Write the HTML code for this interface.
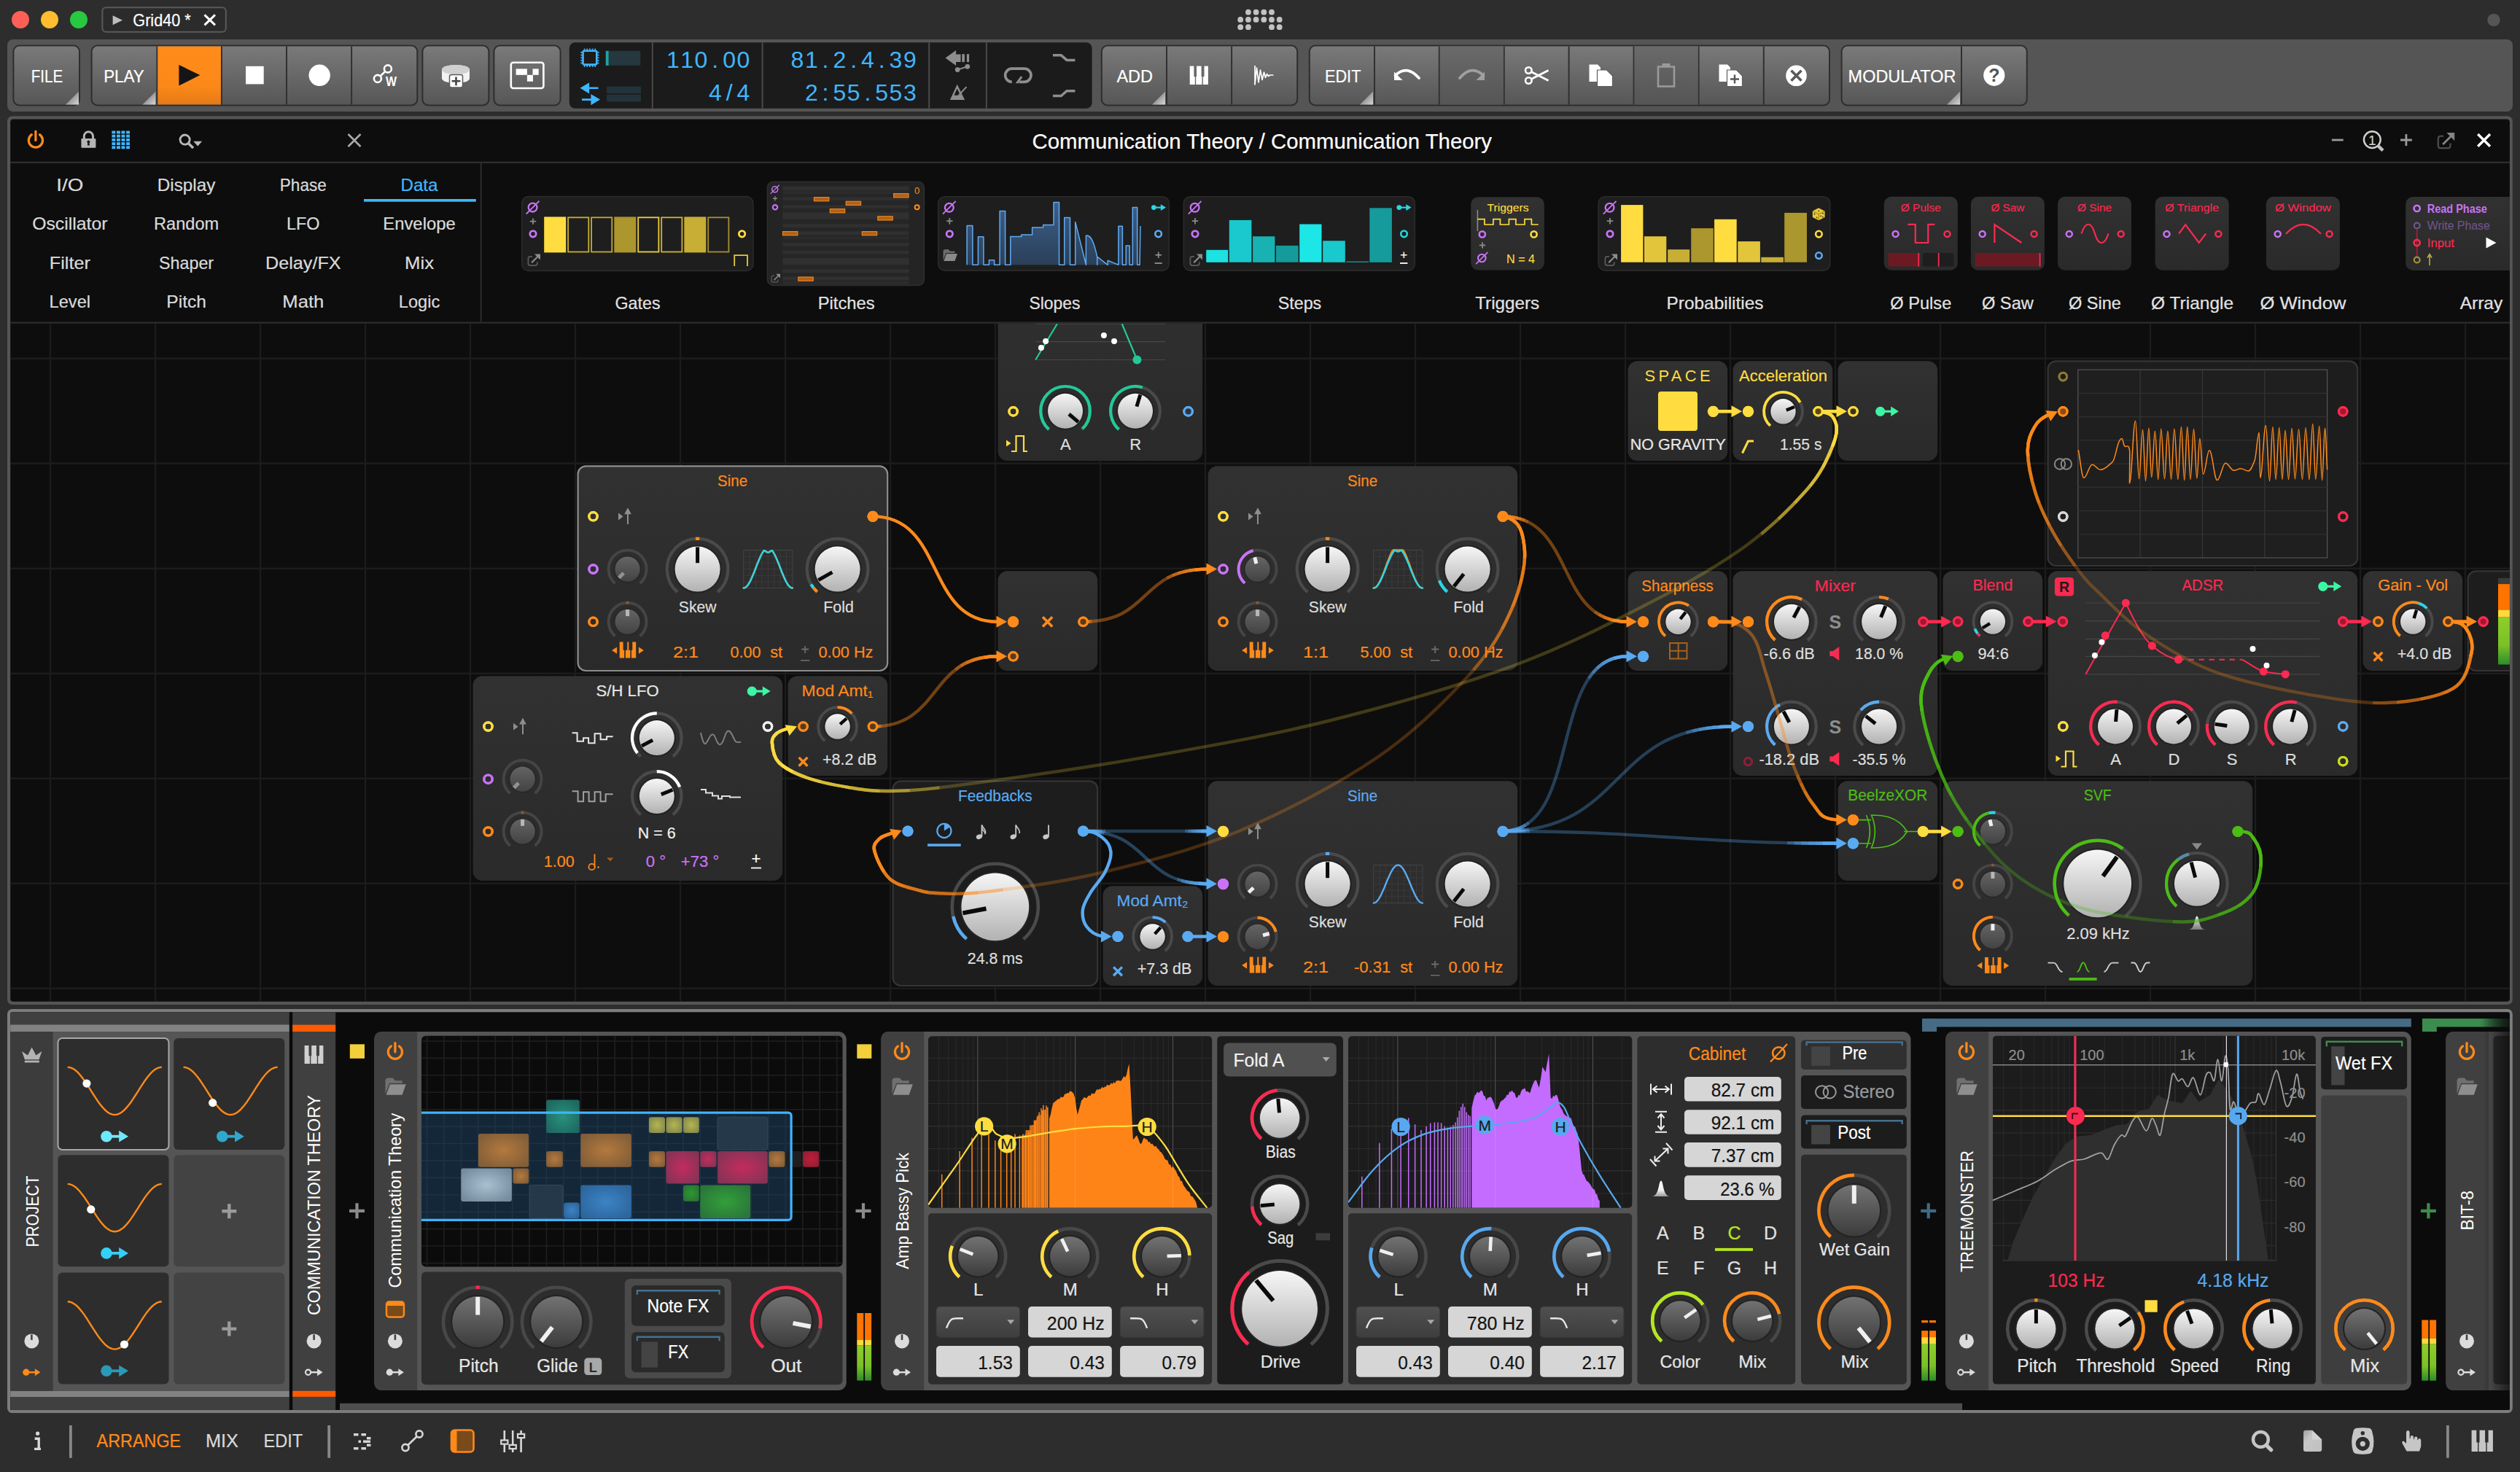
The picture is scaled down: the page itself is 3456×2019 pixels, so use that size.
<!DOCTYPE html>
<html><head><meta charset="utf-8"><title>Grid40</title>
<style>
html,body{margin:0;padding:0;background:#2d2d2d;overflow:hidden;}
body{width:3456px;height:2019px;}
svg{display:block;font-family:"Liberation Sans", sans-serif;}
text{white-space:pre;}
</style></head><body>
<svg width="3456" height="2019" viewBox="0 0 3456 2019">
<defs>
<linearGradient id="gLight" x1="0" y1="0" x2="0" y2="1"><stop offset="0" stop-color="#f6f6f6"/><stop offset="1" stop-color="#b2b2b2"/></linearGradient>
<linearGradient id="gDark" x1="0" y1="0" x2="0" y2="1"><stop offset="0" stop-color="#727272"/><stop offset="1" stop-color="#3c3c3c"/></linearGradient>
 <linearGradient id="gDarkS" x1="0" y1="0" x2="0" y2="1"><stop offset="0" stop-color="#646464"/><stop offset="1" stop-color="#434343"/></linearGradient>
<linearGradient id="gBtn" x1="0" y1="0" x2="0" y2="1"><stop offset="0" stop-color="#7a7a7a"/><stop offset="1" stop-color="#565656"/></linearGradient>
<linearGradient id="gBtnDim" x1="0" y1="0" x2="0" y2="1"><stop offset="0" stop-color="#6a6a6a"/><stop offset="1" stop-color="#555555"/></linearGradient>
<linearGradient id="gPlay" x1="0" y1="0" x2="0" y2="1"><stop offset="0" stop-color="#ff8c1a"/><stop offset="0.7" stop-color="#fb8818"/><stop offset="1" stop-color="#e47a17"/></linearGradient>
<linearGradient id="gMod" x1="0" y1="0" x2="0" y2="1"><stop offset="0" stop-color="#313131"/><stop offset="1" stop-color="#2a2a2a"/></linearGradient>
<linearGradient id="gTri" x1="0" y1="0" x2="1" y2="1"><stop offset="0.5" stop-color="#9a9a9a"/><stop offset="1" stop-color="#d8d8d8"/></linearGradient>
<linearGradient id="gSlope" x1="0" y1="0" x2="0" y2="1"><stop offset="0" stop-color="#3c5f8a"/><stop offset="1" stop-color="#2b3f58"/></linearGradient><clipPath id="clipArr"><rect x="3290" y="260" width="151.9" height="180"/></clipPath><clipPath id="clipCanvas"><rect x="14.2" y="443.8" width="3427.7" height="929.9"/></clipPath><linearGradient id="gMeter" x1="0" y1="0" x2="0" y2="1"><stop offset="0" stop-color="#8fce2a"/><stop offset="0.6" stop-color="#7ac026"/><stop offset="1" stop-color="#2c8c2c"/></linearGradient><linearGradient id="gPeak" x1="0" y1="0" x2="0" y2="1"><stop offset="0" stop-color="#f4f4f4"/><stop offset="1" stop-color="#7a7a7a"/></linearGradient><clipPath id="clipGD"><rect x="578" y="1420.7" width="577.5" height="316.9" rx="6"/></clipPath><radialGradient id="gm0" cx="0.5" cy="0.5" r="0.6"><stop offset="0" stop-color="#2a9a82"/><stop offset="1" stop-color="#1f6e66"/></radialGradient><radialGradient id="gm1" cx="0.5" cy="0.5" r="0.6"><stop offset="0" stop-color="#c07f3e"/><stop offset="1" stop-color="#8a6238"/></radialGradient><radialGradient id="gm2" cx="0.5" cy="0.5" r="0.6"><stop offset="0" stop-color="#c07f3e"/><stop offset="1" stop-color="#8a6238"/></radialGradient><radialGradient id="gm3" cx="0.5" cy="0.5" r="0.6"><stop offset="0" stop-color="#c07f3e"/><stop offset="1" stop-color="#8a6238"/></radialGradient><radialGradient id="gm4" cx="0.5" cy="0.5" r="0.6"><stop offset="0" stop-color="#b4ccdc"/><stop offset="1" stop-color="#7c94a6"/></radialGradient><radialGradient id="gm5" cx="0.5" cy="0.5" r="0.6"><stop offset="0" stop-color="#c07f3e"/><stop offset="1" stop-color="#8a6238"/></radialGradient><radialGradient id="gm6" cx="0.5" cy="0.5" r="0.6"><stop offset="0" stop-color="#263a4c"/><stop offset="1" stop-color="#263a4c"/></radialGradient><radialGradient id="gm7" cx="0.5" cy="0.5" r="0.6"><stop offset="0" stop-color="#3f8ad0"/><stop offset="1" stop-color="#2e6aa4"/></radialGradient><radialGradient id="gm8" cx="0.5" cy="0.5" r="0.6"><stop offset="0" stop-color="#3f8ad0"/><stop offset="1" stop-color="#2e6aa4"/></radialGradient><radialGradient id="gm9" cx="0.5" cy="0.5" r="0.6"><stop offset="0" stop-color="#c0c050"/><stop offset="1" stop-color="#8c9050"/></radialGradient><radialGradient id="gm10" cx="0.5" cy="0.5" r="0.6"><stop offset="0" stop-color="#c0c050"/><stop offset="1" stop-color="#8c9050"/></radialGradient><radialGradient id="gm11" cx="0.5" cy="0.5" r="0.6"><stop offset="0" stop-color="#c0c050"/><stop offset="1" stop-color="#8c9050"/></radialGradient><radialGradient id="gm12" cx="0.5" cy="0.5" r="0.6"><stop offset="0" stop-color="#263a4c"/><stop offset="1" stop-color="#263a4c"/></radialGradient><radialGradient id="gm13" cx="0.5" cy="0.5" r="0.6"><stop offset="0" stop-color="#c07f3e"/><stop offset="1" stop-color="#8a6238"/></radialGradient><radialGradient id="gm14" cx="0.5" cy="0.5" r="0.6"><stop offset="0" stop-color="#d02c60"/><stop offset="1" stop-color="#8e3458"/></radialGradient><radialGradient id="gm15" cx="0.5" cy="0.5" r="0.6"><stop offset="0" stop-color="#d02c60"/><stop offset="1" stop-color="#8e3458"/></radialGradient><radialGradient id="gm16" cx="0.5" cy="0.5" r="0.6"><stop offset="0" stop-color="#d02c60"/><stop offset="1" stop-color="#8e3458"/></radialGradient><radialGradient id="gm17" cx="0.5" cy="0.5" r="0.6"><stop offset="0" stop-color="#c07f3e"/><stop offset="1" stop-color="#8a6238"/></radialGradient><radialGradient id="gm18" cx="0.5" cy="0.5" r="0.6"><stop offset="0" stop-color="#202020"/><stop offset="1" stop-color="#202020"/></radialGradient><radialGradient id="gm19" cx="0.5" cy="0.5" r="0.6"><stop offset="0" stop-color="#d01c3c"/><stop offset="1" stop-color="#9a2038"/></radialGradient><radialGradient id="gm20" cx="0.5" cy="0.5" r="0.6"><stop offset="0" stop-color="#2ea030"/><stop offset="1" stop-color="#2a7a34"/></radialGradient><radialGradient id="gm21" cx="0.5" cy="0.5" r="0.6"><stop offset="0" stop-color="#34a83a"/><stop offset="1" stop-color="#2c7c3a"/></radialGradient><clipPath id="clipSp1273"><rect x="1273" y="1421.2" width="389.2" height="235.6" rx="5"/></clipPath><linearGradient id="gDrop" x1="0" y1="0" x2="0" y2="1"><stop offset="0" stop-color="#505050"/><stop offset="1" stop-color="#3e3e3e"/></linearGradient><clipPath id="clipSp1849"><rect x="1849" y="1421.2" width="389.3" height="235.6" rx="5"/></clipPath><linearGradient id="gPeak2" x1="0" y1="0" x2="0" y2="1"><stop offset="0" stop-color="#ffffff"/><stop offset="0.6" stop-color="#f0f0f0"/><stop offset="1" stop-color="#9a9a9a"/></linearGradient><linearGradient id="gGreenBar" gradientUnits="userSpaceOnUse" x1="3322" y1="0" x2="3442" y2="0"><stop offset="0" stop-color="#3c8c50"/><stop offset="0.65" stop-color="#3c8c50"/><stop offset="1" stop-color="#1c3a24"/></linearGradient><clipPath id="clipB8"><rect x="3340" y="1388.3" width="101.8" height="545"/></clipPath><linearGradient id="gFadeR" gradientUnits="userSpaceOnUse" x1="3405" y1="0" x2="3442" y2="0"><stop offset="0" stop-color="#0b0b0b" stop-opacity="0"/><stop offset="1" stop-color="#0b0b0b" stop-opacity="0.75"/></linearGradient><linearGradient id="gFile" x1="0" y1="0" x2="1" y2="1"><stop offset="0" stop-color="#a0a0a0"/><stop offset="0.35" stop-color="#c6c6c6"/><stop offset="1" stop-color="#c0c0c0"/></linearGradient>
</defs>
<rect x="0.0" y="0.0" width="3456.0" height="2019.0" fill="#2d2d2d"/>
<circle cx="28.0" cy="27.0" r="12.0" fill="#ff5f57"/>
<circle cx="68.0" cy="27.0" r="12.0" fill="#febc2e"/>
<circle cx="108.0" cy="27.0" r="12.0" fill="#28c840"/>
<rect x="140.4" y="10.3" width="169.4" height="33.4" fill="#2b2b2b" rx="5" stroke="#5a5a5a" stroke-width="2"/>
<path d="M154.6,21.2L168,27.7L154.6,34.2Z" fill="#bdbdbd"/>
<text x="182.3" y="35.9" font-size="24" fill="#ffffff" text-anchor="start" textLength="79.4" lengthAdjust="spacingAndGlyphs" stroke="#ffffff" stroke-width="0.22">Grid40 *</text>
<path d="M280.5,20.3L295,34.4M295,20.3L280.5,34.4" fill="none" stroke="#ffffff" stroke-width="3"/>
<circle cx="1711.9" cy="16.7" r="3.9" fill="#c2c2c2"/>
<circle cx="1722.6" cy="16.7" r="3.9" fill="#c2c2c2"/>
<circle cx="1733.3" cy="16.7" r="3.9" fill="#c2c2c2"/>
<circle cx="1744.0" cy="16.7" r="3.9" fill="#c2c2c2"/>
<circle cx="1701.2" cy="26.9" r="3.9" fill="#c2c2c2"/>
<circle cx="1711.9" cy="26.9" r="3.9" fill="#c2c2c2"/>
<circle cx="1722.6" cy="26.9" r="3.9" fill="#c2c2c2"/>
<circle cx="1733.3" cy="26.9" r="3.9" fill="#c2c2c2"/>
<circle cx="1744.0" cy="26.9" r="3.9" fill="#c2c2c2"/>
<circle cx="1754.7" cy="26.9" r="3.9" fill="#c2c2c2"/>
<circle cx="1701.2" cy="37.2" r="3.9" fill="#c2c2c2"/>
<circle cx="1711.9" cy="37.2" r="3.9" fill="#c2c2c2"/>
<circle cx="1744.0" cy="37.2" r="3.9" fill="#c2c2c2"/>
<circle cx="1754.7" cy="37.2" r="3.9" fill="#c2c2c2"/>
<circle cx="3420.0" cy="27.4" r="8.7" fill="#555555"/>
<rect x="10.0" y="54.0" width="3436.0" height="99.0" fill="#555555" rx="8"/>
<rect x="18.4" y="62.6" width="90.6" height="81.8" fill="url(#gBtn)" rx="8" stroke="#2e2e2e" stroke-width="2"/>
<path d="M108,143.4L90,143.4L108,125.4Z" fill="url(#gTri)"/>
<text x="64.5" y="112.5" font-size="24" fill="#ffffff" text-anchor="middle" textLength="43.3" lengthAdjust="spacingAndGlyphs" stroke="#ffffff" stroke-width="0.22">FILE</text>
<rect x="125.6" y="62.6" width="446.7" height="81.8" fill="url(#gBtn)" rx="8" stroke="#2e2e2e" stroke-width="2"/>
<line x1="215.4" y1="63.6" x2="215.4" y2="143.4" stroke="#303030" stroke-width="2" />
<line x1="303.9" y1="63.6" x2="303.9" y2="143.4" stroke="#303030" stroke-width="2" />
<line x1="393.0" y1="63.6" x2="393.0" y2="143.4" stroke="#303030" stroke-width="2" />
<line x1="482.1" y1="63.6" x2="482.1" y2="143.4" stroke="#303030" stroke-width="2" />
<rect x="216.4" y="63.6" width="86.5" height="79.8" fill="url(#gPlay)"/>
<path d="M213.4,143.4L195.4,143.4L213.4,125.4Z" fill="url(#gTri)"/>
<text x="170.0" y="112.5" font-size="24" fill="#ffffff" text-anchor="middle" textLength="55.6" lengthAdjust="spacingAndGlyphs" stroke="#ffffff" stroke-width="0.22">PLAY</text>
<path d="M245.4,88.9L274.3,103.1L245.4,117.4Z" fill="#151515"/>
<rect x="337.0" y="90.8" width="24.7" height="24.6" fill="#ffffff"/>
<circle cx="438.2" cy="103.3" r="14.7" fill="#ffffff"/>
<line x1="519.5" y1="106.4" x2="530.3" y2="96.0" stroke="#ffffff" stroke-width="2.6" />
<circle cx="531.9" cy="94.4" r="5.0" fill="#666" stroke="#ffffff" stroke-width="2.6"/>
<circle cx="517.9" cy="107.9" r="5.0" fill="#666" stroke="#ffffff" stroke-width="2.6"/>
<text x="536.6" y="117.5" font-size="19" fill="#ffffff" text-anchor="middle" textLength="15.0" lengthAdjust="spacingAndGlyphs" font-weight="bold">W</text>
<rect x="579.4" y="62.6" width="91.0" height="81.8" fill="url(#gBtn)" rx="8" stroke="#2e2e2e" stroke-width="2"/>
<path d="M606,95.5A19,6.6 0 0 1 644,95.5L644,107.5A19,6.6 0 0 1 606,107.5Z" fill="#f2f2f2"/>
<path d="M606,95.5A19,6.6 0 0 0 644,95.5A19,6.6 0 0 0 606,95.5Z" fill="#d0d0d0"/>
<rect x="616.5" y="102.5" width="18.0" height="17.5" fill="#ffffff" rx="2.5" stroke="#5c5c5c" stroke-width="1.5"/>
<path d="M625.5,105.5V117.2M619.6,111.3H631.4" fill="none" stroke="#444" stroke-width="2.6"/>
<rect x="677.4" y="62.6" width="91.2" height="81.8" fill="url(#gBtn)" rx="8" stroke="#2e2e2e" stroke-width="2"/>
<rect x="700.8" y="85.8" width="44.6" height="35.2" fill="none" rx="3" stroke="#ffffff" stroke-width="2.6"/>
<rect x="707.6" y="94.4" width="15.3" height="8.4" fill="#ffffff"/>
<rect x="730.5" y="94.4" width="8.2" height="8.4" fill="#ffffff"/>
<rect x="722.9" y="102.8" width="8.1" height="8.9" fill="#ffffff"/>
<rect x="780.8" y="58.2" width="716.8" height="90.6" fill="#1b1b1b" rx="8"/>
<line x1="894.8" y1="58.2" x2="894.8" y2="148.8" stroke="#4a4a4a" stroke-width="2" />
<line x1="1045.6" y1="58.2" x2="1045.6" y2="148.8" stroke="#4a4a4a" stroke-width="2" />
<line x1="1274.2" y1="58.2" x2="1274.2" y2="148.8" stroke="#4a4a4a" stroke-width="2" />
<line x1="1352.9" y1="58.2" x2="1352.9" y2="148.8" stroke="#4a4a4a" stroke-width="2" />
<rect x="799.5" y="69.8" width="18.8" height="18.8" fill="none" rx="2" stroke="#40b6ff" stroke-width="2.6"/>
<line x1="801.6" y1="66.6" x2="801.6" y2="68.6" stroke="#40b6ff" stroke-width="1.8" />
<line x1="801.6" y1="89.9" x2="801.6" y2="91.9" stroke="#40b6ff" stroke-width="1.8" />
<line x1="796.4" y1="71.9" x2="798.4" y2="71.9" stroke="#40b6ff" stroke-width="1.8" />
<line x1="819.4" y1="71.9" x2="821.4" y2="71.9" stroke="#40b6ff" stroke-width="1.8" />
<line x1="805.2" y1="66.6" x2="805.2" y2="68.6" stroke="#40b6ff" stroke-width="1.8" />
<line x1="805.2" y1="89.9" x2="805.2" y2="91.9" stroke="#40b6ff" stroke-width="1.8" />
<line x1="796.4" y1="75.6" x2="798.4" y2="75.6" stroke="#40b6ff" stroke-width="1.8" />
<line x1="819.4" y1="75.6" x2="821.4" y2="75.6" stroke="#40b6ff" stroke-width="1.8" />
<line x1="808.9" y1="66.6" x2="808.9" y2="68.6" stroke="#40b6ff" stroke-width="1.8" />
<line x1="808.9" y1="89.9" x2="808.9" y2="91.9" stroke="#40b6ff" stroke-width="1.8" />
<line x1="796.4" y1="79.2" x2="798.4" y2="79.2" stroke="#40b6ff" stroke-width="1.8" />
<line x1="819.4" y1="79.2" x2="821.4" y2="79.2" stroke="#40b6ff" stroke-width="1.8" />
<line x1="812.6" y1="66.6" x2="812.6" y2="68.6" stroke="#40b6ff" stroke-width="1.8" />
<line x1="812.6" y1="89.9" x2="812.6" y2="91.9" stroke="#40b6ff" stroke-width="1.8" />
<line x1="796.4" y1="82.9" x2="798.4" y2="82.9" stroke="#40b6ff" stroke-width="1.8" />
<line x1="819.4" y1="82.9" x2="821.4" y2="82.9" stroke="#40b6ff" stroke-width="1.8" />
<line x1="816.2" y1="66.6" x2="816.2" y2="68.6" stroke="#40b6ff" stroke-width="1.8" />
<line x1="816.2" y1="89.9" x2="816.2" y2="91.9" stroke="#40b6ff" stroke-width="1.8" />
<line x1="796.4" y1="86.5" x2="798.4" y2="86.5" stroke="#40b6ff" stroke-width="1.8" />
<line x1="819.4" y1="86.5" x2="821.4" y2="86.5" stroke="#40b6ff" stroke-width="1.8" />
<rect x="830.8" y="69.8" width="47.5" height="20.1" fill="#25373f"/>
<rect x="830.8" y="69.8" width="3.8" height="20.1" fill="#1fa3a3"/>
<path d="M820.5,120.8H801M806.8,115.5L798,120.8L806.8,126.1Z" fill="#40b6ff" stroke="#40b6ff" stroke-width="2.6" stroke-linejoin="miter"/>
<path d="M798,136.6H817.5M811.7,131.3L820.5,136.6L811.7,141.9Z" fill="#40b6ff" stroke="#40b6ff" stroke-width="2.6"/>
<rect x="832.0" y="118.6" width="47.0" height="9.6" fill="#22333b"/>
<rect x="832.0" y="130.0" width="47.0" height="9.4" fill="#22333b"/>
<text x="922.9 942.1 961.5 980.8 1000.1 1019.4" y="93.3" font-size="32" fill="#40b6ff" text-anchor="middle">110.00</text>
<text x="980.8 1000.1 1019.4" y="137.7" font-size="32" fill="#40b6ff" text-anchor="middle">4/4</text>
<text x="1093.4 1112.8 1132.0 1151.3 1170.6 1189.9 1209.2 1228.5 1247.8" y="93.3" font-size="32" fill="#40b6ff" text-anchor="middle">81.2.4.39</text>
<text x="1112.8 1132.0 1151.3 1170.6 1189.9 1209.2 1228.5 1247.8" y="137.7" font-size="32" fill="#40b6ff" text-anchor="middle">2:55.553</text>
<path d="M1296.5,79.6L1311.1,69.1V74.6H1317.5V85.1H1311.1V90.1Z" fill="#8e8e8e"/>
<rect x="1319.3" y="74.2" width="3.6" height="10.9" fill="#8e8e8e"/>
<rect x="1325.9" y="74.2" width="3.2" height="10.9" fill="#8e8e8e"/>
<line x1="1313.2" y1="95.6" x2="1326.8" y2="91.3" stroke="#8e8e8e" stroke-width="2" />
<circle cx="1313.2" cy="95.6" r="3.4" fill="#8e8e8e"/>
<circle cx="1326.8" cy="91.3" r="3.4" fill="#8e8e8e"/>
<path d="M1312.7,115.7L1323.1,137H1302.9Z M1312.7,121.6L1317.2,130.7H1308.4Z" fill="#8e8e8e" fill-rule="evenodd"/>
<line x1="1314.5" y1="131.0" x2="1325.5" y2="119.1" stroke="#8e8e8e" stroke-width="1.9" />
<path d="M1387.7,112.3A9.05,9.05 0 0 1 1387.7,94.2H1404.9A9.05,9.05 0 0 1 1404.9,112.3H1398" fill="none" stroke="#8e8e8e" stroke-width="3.7"/>
<path d="M1392.7,114.15L1400,104.3L1402.4,105.9L1397.6,112.3V114.15Z" fill="#8e8e8e"/>
<path d="M1443.9,75.8H1455.3L1463,82.4H1474.4" fill="none" stroke="#8e8e8e" stroke-width="3.5" stroke-linejoin="miter"/>
<path d="M1443.9,131.5H1455.3L1463,124.8H1474.4" fill="none" stroke="#8e8e8e" stroke-width="3.5" stroke-linejoin="miter"/>
<rect x="1510.8" y="62.6" width="268.4" height="81.8" fill="url(#gBtn)" rx="8" stroke="#2e2e2e" stroke-width="2"/>
<line x1="1600.0" y1="63.6" x2="1600.0" y2="143.4" stroke="#303030" stroke-width="2" />
<line x1="1689.1" y1="63.6" x2="1689.1" y2="143.4" stroke="#303030" stroke-width="2" />
<path d="M1598,143.4L1580,143.4L1598,125.4Z" fill="url(#gTri)"/>
<text x="1556.2" y="112.5" font-size="24" fill="#ffffff" text-anchor="middle" textLength="49.6" lengthAdjust="spacingAndGlyphs" stroke="#ffffff" stroke-width="0.22">ADD</text>
<rect x="1631.7" y="90.6" width="25.2" height="25.4" fill="#ffffff"/>
<rect x="1637.4" y="90.1" width="3.6" height="15.0" fill="#686868"/>
<rect x="1647.6" y="90.1" width="3.9" height="15.0" fill="#686868"/>
<line x1="1639.5" y1="104.6" x2="1639.5" y2="116.5" stroke="#686868" stroke-width="1.4" />
<line x1="1649.2" y1="104.6" x2="1649.2" y2="116.5" stroke="#686868" stroke-width="1.4" />
<path d="M1721,90V116L1723.5,93L1726,113L1728.5,96L1731,109.5L1733.5,99L1735.5,106.5L1737.5,101.5L1739.5,104.5L1741.5,103H1746.5" fill="none" stroke="#ffffff" stroke-width="1.7" stroke-linejoin="round"/>
<rect x="1795.8" y="62.6" width="713.2" height="81.8" fill="url(#gBtn)" rx="8" stroke="#2e2e2e" stroke-width="2"/>
<line x1="1885.0" y1="63.6" x2="1885.0" y2="143.4" stroke="#303030" stroke-width="2" />
<line x1="1973.8" y1="63.6" x2="1973.8" y2="143.4" stroke="#303030" stroke-width="2" />
<line x1="2062.7" y1="63.6" x2="2062.7" y2="143.4" stroke="#303030" stroke-width="2" />
<line x1="2151.6" y1="63.6" x2="2151.6" y2="143.4" stroke="#303030" stroke-width="2" />
<line x1="2240.6" y1="63.6" x2="2240.6" y2="143.4" stroke="#303030" stroke-width="2" />
<line x1="2329.6" y1="63.6" x2="2329.6" y2="143.4" stroke="#303030" stroke-width="2" />
<line x1="2418.8" y1="63.6" x2="2418.8" y2="143.4" stroke="#303030" stroke-width="2" />
<rect x="1974.8" y="63.6" width="86.9" height="79.8" fill="url(#gBtnDim)"/>
<rect x="2241.6" y="63.6" width="87.0" height="79.8" fill="url(#gBtnDim)"/>
<path d="M1883,143.4L1865,143.4L1883,125.4Z" fill="url(#gTri)"/>
<text x="1841.7" y="112.5" font-size="24" fill="#ffffff" text-anchor="middle" textLength="49.4" lengthAdjust="spacingAndGlyphs" stroke="#ffffff" stroke-width="0.22">EDIT</text>
<path d="M1913.5,103.5Q1929,88 1946,107" fill="none" stroke="#ffffff" stroke-width="3.8" stroke-linecap="round"/>
<path d="M1912,98.5V110H1923.5Z" fill="#ffffff"/>
<path d="M2002,107Q2018,88 2034.5,103.5" fill="none" stroke="#a0a0a0" stroke-width="3.8" stroke-linecap="round"/>
<path d="M2036,98.5V110H2024.5Z" fill="#a0a0a0"/>
<circle cx="2096.3" cy="96.5" r="4.3" fill="none" stroke="#ffffff" stroke-width="2.6"/>
<circle cx="2096.3" cy="110.5" r="4.3" fill="none" stroke="#ffffff" stroke-width="2.6"/>
<path d="M2100,98.5L2123.5,110.5M2100,108.5L2123.5,96.5" fill="none" stroke="#ffffff" stroke-width="3"/>
<path d="M2179.5,88.5H2191L2195,92.5V112H2179.5Z" fill="#ffffff"/>
<path d="M2190.5,96H2203.5L2211.5,104V118.5H2190.5Z" fill="#ffffff" stroke="#5d5d5d" stroke-width="1.2"/>
<rect x="2274.0" y="91.5" width="22.0" height="27.0" fill="none" stroke="#9a9a9a" stroke-width="2.6"/>
<rect x="2279.5" y="87.0" width="11.0" height="5.0" fill="#9a9a9a"/>
<path d="M2357.5,88.5H2369L2373,92.5V112H2357.5Z" fill="#ffffff"/>
<path d="M2368.5,96H2381.5L2389.5,104V118.5H2368.5Z" fill="#ffffff" stroke="#5d5d5d" stroke-width="1.2"/>
<path d="M2379,102.5V114.5M2373,108.5H2385" fill="none" stroke="#555" stroke-width="2.4"/>
<circle cx="2463.5" cy="103.8" r="14.3" fill="#ffffff"/>
<path d="M2456.5,96.8L2470.5,110.8M2470.5,96.8L2456.5,110.8" fill="none" stroke="#5a5a5a" stroke-width="3.6"/>
<rect x="2525.6" y="62.6" width="254.2" height="81.8" fill="url(#gBtn)" rx="8" stroke="#2e2e2e" stroke-width="2"/>
<line x1="2690.0" y1="63.6" x2="2690.0" y2="143.4" stroke="#303030" stroke-width="2" />
<path d="M2688,143.4L2670,143.4L2688,125.4Z" fill="url(#gTri)"/>
<text x="2608.5" y="112.5" font-size="24" fill="#ffffff" text-anchor="middle" textLength="147.8" lengthAdjust="spacingAndGlyphs" stroke="#ffffff" stroke-width="0.22">MODULATOR</text>
<circle cx="2734.8" cy="103.3" r="14.6" fill="#ffffff"/>
<text x="2734.8" y="112.2" font-size="25" fill="#555555" text-anchor="middle" font-weight="bold">?</text>
<rect x="10.0" y="159.2" width="3435.8" height="1218.9" fill="#555555" rx="7"/>
<rect x="14.2" y="163.4" width="3427.7" height="1210.3" fill="#0d0d0d" rx="4"/>
<line x1="14.2" y1="222.8" x2="3441.9" y2="222.8" stroke="#333333" stroke-width="2" />
<line x1="14.2" y1="442.6" x2="3441.9" y2="442.6" stroke="#2c2c2c" stroke-width="2.4" />
<line x1="659.7" y1="223.8" x2="659.7" y2="441.6" stroke="#2c2c2c" stroke-width="2" />
<path d="M54.41,184.64A9.60,9.60 0 1 1 43.39,184.64" fill="none" stroke="#ff8a1a" stroke-width="3.2" stroke-linecap="round"/>
<line x1="48.9" y1="180.2" x2="48.9" y2="192.5" stroke="#ff8a1a" stroke-width="3.2" stroke-linecap="round"/>
<path d="M115.3,190V186.8A6.1,6.1 0 0 1 127.5,186.8V190" fill="none" stroke="#b4b4b4" stroke-width="3"/>
<rect x="111.4" y="190.0" width="20.0" height="12.8" fill="#b4b4b4" rx="1"/>
<circle cx="121.4" cy="194.6" r="2.0" fill="#1a1a1a"/>
<path d="M120.4,195H122.4L123,199.5H119.8Z" fill="#1a1a1a"/>
<rect x="153.4" y="179.5" width="4.9" height="3.9" fill="#40b6ff"/>
<rect x="160.0" y="179.5" width="4.9" height="3.9" fill="#40b6ff"/>
<rect x="166.5" y="179.5" width="4.9" height="3.9" fill="#40b6ff"/>
<rect x="173.1" y="179.5" width="4.9" height="3.9" fill="#40b6ff"/>
<rect x="153.4" y="184.7" width="4.9" height="3.9" fill="#40b6ff"/>
<rect x="160.0" y="184.7" width="4.9" height="3.9" fill="#40b6ff"/>
<rect x="166.5" y="184.7" width="4.9" height="3.9" fill="#40b6ff"/>
<rect x="173.1" y="184.7" width="4.9" height="3.9" fill="#40b6ff"/>
<rect x="153.4" y="189.9" width="4.9" height="3.9" fill="#40b6ff"/>
<rect x="160.0" y="189.9" width="4.9" height="3.9" fill="#40b6ff"/>
<rect x="166.5" y="189.9" width="4.9" height="3.9" fill="#40b6ff"/>
<rect x="173.1" y="189.9" width="4.9" height="3.9" fill="#40b6ff"/>
<rect x="153.4" y="195.1" width="4.9" height="3.9" fill="#40b6ff"/>
<rect x="160.0" y="195.1" width="4.9" height="3.9" fill="#40b6ff"/>
<rect x="166.5" y="195.1" width="4.9" height="3.9" fill="#40b6ff"/>
<rect x="173.1" y="195.1" width="4.9" height="3.9" fill="#40b6ff"/>
<rect x="153.4" y="200.3" width="4.9" height="3.9" fill="#40b6ff"/>
<rect x="160.0" y="200.3" width="4.9" height="3.9" fill="#40b6ff"/>
<rect x="166.5" y="200.3" width="4.9" height="3.9" fill="#40b6ff"/>
<rect x="173.1" y="200.3" width="4.9" height="3.9" fill="#40b6ff"/>
<circle cx="253.6" cy="191.6" r="6.6" fill="none" stroke="#b8b8b8" stroke-width="2.8"/>
<line x1="258.5" y1="196.8" x2="265.0" y2="203.0" stroke="#b8b8b8" stroke-width="3.6" />
<path d="M265.2,193.8H277.2L271.2,200.5Z" fill="#b8b8b8"/>
<path d="M477.5,184L494.5,201M494.5,184L477.5,201" fill="none" stroke="#a8a8a8" stroke-width="2.6"/>
<text x="1730.8" y="204.3" font-size="30" fill="#ffffff" text-anchor="middle" textLength="630.5" lengthAdjust="spacingAndGlyphs" stroke="#ffffff" stroke-width="0.22">Communication Theory / Communication Theory</text>
<line x1="3197.9" y1="192.0" x2="3213.7" y2="192.0" stroke="#9a9a9a" stroke-width="2.8" />
<circle cx="3253.3" cy="191.6" r="11.4" fill="none" stroke="#d0d0d0" stroke-width="2.4"/>
<line x1="3261.5" y1="200.2" x2="3268.0" y2="206.4" stroke="#c0c0c0" stroke-width="4.6" />
<text x="3253.3" y="198.5" font-size="19" fill="#d0d0d0" text-anchor="middle" stroke="#d0d0d0" stroke-width="0.14">1</text>
<path d="M3292,192H3307.8M3299.9,184.1V199.9" fill="none" stroke="#9a9a9a" stroke-width="2.8"/>
<path d="M3351.2,186.6H3347.6Q3343.8,186.6 3343.8,190.4V199.4Q3343.8,203.2 3347.6,203.2H3356.6Q3360.4,203.2 3360.4,199.4V196.6" fill="none" stroke="#4c4c4c" stroke-width="2.3040000000000003"/>
<line x1="3350.2" y1="198.1" x2="3361.7" y2="186.6" stroke="#858585" stroke-width="2.8160000000000003" />
<path d="M3355.3,182.1H3366.2V193.0Z" fill="#858585"/>
<path d="M3398.2,184L3415,200.8M3415,184L3398.2,200.8" fill="none" stroke="#ffffff" stroke-width="3.4"/>
<text x="95.8" y="262.0" font-size="24" fill="#dadada" text-anchor="middle" textLength="37.0" lengthAdjust="spacingAndGlyphs" stroke="#dadada" stroke-width="0.22">I/O</text>
<text x="255.6" y="262.0" font-size="24" fill="#dadada" text-anchor="middle" textLength="79.5" lengthAdjust="spacingAndGlyphs" stroke="#dadada" stroke-width="0.22">Display</text>
<text x="415.8" y="262.0" font-size="24" fill="#dadada" text-anchor="middle" textLength="64.0" lengthAdjust="spacingAndGlyphs" stroke="#dadada" stroke-width="0.22">Phase</text>
<text x="575.0" y="262.0" font-size="24" fill="#40b6ff" text-anchor="middle" textLength="51.0" lengthAdjust="spacingAndGlyphs" stroke="#40b6ff" stroke-width="0.22">Data</text>
<text x="95.8" y="315.3" font-size="24" fill="#dadada" text-anchor="middle" textLength="103.3" lengthAdjust="spacingAndGlyphs" stroke="#dadada" stroke-width="0.22">Oscillator</text>
<text x="255.6" y="315.3" font-size="24" fill="#dadada" text-anchor="middle" textLength="89.0" lengthAdjust="spacingAndGlyphs" stroke="#dadada" stroke-width="0.22">Random</text>
<text x="415.8" y="315.3" font-size="24" fill="#dadada" text-anchor="middle" textLength="45.5" lengthAdjust="spacingAndGlyphs" stroke="#dadada" stroke-width="0.22">LFO</text>
<text x="575.0" y="315.3" font-size="24" fill="#dadada" text-anchor="middle" textLength="99.5" lengthAdjust="spacingAndGlyphs" stroke="#dadada" stroke-width="0.22">Envelope</text>
<text x="95.8" y="368.5" font-size="24" fill="#dadada" text-anchor="middle" textLength="56.0" lengthAdjust="spacingAndGlyphs" stroke="#dadada" stroke-width="0.22">Filter</text>
<text x="255.6" y="368.5" font-size="24" fill="#dadada" text-anchor="middle" textLength="75.0" lengthAdjust="spacingAndGlyphs" stroke="#dadada" stroke-width="0.22">Shaper</text>
<text x="415.8" y="368.5" font-size="24" fill="#dadada" text-anchor="middle" textLength="103.5" lengthAdjust="spacingAndGlyphs" stroke="#dadada" stroke-width="0.22">Delay/FX</text>
<text x="575.0" y="368.5" font-size="24" fill="#dadada" text-anchor="middle" textLength="40.0" lengthAdjust="spacingAndGlyphs" stroke="#dadada" stroke-width="0.22">Mix</text>
<text x="95.8" y="421.7" font-size="24" fill="#dadada" text-anchor="middle" textLength="56.5" lengthAdjust="spacingAndGlyphs" stroke="#dadada" stroke-width="0.22">Level</text>
<text x="255.6" y="421.7" font-size="24" fill="#dadada" text-anchor="middle" textLength="54.5" lengthAdjust="spacingAndGlyphs" stroke="#dadada" stroke-width="0.22">Pitch</text>
<text x="415.8" y="421.7" font-size="24" fill="#dadada" text-anchor="middle" textLength="57.0" lengthAdjust="spacingAndGlyphs" stroke="#dadada" stroke-width="0.22">Math</text>
<text x="575.0" y="421.7" font-size="24" fill="#dadada" text-anchor="middle" textLength="56.5" lengthAdjust="spacingAndGlyphs" stroke="#dadada" stroke-width="0.22">Logic</text>
<rect x="499.0" y="273.0" width="153.8" height="3.7" fill="#40b6ff"/>
<rect x="715.7" y="269.6" width="317.2" height="101.8" fill="#1e1e1e" rx="9" stroke="#2b2b2b" stroke-width="1.6"/>
<circle cx="730.6" cy="284.6" r="5.9" fill="none" stroke="#c873f7" stroke-width="2.3100000000000005"/>
<line x1="721.7" y1="293.5" x2="739.5" y2="275.7" stroke="#c873f7" stroke-width="1.8900000000000001" />
<path d="M726.8,303.6H735.2M731,299.40000000000003V307.8" fill="none" stroke="#8a8a8a" stroke-width="1.8"/>
<circle cx="731.0" cy="320.8" r="4.2" fill="none" stroke="#c873f7" stroke-width="2.8"/>
<path d="M730.0,351.8H727.2Q724.4,351.8 724.4,354.6V361.2Q724.4,364.1 727.2,364.1H733.9Q736.8,364.1 736.8,361.2V359.2" fill="none" stroke="#5c5c5c" stroke-width="1.71"/>
<line x1="729.1" y1="360.3" x2="737.7" y2="351.8" stroke="#8e8e8e" stroke-width="2.09" />
<path d="M733.0,348.4H741.0V356.5Z" fill="#8e8e8e"/>
<rect x="746.2" y="297.4" width="30.0" height="49.0" fill="#ffdd40"/>
<rect x="779.1" y="298.3" width="28.2" height="47.2" fill="none" stroke="#c9b030" stroke-width="1.8"/>
<rect x="811.1" y="298.3" width="28.2" height="47.2" fill="none" stroke="#c4aa30" stroke-width="1.8"/>
<rect x="842.3" y="297.4" width="30.0" height="49.0" fill="#ac962e"/>
<rect x="875.2" y="298.3" width="28.2" height="47.2" fill="none" stroke="#efd040" stroke-width="1.8"/>
<rect x="907.2" y="298.3" width="28.2" height="47.2" fill="none" stroke="#d0b435" stroke-width="1.8"/>
<rect x="938.3" y="297.4" width="30.0" height="49.0" fill="#c8ae35"/>
<rect x="971.2" y="298.3" width="28.2" height="47.2" fill="none" stroke="#a89030" stroke-width="1.8"/>
<circle cx="1017.6" cy="320.8" r="4.2" fill="none" stroke="#ffdd40" stroke-width="2.8"/>
<path d="M1007.2,365V350.2H1025V365" fill="none" stroke="#e8c83a" stroke-width="1.8"/>
<text x="874.5" y="423.6" font-size="24" fill="#e2e2e2" text-anchor="middle" textLength="62.0" lengthAdjust="spacingAndGlyphs" stroke="#e2e2e2" stroke-width="0.22">Gates</text>
<rect x="1052.4" y="249.3" width="215.0" height="142.1" fill="#242424" rx="8" stroke="#2d2d2d" stroke-width="1.6"/>
<rect x="1073.3" y="255.6" width="173.4" height="135.0" fill="#262626"/>
<rect x="1073.3" y="255.6" width="173.4" height="5.6" fill="#303030"/>
<rect x="1073.3" y="262.3" width="173.4" height="4.0" fill="#2b2b2b"/>
<rect x="1073.3" y="270.5" width="173.4" height="4.2" fill="#303030"/>
<rect x="1073.3" y="281.5" width="173.4" height="4.2" fill="#303030"/>
<rect x="1073.3" y="291.5" width="173.4" height="9.2" fill="#303030"/>
<rect x="1073.3" y="307.3" width="173.4" height="4.6" fill="#303030"/>
<rect x="1073.3" y="317.4" width="173.4" height="4.6" fill="#303030"/>
<rect x="1073.3" y="324.3" width="173.4" height="4.2" fill="#2b2b2b"/>
<rect x="1073.3" y="333.3" width="173.4" height="4.4" fill="#303030"/>
<rect x="1073.3" y="344.0" width="173.4" height="4.4" fill="#303030"/>
<rect x="1073.3" y="354.0" width="173.4" height="9.2" fill="#303030"/>
<rect x="1073.3" y="369.5" width="173.4" height="4.6" fill="#303030"/>
<rect x="1073.3" y="379.6" width="173.4" height="4.6" fill="#303030"/>
<rect x="1073.3" y="385.3" width="173.4" height="5.2" fill="#2b2b2b"/>
<rect x="1225.6" y="265.6" width="20.4" height="5.2" fill="#b45f14" stroke="#f08a20" stroke-width="1.1"/>
<rect x="1116.4" y="270.6" width="20.4" height="5.2" fill="#b45f14" stroke="#f08a20" stroke-width="1.1"/>
<rect x="1160.2" y="276.2" width="20.4" height="5.2" fill="#b45f14" stroke="#f08a20" stroke-width="1.1"/>
<rect x="1138.3" y="286.6" width="20.4" height="5.2" fill="#b45f14" stroke="#f08a20" stroke-width="1.1"/>
<rect x="1203.8" y="296.8" width="20.4" height="5.2" fill="#b45f14" stroke="#f08a20" stroke-width="1.1"/>
<rect x="1073.5" y="317.6" width="20.4" height="5.2" fill="#b45f14" stroke="#f08a20" stroke-width="1.1"/>
<rect x="1182.3" y="317.6" width="20.4" height="5.2" fill="#b45f14" stroke="#f08a20" stroke-width="1.1"/>
<rect x="1094.8" y="380.0" width="20.4" height="5.2" fill="#b45f14" stroke="#f08a20" stroke-width="1.1"/>
<circle cx="1062.7" cy="259.8" r="4.0" fill="none" stroke="#c873f7" stroke-width="1.584"/>
<line x1="1056.6" y1="265.9" x2="1068.8" y2="253.7" stroke="#c873f7" stroke-width="1.296" />
<path d="M1060,272.3H1066M1063,269.3V275.3" fill="none" stroke="#8a8a8a" stroke-width="1.4"/>
<circle cx="1063.0" cy="284.3" r="3.2" fill="none" stroke="#c873f7" stroke-width="2.1"/>
<path d="M1062.0,378.1H1060.1Q1058.1,378.1 1058.1,380.1V384.9Q1058.1,386.9 1060.1,386.9H1064.9Q1066.9,386.9 1066.9,384.9V383.4" fill="none" stroke="#5c5c5c" stroke-width="1.2240000000000002"/>
<line x1="1061.5" y1="384.2" x2="1067.6" y2="378.1" stroke="#8e8e8e" stroke-width="1.4960000000000002" />
<path d="M1064.2,375.7H1070.0V381.5Z" fill="#8e8e8e"/>
<text x="1257.6" y="265.8" font-size="13" fill="#ff8a1a" text-anchor="middle">0</text>
<circle cx="1257.6" cy="284.3" r="3.0" fill="none" stroke="#ff8a1a" stroke-width="2.0"/>
<text x="1160.7" y="423.6" font-size="24" fill="#e2e2e2" text-anchor="middle" textLength="78.0" lengthAdjust="spacingAndGlyphs" stroke="#e2e2e2" stroke-width="0.22">Pitches</text>
<rect x="1286.7" y="269.7" width="316.6" height="101.4" fill="#1e1e1e" rx="9" stroke="#2b2b2b" stroke-width="1.6"/>
<circle cx="1301.8" cy="284.8" r="5.9" fill="none" stroke="#c873f7" stroke-width="2.3100000000000005"/>
<line x1="1292.9" y1="293.7" x2="1310.7" y2="275.9" stroke="#c873f7" stroke-width="1.8900000000000001" />
<path d="M1298.1,303.2H1306.5M1302.3,299.0V307.4" fill="none" stroke="#8a8a8a" stroke-width="1.8"/>
<circle cx="1302.3" cy="320.8" r="4.2" fill="none" stroke="#c873f7" stroke-width="2.8"/>
<path d="M1293.5,345.0Q1293.5,342 1296.5,342H1300.5L1303.0,344.5H1309.5V347.0H1297.5L1293.5,357.0Z" fill="#6a6a6a"/>
<path d="M1298.0,348.0H1313.0L1309.5,358.0H1294.3Z" fill="#8a8a8a"/>
<path d="M1326.1,363.3L1326.1,309.4L1333.9,309.4L1333.9,363.3L1341.4,363.3L1341.4,324.7L1348.9,324.7L1348.9,363.3L1356.4,363.3L1356.4,356.7L1363.6,356.7L1363.6,363.3L1371.1,363.3L1371.1,289.4L1378.6,289.4L1378.6,363.3L1385.8,363.3L1385.8,324.4L1400.6,324.4L1400.6,321.9L1415.6,321.9L1415.6,311.9L1430.6,311.9L1430.6,308.6L1445.0,308.6L1445.0,277.5L1452.5,277.5L1452.5,363.3L1459.7,363.3L1459.7,298.6L1467.5,298.6L1467.5,363.3L1474.7,363.3L1474.7,304.4L1489.4,363.3L1489.4,323.3C1495.6,321.7 1500.0,330.8 1504.7,352.2L1504.7,363.3L1504.7,352.2L1519.2,363.3L1519.2,357.2L1533.9,363.3L1533.9,310.3L1539.4,310.3L1539.4,363.3L1544.2,363.3L1544.2,336.9L1549.2,336.9L1549.2,363.3L1553.3,363.3L1553.3,284.4L1559.7,284.4L1559.7,363.3L1563.1,363.3L1563.9,310.0L1563.9,363.3L1326.1,363.3Z" fill="url(#gSlope)"/>
<path d="M1326.1,363.3L1326.1,309.4L1333.9,309.4L1333.9,363.3L1341.4,363.3L1341.4,324.7L1348.9,324.7L1348.9,363.3L1356.4,363.3L1356.4,356.7L1363.6,356.7L1363.6,363.3L1371.1,363.3L1371.1,289.4L1378.6,289.4L1378.6,363.3L1385.8,363.3L1385.8,324.4L1400.6,324.4L1400.6,321.9L1415.6,321.9L1415.6,311.9L1430.6,311.9L1430.6,308.6L1445.0,308.6L1445.0,277.5L1452.5,277.5L1452.5,363.3L1459.7,363.3L1459.7,298.6L1467.5,298.6L1467.5,363.3L1474.7,363.3L1474.7,304.4L1489.4,363.3L1489.4,323.3C1495.6,321.7 1500.0,330.8 1504.7,352.2L1504.7,363.3L1504.7,352.2L1519.2,363.3L1519.2,357.2L1533.9,363.3L1533.9,310.3L1539.4,310.3L1539.4,363.3L1544.2,363.3L1544.2,336.9L1549.2,336.9L1549.2,363.3L1553.3,363.3L1553.3,284.4L1559.7,284.4L1559.7,363.3L1563.1,363.3L1563.9,310.0" fill="none" stroke="#5eaaf4" stroke-width="1.5" stroke-linejoin="round"/>
<circle cx="1582.3" cy="284.6" r="3.4" fill="#2bd5e8"/>
<line x1="1582.3" y1="284.6" x2="1592.8" y2="284.6" stroke="#2bd5e8" stroke-width="2.09" />
<path d="M1591.8,280.2L1599.0,284.6L1591.8,289.0Z" fill="#2bd5e8"/>
<circle cx="1588.6" cy="320.8" r="4.3" fill="none" stroke="#5aaaf2" stroke-width="2.6"/>
<text x="1588.6" y="354.5" font-size="17" fill="#a0a0a0" text-anchor="middle" stroke="#a0a0a0" stroke-width="0.14">+</text>
<line x1="1583.5" y1="361.0" x2="1593.7" y2="361.0" stroke="#a0a0a0" stroke-width="1.6" />
<text x="1446.5" y="423.6" font-size="24" fill="#e2e2e2" text-anchor="middle" textLength="70.0" lengthAdjust="spacingAndGlyphs" stroke="#e2e2e2" stroke-width="0.22">Slopes</text>
<rect x="1623.3" y="269.7" width="317.0" height="101.4" fill="#1e1e1e" rx="9" stroke="#2b2b2b" stroke-width="1.6"/>
<circle cx="1638.6" cy="284.8" r="5.9" fill="none" stroke="#c873f7" stroke-width="2.3100000000000005"/>
<line x1="1629.7" y1="293.7" x2="1647.5" y2="275.9" stroke="#c873f7" stroke-width="1.8900000000000001" />
<path d="M1634.8,303.2H1643.2M1639,299.0V307.4" fill="none" stroke="#8a8a8a" stroke-width="1.8"/>
<circle cx="1639.0" cy="320.8" r="4.2" fill="none" stroke="#c873f7" stroke-width="2.8"/>
<path d="M1638.0,351.8H1635.2Q1632.4,351.8 1632.4,354.6V361.2Q1632.4,364.1 1635.2,364.1H1641.9Q1644.8,364.1 1644.8,361.2V359.2" fill="none" stroke="#5c5c5c" stroke-width="1.71"/>
<line x1="1637.2" y1="360.3" x2="1645.7" y2="351.8" stroke="#8e8e8e" stroke-width="2.09" />
<path d="M1641.0,348.4H1649.0V356.5Z" fill="#8e8e8e"/>
<rect x="1654.2" y="342.8" width="30.0" height="17.0" fill="#1ce2e2"/>
<rect x="1685.8" y="301.9" width="30.6" height="57.8" fill="#19c9cd"/>
<rect x="1718.1" y="324.2" width="30.3" height="35.6" fill="#18b2b3"/>
<rect x="1750.0" y="336.9" width="30.6" height="22.8" fill="#159b9b"/>
<rect x="1782.2" y="307.5" width="30.3" height="52.2" fill="#1ce6e6"/>
<rect x="1814.2" y="330.3" width="30.6" height="29.5" fill="#19c9cd"/>
<rect x="1846.4" y="358.6" width="30.6" height="1.1" fill="#18b2b3"/>
<rect x="1878.3" y="285.3" width="30.6" height="74.5" fill="#159b9b"/>
<circle cx="1918.8" cy="284.6" r="3.4" fill="#2bd5e8"/>
<line x1="1918.8" y1="284.6" x2="1929.3" y2="284.6" stroke="#2bd5e8" stroke-width="2.09" />
<path d="M1928.3,280.2L1935.5,284.6L1928.3,289.0Z" fill="#2bd5e8"/>
<circle cx="1925.5" cy="320.8" r="4.3" fill="none" stroke="#22d8d8" stroke-width="2.6"/>
<text x="1925.3" y="354.5" font-size="17" fill="#ffffff" text-anchor="middle" stroke="#ffffff" stroke-width="0.14">+</text>
<line x1="1920.0" y1="361.0" x2="1930.4" y2="361.0" stroke="#ffffff" stroke-width="1.8" />
<text x="1782.5" y="423.6" font-size="24" fill="#e2e2e2" text-anchor="middle" textLength="59.5" lengthAdjust="spacingAndGlyphs" stroke="#e2e2e2" stroke-width="0.22">Steps</text>
<rect x="2017.2" y="270.3" width="100.6" height="100.3" fill="url(#gMod)" rx="10"/>
<text x="2068.0" y="290.0" font-size="15.5" fill="#ffdd40" text-anchor="middle" textLength="57.0" lengthAdjust="spacingAndGlyphs" stroke="#ffdd40" stroke-width="0.14">Triggers</text>
<line x1="2026.4" y1="287.8" x2="2026.4" y2="317.0" stroke="#8a8a8a" stroke-width="1.6" />
<path d="M2026.4,300.6H2035.9V308H2047.9V300.6H2057.4V308H2069.4V300.6H2078.9V308H2090.9V300.6H2100.4V308H2109.7" fill="none" stroke="#ffdd40" stroke-width="1.7"/>
<circle cx="2032.8" cy="321.4" r="4.1" fill="none" stroke="#c873f7" stroke-width="2.6"/>
<circle cx="2103.6" cy="321.4" r="4.1" fill="none" stroke="#ffdd40" stroke-width="2.6"/>
<path d="M2028.8,336.4H2037.2M2033,332.2V340.59999999999997" fill="none" stroke="#8a8a8a" stroke-width="1.8"/>
<circle cx="2032.3" cy="354.0" r="5.3" fill="none" stroke="#c873f7" stroke-width="2.09"/>
<line x1="2024.2" y1="362.1" x2="2040.4" y2="345.9" stroke="#c873f7" stroke-width="1.71" />
<text x="2085.5" y="360.8" font-size="17" fill="#ffdd40" text-anchor="middle" textLength="39.0" lengthAdjust="spacingAndGlyphs" stroke="#ffdd40" stroke-width="0.14">N = 4</text>
<text x="2067.2" y="423.6" font-size="24" fill="#e2e2e2" text-anchor="middle" textLength="88.0" lengthAdjust="spacingAndGlyphs" stroke="#e2e2e2" stroke-width="0.22">Triggers</text>
<rect x="2192.2" y="269.7" width="317.5" height="101.4" fill="#1e1e1e" rx="9" stroke="#2b2b2b" stroke-width="1.6"/>
<circle cx="2207.6" cy="284.8" r="5.9" fill="none" stroke="#c873f7" stroke-width="2.3100000000000005"/>
<line x1="2198.7" y1="293.7" x2="2216.5" y2="275.9" stroke="#c873f7" stroke-width="1.8900000000000001" />
<path d="M2203.8,303.2H2212.2M2208,299.0V307.4" fill="none" stroke="#8a8a8a" stroke-width="1.8"/>
<circle cx="2208.0" cy="320.8" r="4.2" fill="none" stroke="#c873f7" stroke-width="2.8"/>
<path d="M2207.0,351.8H2204.2Q2201.4,351.8 2201.4,354.6V361.2Q2201.4,364.1 2204.2,364.1H2210.9Q2213.8,364.1 2213.8,361.2V359.2" fill="none" stroke="#5c5c5c" stroke-width="1.71"/>
<line x1="2206.2" y1="360.3" x2="2214.7" y2="351.8" stroke="#8e8e8e" stroke-width="2.09" />
<path d="M2209.9,348.4H2218.0V356.5Z" fill="#8e8e8e"/>
<rect x="2223.1" y="281.1" width="30.3" height="78.6" fill="#ffdd40"/>
<rect x="2255.0" y="324.2" width="30.3" height="35.6" fill="#e3c53c"/>
<rect x="2287.2" y="342.2" width="30.0" height="17.5" fill="#c9ae36"/>
<rect x="2319.2" y="313.1" width="30.6" height="46.7" fill="#ac962e"/>
<rect x="2351.1" y="300.8" width="30.6" height="58.9" fill="#ffdd40"/>
<rect x="2383.3" y="331.1" width="30.6" height="28.6" fill="#e3c53c"/>
<rect x="2415.3" y="352.8" width="30.6" height="7.0" fill="#c9ae36"/>
<rect x="2447.2" y="291.9" width="30.8" height="67.8" fill="#ac962e"/>
<path d="M2485.8,289.5L2494,285.3L2502.6,289.5V298L2494.3,302.3L2485.8,298Z" fill="#e8c83a"/>
<path d="M2485.8,289.5L2494.3,293.6L2502.6,289.5M2494.3,293.6V302.3" fill="none" stroke="#8a7420" stroke-width="0.9"/>
<circle cx="2494.2" cy="289.3" r="0.9" fill="#3a3010"/>
<circle cx="2488.5" cy="293.5" r="0.9" fill="#3a3010"/>
<circle cx="2491.6" cy="298.4" r="0.9" fill="#3a3010"/>
<circle cx="2497.0" cy="296.3" r="0.9" fill="#3a3010"/>
<circle cx="2500.0" cy="292.8" r="0.9" fill="#3a3010"/>
<circle cx="2499.8" cy="297.6" r="0.9" fill="#3a3010"/>
<circle cx="2494.4" cy="321.1" r="4.3" fill="none" stroke="#ffdd40" stroke-width="2.6"/>
<circle cx="2494.4" cy="350.6" r="4.3" fill="none" stroke="#5aaaf2" stroke-width="2.6"/>
<text x="2352.0" y="423.6" font-size="24" fill="#e2e2e2" text-anchor="middle" textLength="133.0" lengthAdjust="spacingAndGlyphs" stroke="#e2e2e2" stroke-width="0.22">Probabilities</text>
<rect x="2583.8" y="269.8" width="101.0" height="101.0" fill="url(#gMod)" rx="10"/>
<text x="2634.3" y="290.2" font-size="15.5" fill="#fa2a50" text-anchor="middle" textLength="55.0" lengthAdjust="spacingAndGlyphs" stroke="#fa2a50" stroke-width="0.14">Ø Pulse</text>
<circle cx="2599.6" cy="320.9" r="4.0" fill="none" stroke="#c873f7" stroke-width="2.5"/>
<circle cx="2670.5" cy="320.9" r="4.0" fill="none" stroke="#fa2a50" stroke-width="2.5"/>
<text x="2634.3" y="423.6" font-size="24" fill="#e2e2e2" text-anchor="middle" textLength="84.0" lengthAdjust="spacingAndGlyphs" stroke="#e2e2e2" stroke-width="0.22">Ø Pulse</text>
<path d="M2616.3,307.8H2626.8V333H2644.3V307.8H2653.3" fill="none" stroke="#fa2a50" stroke-width="2.2"/>
<rect x="2589.6" y="347.0" width="42.0" height="18.5" fill="#6b1a24"/>
<rect x="2630.4" y="347.0" width="1.8" height="18.5" fill="#fa2a50"/>
<rect x="2636.8" y="347.0" width="42.5" height="18.5" fill="#1e1e1e" rx="3"/>
<rect x="2657.8" y="347.0" width="1.8" height="18.5" fill="#fa2a50"/>
<rect x="2702.9" y="269.8" width="101.0" height="101.0" fill="url(#gMod)" rx="10"/>
<text x="2753.4" y="290.2" font-size="15.5" fill="#fa2a50" text-anchor="middle" textLength="46.0" lengthAdjust="spacingAndGlyphs" stroke="#fa2a50" stroke-width="0.14">Ø Saw</text>
<circle cx="2718.7" cy="320.9" r="4.0" fill="none" stroke="#c873f7" stroke-width="2.5"/>
<circle cx="2789.6" cy="320.9" r="4.0" fill="none" stroke="#fa2a50" stroke-width="2.5"/>
<text x="2753.4" y="423.6" font-size="24" fill="#e2e2e2" text-anchor="middle" textLength="71.0" lengthAdjust="spacingAndGlyphs" stroke="#e2e2e2" stroke-width="0.22">Ø Saw</text>
<path d="M2735.4,333V308L2772.4,333" fill="none" stroke="#fa2a50" stroke-width="2.2" stroke-linejoin="miter"/>
<rect x="2708.7" y="347.0" width="88.5" height="18.5" fill="#6b1a24"/>
<rect x="2796.7" y="347.0" width="1.8" height="18.5" fill="#fa2a50"/>
<rect x="2822.0" y="269.8" width="101.0" height="101.0" fill="url(#gMod)" rx="10"/>
<text x="2872.5" y="290.2" font-size="15.5" fill="#fa2a50" text-anchor="middle" textLength="47.0" lengthAdjust="spacingAndGlyphs" stroke="#fa2a50" stroke-width="0.14">Ø Sine</text>
<circle cx="2837.8" cy="320.9" r="4.0" fill="none" stroke="#c873f7" stroke-width="2.5"/>
<circle cx="2908.7" cy="320.9" r="4.0" fill="none" stroke="#fa2a50" stroke-width="2.5"/>
<text x="2872.9" y="423.6" font-size="24" fill="#e2e2e2" text-anchor="middle" textLength="72.0" lengthAdjust="spacingAndGlyphs" stroke="#e2e2e2" stroke-width="0.22">Ø Sine</text>
<path d="M2854.5,320.5C2860,303.5 2868,303.5 2873,320.5S2886,337.5 2891.5,320.5" fill="none" stroke="#fa2a50" stroke-width="2.2"/>
<rect x="2955.7" y="269.8" width="101.0" height="101.0" fill="url(#gMod)" rx="10"/>
<text x="3006.2" y="290.2" font-size="15.5" fill="#fa2a50" text-anchor="middle" textLength="74.0" lengthAdjust="spacingAndGlyphs" stroke="#fa2a50" stroke-width="0.14">Ø Triangle</text>
<circle cx="2971.5" cy="320.9" r="4.0" fill="none" stroke="#c873f7" stroke-width="2.5"/>
<circle cx="3042.4" cy="320.9" r="4.0" fill="none" stroke="#fa2a50" stroke-width="2.5"/>
<text x="3006.6" y="423.6" font-size="24" fill="#e2e2e2" text-anchor="middle" textLength="113.0" lengthAdjust="spacingAndGlyphs" stroke="#e2e2e2" stroke-width="0.22">Ø Triangle</text>
<path d="M2988.2,320.5L2997.2,308L3015.7,333L3025.2,320.5" fill="none" stroke="#fa2a50" stroke-width="2.2"/>
<rect x="3107.9" y="269.8" width="101.0" height="101.0" fill="url(#gMod)" rx="10"/>
<text x="3158.4" y="290.2" font-size="15.5" fill="#fa2a50" text-anchor="middle" textLength="77.0" lengthAdjust="spacingAndGlyphs" stroke="#fa2a50" stroke-width="0.14">Ø Window</text>
<circle cx="3123.7" cy="320.9" r="4.0" fill="none" stroke="#c873f7" stroke-width="2.5"/>
<circle cx="3194.6" cy="320.9" r="4.0" fill="none" stroke="#fa2a50" stroke-width="2.5"/>
<text x="3158.4" y="423.6" font-size="24" fill="#e2e2e2" text-anchor="middle" textLength="118.0" lengthAdjust="spacingAndGlyphs" stroke="#e2e2e2" stroke-width="0.22">Ø Window</text>
<path d="M3134.9,320.8Q3158.9,295 3182.9,320.8" fill="none" stroke="#fa2a50" stroke-width="2.2"/>
<g clip-path="url(#clipArr)">
<rect x="3299.2" y="270.1" width="170.0" height="100.8" fill="url(#gMod)" rx="10"/>
<line x1="3314.7" y1="314.5" x2="3314.7" y2="351.5" stroke="#9a2035" stroke-width="2" />
<circle cx="3314.7" cy="285.9" r="4.1" fill="none" stroke="#c873f7" stroke-width="2.6"/>
<text x="3328.8" y="291.5" font-size="16" fill="#c873f7" text-anchor="start" textLength="82.0" lengthAdjust="spacingAndGlyphs" font-weight="bold">Read Phase</text>
<circle cx="3314.7" cy="309.5" r="3.9" fill="none" stroke="#6f5588" stroke-width="2.2"/>
<text x="3328.8" y="315.2" font-size="16" fill="#6f5588" text-anchor="start" textLength="86.0" lengthAdjust="spacingAndGlyphs" stroke="#6f5588" stroke-width="0.14">Write Phase</text>
<circle cx="3314.7" cy="333.0" r="4.1" fill="none" stroke="#fa2a50" stroke-width="2.6"/>
<text x="3328.8" y="339.0" font-size="16" fill="#fa2a50" text-anchor="start" textLength="37.0" lengthAdjust="spacingAndGlyphs" stroke="#fa2a50" stroke-width="0.14">Input</text>
<circle cx="3314.7" cy="356.5" r="3.9" fill="none" stroke="#a09040" stroke-width="2.2"/>
<path d="M3332,364V349.5M3329,353.5L3332,348.5L3335,353.5" fill="none" stroke="#c0aa40" stroke-width="1.6"/>
<path d="M3409.5,325.5L3423.5,333L3409.5,340.5Z" fill="#ffffff"/>
</g>
<text x="3432.2" y="423.6" font-size="24" fill="#e2e2e2" text-anchor="end" textLength="58.5" lengthAdjust="spacingAndGlyphs" stroke="#e2e2e2" stroke-width="0.22">Array</text>
<g clip-path="url(#clipCanvas)">
<line x1="69.0" y1="443.8" x2="69.0" y2="1373.7" stroke="#1c1c1c" stroke-width="2.4" />
<line x1="213.0" y1="443.8" x2="213.0" y2="1373.7" stroke="#1c1c1c" stroke-width="2.4" />
<line x1="357.0" y1="443.8" x2="357.0" y2="1373.7" stroke="#1c1c1c" stroke-width="2.4" />
<line x1="501.0" y1="443.8" x2="501.0" y2="1373.7" stroke="#1c1c1c" stroke-width="2.4" />
<line x1="645.0" y1="443.8" x2="645.0" y2="1373.7" stroke="#1c1c1c" stroke-width="2.4" />
<line x1="789.0" y1="443.8" x2="789.0" y2="1373.7" stroke="#1c1c1c" stroke-width="2.4" />
<line x1="933.0" y1="443.8" x2="933.0" y2="1373.7" stroke="#1c1c1c" stroke-width="2.4" />
<line x1="1077.0" y1="443.8" x2="1077.0" y2="1373.7" stroke="#1c1c1c" stroke-width="2.4" />
<line x1="1221.0" y1="443.8" x2="1221.0" y2="1373.7" stroke="#1c1c1c" stroke-width="2.4" />
<line x1="1365.0" y1="443.8" x2="1365.0" y2="1373.7" stroke="#1c1c1c" stroke-width="2.4" />
<line x1="1509.0" y1="443.8" x2="1509.0" y2="1373.7" stroke="#1c1c1c" stroke-width="2.4" />
<line x1="1653.0" y1="443.8" x2="1653.0" y2="1373.7" stroke="#1c1c1c" stroke-width="2.4" />
<line x1="1797.0" y1="443.8" x2="1797.0" y2="1373.7" stroke="#1c1c1c" stroke-width="2.4" />
<line x1="1941.0" y1="443.8" x2="1941.0" y2="1373.7" stroke="#1c1c1c" stroke-width="2.4" />
<line x1="2085.0" y1="443.8" x2="2085.0" y2="1373.7" stroke="#1c1c1c" stroke-width="2.4" />
<line x1="2229.0" y1="443.8" x2="2229.0" y2="1373.7" stroke="#1c1c1c" stroke-width="2.4" />
<line x1="2373.0" y1="443.8" x2="2373.0" y2="1373.7" stroke="#1c1c1c" stroke-width="2.4" />
<line x1="2517.0" y1="443.8" x2="2517.0" y2="1373.7" stroke="#1c1c1c" stroke-width="2.4" />
<line x1="2661.0" y1="443.8" x2="2661.0" y2="1373.7" stroke="#1c1c1c" stroke-width="2.4" />
<line x1="2805.0" y1="443.8" x2="2805.0" y2="1373.7" stroke="#1c1c1c" stroke-width="2.4" />
<line x1="2949.0" y1="443.8" x2="2949.0" y2="1373.7" stroke="#1c1c1c" stroke-width="2.4" />
<line x1="3093.0" y1="443.8" x2="3093.0" y2="1373.7" stroke="#1c1c1c" stroke-width="2.4" />
<line x1="3237.0" y1="443.8" x2="3237.0" y2="1373.7" stroke="#1c1c1c" stroke-width="2.4" />
<line x1="3381.0" y1="443.8" x2="3381.0" y2="1373.7" stroke="#1c1c1c" stroke-width="2.4" />
<line x1="3525.0" y1="443.8" x2="3525.0" y2="1373.7" stroke="#1c1c1c" stroke-width="2.4" />
<line x1="14.2" y1="491.8" x2="3441.9" y2="491.8" stroke="#1c1c1c" stroke-width="2.4" />
<line x1="14.2" y1="635.8" x2="3441.9" y2="635.8" stroke="#1c1c1c" stroke-width="2.4" />
<line x1="14.2" y1="779.8" x2="3441.9" y2="779.8" stroke="#1c1c1c" stroke-width="2.4" />
<line x1="14.2" y1="923.8" x2="3441.9" y2="923.8" stroke="#1c1c1c" stroke-width="2.4" />
<line x1="14.2" y1="1067.8" x2="3441.9" y2="1067.8" stroke="#1c1c1c" stroke-width="2.4" />
<line x1="14.2" y1="1211.8" x2="3441.9" y2="1211.8" stroke="#1c1c1c" stroke-width="2.4" />
<line x1="14.2" y1="1355.8" x2="3441.9" y2="1355.8" stroke="#1c1c1c" stroke-width="2.4" />
<rect x="1368.6" y="351.3" width="280.6" height="280.7" fill="url(#gMod)" rx="13"/>
<line x1="1420.2" y1="444.2" x2="1598.0" y2="444.2" stroke="#484848" stroke-width="1.2" />
<line x1="1420.2" y1="468.6" x2="1598.0" y2="468.6" stroke="#484848" stroke-width="1.2" />
<line x1="1420.2" y1="493.5" x2="1598.0" y2="493.5" stroke="#484848" stroke-width="1.2" />
<line x1="1420.2" y1="493.5" x2="1449.8" y2="444.2" stroke="#22c997" stroke-width="2.2" />
<line x1="1538.7" y1="444.2" x2="1559.4" y2="493.5" stroke="#22c997" stroke-width="2.2" />
<circle cx="1559.4" cy="493.5" r="6.0" fill="#22c997"/>
<circle cx="1434.1" cy="468.0" r="4.0" fill="#ffffff"/>
<circle cx="1427.9" cy="476.9" r="4.0" fill="#ffffff"/>
<circle cx="1513.9" cy="459.9" r="4.0" fill="#ffffff"/>
<circle cx="1528.0" cy="468.0" r="4.0" fill="#ffffff"/>
<circle cx="1389.6" cy="564.4" r="5.7" fill="none" stroke="#ffdd40" stroke-width="3.2"/>
<circle cx="1629.6" cy="564.4" r="5.7" fill="#2c3540" stroke="#5aaaf2" stroke-width="3.2"/>
<path d="M1438.83,589.31A33.80,33.80 0 1 1 1483.17,589.31" fill="none" stroke="#4a4a4a" stroke-width="4.2"/>
<path d="M1438.38,588.92A33.80,33.80 0 1 1 1484.48,588.11" fill="none" stroke="#22c997" stroke-width="4.2"/>
<circle cx="1461.0" cy="563.8" r="26.2" fill="#232323"/>
<circle cx="1461.0" cy="563.8" r="24.0" fill="url(#gLight)"/>
<line x1="1466.0" y1="568.0" x2="1478.9" y2="578.8" stroke="#0a0a0a" stroke-width="5" />
<path d="M1534.83,589.31A33.80,33.80 0 1 1 1579.17,589.31" fill="none" stroke="#4a4a4a" stroke-width="4.2"/>
<path d="M1534.38,588.92A33.80,33.80 0 0 1 1566.88,531.48" fill="none" stroke="#22c997" stroke-width="4.2"/>
<circle cx="1557.0" cy="563.8" r="26.2" fill="#232323"/>
<circle cx="1557.0" cy="563.8" r="24.0" fill="url(#gLight)"/>
<line x1="1558.9" y1="557.6" x2="1563.8" y2="541.4" stroke="#0a0a0a" stroke-width="5" />
<path d="M1380.0,603.5L1386.5,608.0L1380.0,612.5Z" fill="#ffdd40"/>
<path d="M1387.0,619.0H1393.5V598.0H1404.0V619.0H1409.0" fill="none" stroke="#ffdd40" stroke-width="2.2"/>
<text x="1461.3" y="616.8" font-size="22" fill="#dedede" text-anchor="middle" stroke="#dedede" stroke-width="0.22">A</text>
<text x="1557.3" y="616.8" font-size="22" fill="#dedede" text-anchor="middle" stroke="#dedede" stroke-width="0.22">R</text>
<rect x="792.6" y="639.3" width="424.6" height="280.7" fill="url(#gMod)" rx="11" stroke="#8e8e8e" stroke-width="2.2"/>
<text x="1004.6" y="667.2" font-size="22" fill="#ff8a1a" text-anchor="middle" textLength="41.0" lengthAdjust="spacingAndGlyphs" stroke="#ff8a1a" stroke-width="0.22">Sine</text>
<circle cx="813.5" cy="708.3" r="5.7" fill="none" stroke="#ffdd40" stroke-width="3.2"/>
<circle cx="813.5" cy="780.6" r="5.7" fill="none" stroke="#c873f7" stroke-width="3.2"/>
<circle cx="813.5" cy="852.8" r="5.7" fill="none" stroke="#ff8a1a" stroke-width="3.2"/>
<path d="M848.0,703.6L854.6,708.5L848.0,713.4Z" fill="#8e8e8e"/>
<line x1="861.0" y1="719.0" x2="861.0" y2="704.3" stroke="#8e8e8e" stroke-width="2" />
<path d="M856.2,705.3L861.0,696.3L865.8,705.3Z" fill="#8e8e8e"/>
<circle cx="1197.0" cy="708.3" r="7.6" fill="#ff8a1a"/>
<path d="M843.54,800.22A26.00,26.00 0 1 1 877.66,800.22" fill="none" stroke="#454545" stroke-width="3.9"/>
<circle cx="860.6" cy="780.6" r="19.3" fill="#292929"/>
<circle cx="860.6" cy="780.6" r="17.1" fill="url(#gDarkS)"/>
<line x1="855.2" y1="786.0" x2="848.8" y2="792.4" stroke="#929292" stroke-width="5" />
<path d="M843.54,872.42A26.00,26.00 0 1 1 877.66,872.42" fill="none" stroke="#454545" stroke-width="3.9"/>
<circle cx="860.6" cy="852.8" r="19.3" fill="#292929"/>
<circle cx="860.6" cy="852.8" r="17.1" fill="url(#gDarkS)"/>
<line x1="860.6" y1="845.1" x2="860.6" y2="836.1" stroke="#b8b8b8" stroke-width="5" />
<path d="M858.79,826.86A26.00,26.00 0 0 1 862.41,826.86" fill="none" stroke="#8a5a2a" stroke-width="3.9"/>
<path d="M929.18,812.15A41.80,41.80 0 1 1 984.02,812.15" fill="none" stroke="#4a4a4a" stroke-width="4.2"/>
<circle cx="956.6" cy="780.6" r="33.2" fill="#232323"/>
<circle cx="956.6" cy="780.6" r="31.0" fill="url(#gLight)"/>
<line x1="956.6" y1="772.2" x2="956.6" y2="750.4" stroke="#0a0a0a" stroke-width="5" />
<path d="M953.98,738.88A41.80,41.80 0 0 1 959.22,738.88" fill="none" stroke="#ff8a1a" stroke-width="4.2"/>
<line x1="1019.7" y1="754.5" x2="1019.7" y2="806.6" stroke="#4a4a4a" stroke-width="0.8" />
<line x1="1028.1" y1="754.5" x2="1028.1" y2="806.6" stroke="#3e3e3e" stroke-width="0.8" />
<line x1="1036.5" y1="754.5" x2="1036.5" y2="806.6" stroke="#3e3e3e" stroke-width="0.8" />
<line x1="1044.9" y1="754.5" x2="1044.9" y2="806.6" stroke="#3e3e3e" stroke-width="0.8" />
<line x1="1053.3" y1="754.5" x2="1053.3" y2="806.6" stroke="#3e3e3e" stroke-width="0.8" />
<line x1="1061.7" y1="754.5" x2="1061.7" y2="806.6" stroke="#3e3e3e" stroke-width="0.8" />
<line x1="1070.1" y1="754.5" x2="1070.1" y2="806.6" stroke="#3e3e3e" stroke-width="0.8" />
<line x1="1078.5" y1="754.5" x2="1078.5" y2="806.6" stroke="#3e3e3e" stroke-width="0.8" />
<line x1="1086.9" y1="754.5" x2="1086.9" y2="806.6" stroke="#4a4a4a" stroke-width="0.8" />
<line x1="1019.7" y1="754.5" x2="1086.9" y2="754.5" stroke="#4a4a4a" stroke-width="0.8" />
<line x1="1019.7" y1="763.2" x2="1086.9" y2="763.2" stroke="#3e3e3e" stroke-width="0.8" />
<line x1="1019.7" y1="771.9" x2="1086.9" y2="771.9" stroke="#3e3e3e" stroke-width="0.8" />
<line x1="1019.7" y1="780.5" x2="1086.9" y2="780.5" stroke="#3e3e3e" stroke-width="0.8" />
<line x1="1019.7" y1="789.2" x2="1086.9" y2="789.2" stroke="#3e3e3e" stroke-width="0.8" />
<line x1="1019.7" y1="797.9" x2="1086.9" y2="797.9" stroke="#3e3e3e" stroke-width="0.8" />
<line x1="1019.7" y1="806.6" x2="1086.9" y2="806.6" stroke="#4a4a4a" stroke-width="0.8" />
<path d="M1019.7,806.6L1020.8,806.4L1021.9,806.0L1023.1,805.2L1024.2,804.2L1025.3,802.9L1026.4,801.3L1027.5,799.5L1028.7,797.5L1029.8,795.2L1030.9,792.8L1032.0,790.2L1033.1,787.5L1034.3,784.7L1035.4,781.9L1036.5,779.0L1037.6,776.1L1038.7,773.2L1039.9,770.5L1041.0,767.8L1042.1,765.2L1043.2,762.8L1044.3,760.5L1045.5,758.5L1046.6,756.6L1047.7,755.1L1048.8,755.2L1049.9,756.3L1051.1,757.0L1052.2,757.5L1053.3,757.6L1054.4,757.5L1055.5,757.0L1056.7,756.3L1057.8,755.2L1058.9,755.1L1060.0,756.6L1061.1,758.5L1062.3,760.5L1063.4,762.8L1064.5,765.2L1065.6,767.8L1066.7,770.5L1067.9,773.2L1069.0,776.1L1070.1,779.0L1071.2,781.9L1072.3,784.7L1073.5,787.5L1074.6,790.2L1075.7,792.8L1076.8,795.2L1077.9,797.5L1079.1,799.5L1080.2,801.3L1081.3,802.9L1082.4,804.2L1083.5,805.2L1084.7,806.0L1085.8,806.4L1086.9,806.6" fill="none" stroke="#ff8a1a" stroke-width="2.4" stroke-linejoin="round" stroke-linecap="round"/>
<path d="M1019.7,806.6L1020.8,806.4L1021.9,806.0L1023.1,805.2L1024.2,804.2L1025.3,802.9L1026.4,801.3L1027.5,799.5L1028.7,797.5L1029.8,795.2L1030.9,792.8L1032.0,790.2L1033.1,787.5L1034.3,784.7L1035.4,781.9L1036.5,779.0L1037.6,776.1L1038.7,773.2L1039.9,770.5L1041.0,767.8L1042.1,765.2L1043.2,762.8L1044.3,760.5L1045.5,758.5L1046.6,756.6L1047.7,755.1L1048.8,755.2L1049.9,756.3L1051.1,757.0L1052.2,757.5L1053.3,757.6L1054.4,757.5L1055.5,757.0L1056.7,756.3L1057.8,755.2L1058.9,755.1L1060.0,756.6L1061.1,758.5L1062.3,760.5L1063.4,762.8L1064.5,765.2L1065.6,767.8L1066.7,770.5L1067.9,773.2L1069.0,776.1L1070.1,779.0L1071.2,781.9L1072.3,784.7L1073.5,787.5L1074.6,790.2L1075.7,792.8L1076.8,795.2L1077.9,797.5L1079.1,799.5L1080.2,801.3L1081.3,802.9L1082.4,804.2L1083.5,805.2L1084.7,806.0L1085.8,806.4L1086.9,806.6" fill="none" stroke="#2bd5e8" stroke-width="2.4" stroke-linejoin="round" stroke-linecap="round"/>
<path d="M1121.18,812.15A41.80,41.80 0 1 1 1176.02,812.15" fill="none" stroke="#4a4a4a" stroke-width="4.2"/>
<path d="M1120.63,811.66A41.80,41.80 0 0 1 1115.66,806.33" fill="none" stroke="#ff8a1a" stroke-width="4.2"/>
<path d="M1115.66,806.33A41.80,41.80 0 0 1 1112.40,801.50" fill="none" stroke="#2bd5e8" stroke-width="4.2"/>
<circle cx="1148.6" cy="780.6" r="33.2" fill="#232323"/>
<circle cx="1148.6" cy="780.6" r="31.0" fill="url(#gLight)"/>
<line x1="1141.4" y1="784.8" x2="1122.4" y2="795.7" stroke="#0a0a0a" stroke-width="5" />
<text x="956.6" y="840.0" font-size="22" fill="#dedede" text-anchor="middle" textLength="51.5" lengthAdjust="spacingAndGlyphs" stroke="#dedede" stroke-width="0.22">Skew</text>
<text x="1150.0" y="840.0" font-size="22" fill="#dedede" text-anchor="middle" textLength="41.5" lengthAdjust="spacingAndGlyphs" stroke="#dedede" stroke-width="0.22">Fold</text>
<path d="M839.1,892.1L846.1,887.4V896.8Z" fill="#ff8a1a"/>
<path d="M882.9,892.1L875.9,887.4V896.8Z" fill="#ff8a1a"/>
<path d="M849.7,880.6H854.6V891.7H856.2V902.6H849.7Z" fill="#ff8a1a"/>
<path d="M860.3,880.6H862.3V891.7H864.4V902.6H857.9V891.7H860.3Z" fill="#ff8a1a"/>
<path d="M867.3,880.6H872.2V902.6H866.0V891.7H867.3Z" fill="#ff8a1a"/>
<text x="940.6" y="901.7" font-size="22" fill="#ff8a1a" text-anchor="middle" textLength="35.0" lengthAdjust="spacingAndGlyphs" stroke="#ff8a1a" stroke-width="0.22">2:1</text>
<text x="1043.4" y="901.7" font-size="22" fill="#ff8a1a" text-anchor="end" textLength="42.0" lengthAdjust="spacingAndGlyphs" stroke="#ff8a1a" stroke-width="0.22">0.00</text>
<text x="1056.2" y="901.7" font-size="22" fill="#ff8a1a" text-anchor="start" textLength="17.0" lengthAdjust="spacingAndGlyphs" stroke="#ff8a1a" stroke-width="0.22">st</text>
<text x="1104.2" y="898.3" font-size="20" fill="#6e6e6e" text-anchor="middle" stroke="#6e6e6e" stroke-width="0.22">+</text>
<line x1="1098.0" y1="905.8" x2="1110.4" y2="905.8" stroke="#6e6e6e" stroke-width="1.6" />
<text x="1122.5" y="901.7" font-size="22" fill="#ff8a1a" text-anchor="start" textLength="75.0" lengthAdjust="spacingAndGlyphs" stroke="#ff8a1a" stroke-width="0.22">0.00 Hz</text>
<rect x="1368.6" y="783.3" width="136.6" height="136.7" fill="url(#gMod)" rx="13"/>
<circle cx="1389.5" cy="852.8" r="7.6" fill="#ff8a1a"/>
<circle cx="1389.5" cy="900.3" r="5.7" fill="#5a3a1a" stroke="#ff8a1a" stroke-width="3.2"/>
<circle cx="1485.5" cy="852.8" r="5.7" fill="#5a3a1a" stroke="#ff8a1a" stroke-width="3.2"/>
<path d="M1430.0,846.1999999999999L1443.1999999999998,859.4M1443.1999999999998,846.1999999999999L1430.0,859.4" fill="none" stroke="#ff8a1a" stroke-width="3.6"/>
<rect x="1656.6" y="639.3" width="424.6" height="280.7" fill="url(#gMod)" rx="13"/>
<text x="1868.6" y="667.2" font-size="22" fill="#ff8a1a" text-anchor="middle" textLength="41.0" lengthAdjust="spacingAndGlyphs" stroke="#ff8a1a" stroke-width="0.22">Sine</text>
<circle cx="1677.5" cy="708.3" r="5.7" fill="none" stroke="#ffdd40" stroke-width="3.2"/>
<circle cx="1677.5" cy="780.6" r="5.7" fill="none" stroke="#c873f7" stroke-width="3.2"/>
<circle cx="1677.5" cy="852.8" r="5.7" fill="none" stroke="#ff8a1a" stroke-width="3.2"/>
<path d="M1712.0,703.6L1718.6,708.5L1712.0,713.4Z" fill="#8e8e8e"/>
<line x1="1725.0" y1="719.0" x2="1725.0" y2="704.3" stroke="#8e8e8e" stroke-width="2" />
<path d="M1720.2,705.3L1725.0,696.3L1729.8,705.3Z" fill="#8e8e8e"/>
<circle cx="2061.0" cy="708.3" r="7.6" fill="#ff8a1a"/>
<path d="M1707.54,800.22A26.00,26.00 0 1 1 1741.66,800.22" fill="none" stroke="#454545" stroke-width="3.9"/>
<path d="M1707.20,799.92A26.00,26.00 0 0 1 1718.75,755.27" fill="none" stroke="#c873f7" stroke-width="3.9"/>
<circle cx="1724.6" cy="780.6" r="19.3" fill="#292929"/>
<circle cx="1724.6" cy="780.6" r="17.1" fill="url(#gDarkS)"/>
<line x1="1722.9" y1="773.1" x2="1720.8" y2="764.4" stroke="#f0f0f0" stroke-width="5" />
<path d="M1707.54,872.42A26.00,26.00 0 1 1 1741.66,872.42" fill="none" stroke="#454545" stroke-width="3.9"/>
<circle cx="1724.6" cy="852.8" r="19.3" fill="#292929"/>
<circle cx="1724.6" cy="852.8" r="17.1" fill="url(#gDarkS)"/>
<line x1="1724.6" y1="845.1" x2="1724.6" y2="836.1" stroke="#b8b8b8" stroke-width="5" />
<path d="M1722.79,826.86A26.00,26.00 0 0 1 1726.41,826.86" fill="none" stroke="#8a5a2a" stroke-width="3.9"/>
<path d="M1793.18,812.15A41.80,41.80 0 1 1 1848.02,812.15" fill="none" stroke="#4a4a4a" stroke-width="4.2"/>
<circle cx="1820.6" cy="780.6" r="33.2" fill="#232323"/>
<circle cx="1820.6" cy="780.6" r="31.0" fill="url(#gLight)"/>
<line x1="1820.6" y1="772.2" x2="1820.6" y2="750.4" stroke="#0a0a0a" stroke-width="5" />
<path d="M1817.98,738.88A41.80,41.80 0 0 1 1823.22,738.88" fill="none" stroke="#ff8a1a" stroke-width="4.2"/>
<line x1="1883.7" y1="754.5" x2="1883.7" y2="806.6" stroke="#4a4a4a" stroke-width="0.8" />
<line x1="1892.1" y1="754.5" x2="1892.1" y2="806.6" stroke="#3e3e3e" stroke-width="0.8" />
<line x1="1900.5" y1="754.5" x2="1900.5" y2="806.6" stroke="#3e3e3e" stroke-width="0.8" />
<line x1="1908.9" y1="754.5" x2="1908.9" y2="806.6" stroke="#3e3e3e" stroke-width="0.8" />
<line x1="1917.3" y1="754.5" x2="1917.3" y2="806.6" stroke="#3e3e3e" stroke-width="0.8" />
<line x1="1925.7" y1="754.5" x2="1925.7" y2="806.6" stroke="#3e3e3e" stroke-width="0.8" />
<line x1="1934.1" y1="754.5" x2="1934.1" y2="806.6" stroke="#3e3e3e" stroke-width="0.8" />
<line x1="1942.5" y1="754.5" x2="1942.5" y2="806.6" stroke="#3e3e3e" stroke-width="0.8" />
<line x1="1950.9" y1="754.5" x2="1950.9" y2="806.6" stroke="#4a4a4a" stroke-width="0.8" />
<line x1="1883.7" y1="754.5" x2="1950.9" y2="754.5" stroke="#4a4a4a" stroke-width="0.8" />
<line x1="1883.7" y1="763.2" x2="1950.9" y2="763.2" stroke="#3e3e3e" stroke-width="0.8" />
<line x1="1883.7" y1="771.9" x2="1950.9" y2="771.9" stroke="#3e3e3e" stroke-width="0.8" />
<line x1="1883.7" y1="780.5" x2="1950.9" y2="780.5" stroke="#3e3e3e" stroke-width="0.8" />
<line x1="1883.7" y1="789.2" x2="1950.9" y2="789.2" stroke="#3e3e3e" stroke-width="0.8" />
<line x1="1883.7" y1="797.9" x2="1950.9" y2="797.9" stroke="#3e3e3e" stroke-width="0.8" />
<line x1="1883.7" y1="806.6" x2="1950.9" y2="806.6" stroke="#4a4a4a" stroke-width="0.8" />
<path d="M1883.7,806.6L1884.8,806.4L1885.9,806.0L1887.1,805.2L1888.2,804.1L1889.3,802.7L1890.4,801.0L1891.5,799.1L1892.7,796.9L1893.8,794.6L1894.9,792.0L1896.0,789.3L1897.1,786.4L1898.3,783.5L1899.4,780.5L1900.5,777.4L1901.6,774.4L1902.7,771.4L1903.9,768.4L1905.0,765.6L1906.1,762.8L1907.2,760.3L1908.3,757.9L1909.5,755.7L1910.6,754.5L1911.7,754.5L1912.8,754.5L1913.9,754.5L1915.1,754.5L1916.2,754.5L1917.3,754.5L1918.4,754.5L1919.5,754.5L1920.7,754.5L1921.8,754.5L1922.9,754.5L1924.0,754.5L1925.1,755.7L1926.3,757.9L1927.4,760.3L1928.5,762.8L1929.6,765.6L1930.7,768.4L1931.9,771.4L1933.0,774.4L1934.1,777.4L1935.2,780.5L1936.3,783.5L1937.5,786.4L1938.6,789.3L1939.7,792.0L1940.8,794.6L1941.9,796.9L1943.1,799.1L1944.2,801.0L1945.3,802.7L1946.4,804.1L1947.5,805.2L1948.7,806.0L1949.8,806.4L1950.9,806.6" fill="none" stroke="#ff8a1a" stroke-width="2.4" stroke-linejoin="round" stroke-linecap="round"/>
<path d="M1883.7,806.6L1884.8,806.5L1885.9,806.0L1887.1,805.3L1888.2,804.3L1889.3,803.0L1890.4,801.4L1891.5,799.6L1892.7,797.6L1893.8,795.4L1894.9,793.1L1896.0,790.5L1897.1,787.9L1898.3,785.1L1899.4,782.3L1900.5,779.5L1901.6,776.7L1902.7,773.9L1903.9,771.1L1905.0,768.5L1906.1,766.0L1907.2,763.6L1908.3,761.4L1909.5,759.4L1910.6,757.6L1911.7,756.0L1912.8,754.8L1913.9,755.3L1915.1,756.0L1916.2,756.4L1917.3,756.6L1918.4,756.4L1919.5,756.0L1920.7,755.3L1921.8,754.8L1922.9,756.0L1924.0,757.6L1925.1,759.4L1926.3,761.4L1927.4,763.6L1928.5,766.0L1929.6,768.5L1930.7,771.1L1931.9,773.9L1933.0,776.7L1934.1,779.5L1935.2,782.3L1936.3,785.1L1937.5,787.9L1938.6,790.5L1939.7,793.1L1940.8,795.4L1941.9,797.6L1943.1,799.6L1944.2,801.4L1945.3,803.0L1946.4,804.3L1947.5,805.3L1948.7,806.0L1949.8,806.5L1950.9,806.6" fill="none" stroke="#2bd5e8" stroke-width="2.4" stroke-linejoin="round" stroke-linecap="round"/>
<path d="M1985.18,812.15A41.80,41.80 0 1 1 2040.02,812.15" fill="none" stroke="#4a4a4a" stroke-width="4.2"/>
<path d="M1984.63,811.66A41.80,41.80 0 0 1 1973.84,796.26" fill="none" stroke="#2bd5e8" stroke-width="4.2"/>
<circle cx="2012.6" cy="780.6" r="33.2" fill="#232323"/>
<circle cx="2012.6" cy="780.6" r="31.0" fill="url(#gLight)"/>
<line x1="2007.4" y1="787.2" x2="1994.0" y2="804.4" stroke="#0a0a0a" stroke-width="5" />
<text x="1820.6" y="840.0" font-size="22" fill="#dedede" text-anchor="middle" textLength="51.5" lengthAdjust="spacingAndGlyphs" stroke="#dedede" stroke-width="0.22">Skew</text>
<text x="2014.0" y="840.0" font-size="22" fill="#dedede" text-anchor="middle" textLength="41.5" lengthAdjust="spacingAndGlyphs" stroke="#dedede" stroke-width="0.22">Fold</text>
<path d="M1703.1,892.1L1710.1,887.4V896.8Z" fill="#ff8a1a"/>
<path d="M1746.9,892.1L1739.9,887.4V896.8Z" fill="#ff8a1a"/>
<path d="M1713.7,880.6H1718.6V891.7H1720.2V902.6H1713.7Z" fill="#ff8a1a"/>
<path d="M1724.3,880.6H1726.3V891.7H1728.4V902.6H1721.9V891.7H1724.3Z" fill="#ff8a1a"/>
<path d="M1731.3,880.6H1736.2V902.6H1730.0V891.7H1731.3Z" fill="#ff8a1a"/>
<text x="1804.6" y="901.7" font-size="22" fill="#ff8a1a" text-anchor="middle" textLength="35.0" lengthAdjust="spacingAndGlyphs" stroke="#ff8a1a" stroke-width="0.22">1:1</text>
<text x="1907.4" y="901.7" font-size="22" fill="#ff8a1a" text-anchor="end" textLength="42.0" lengthAdjust="spacingAndGlyphs" stroke="#ff8a1a" stroke-width="0.22">5.00</text>
<text x="1920.2" y="901.7" font-size="22" fill="#ff8a1a" text-anchor="start" textLength="17.0" lengthAdjust="spacingAndGlyphs" stroke="#ff8a1a" stroke-width="0.22">st</text>
<text x="1968.2" y="898.3" font-size="20" fill="#6e6e6e" text-anchor="middle" stroke="#6e6e6e" stroke-width="0.22">+</text>
<line x1="1962.0" y1="905.8" x2="1974.4" y2="905.8" stroke="#6e6e6e" stroke-width="1.6" />
<text x="1986.5" y="901.7" font-size="22" fill="#ff8a1a" text-anchor="start" textLength="75.0" lengthAdjust="spacingAndGlyphs" stroke="#ff8a1a" stroke-width="0.22">0.00 Hz</text>
<rect x="648.6" y="927.3" width="424.6" height="280.7" fill="url(#gMod)" rx="13"/>
<text x="860.6" y="955.0" font-size="22" fill="#e6e6e6" text-anchor="middle" textLength="86.0" lengthAdjust="spacingAndGlyphs" stroke="#e6e6e6" stroke-width="0.22">S/H LFO</text>
<circle cx="1031.3" cy="948.1" r="6.6" fill="#3df5a5"/>
<line x1="1031.3" y1="948.1" x2="1047.3" y2="948.1" stroke="#3df5a5" stroke-width="3.19" />
<path d="M1045.8,941.4L1056.7,948.1L1045.8,954.8Z" fill="#3df5a5"/>
<circle cx="669.5" cy="996.5" r="5.7" fill="none" stroke="#ffdd40" stroke-width="3.2"/>
<path d="M704.0,991.8L710.6,996.7L704.0,1001.6Z" fill="#8e8e8e"/>
<line x1="717.0" y1="1007.2" x2="717.0" y2="992.5" stroke="#8e8e8e" stroke-width="2" />
<path d="M712.2,993.5L717.0,984.5L721.8,993.5Z" fill="#8e8e8e"/>
<circle cx="669.5" cy="1068.7" r="5.7" fill="none" stroke="#c873f7" stroke-width="3.2"/>
<path d="M699.54,1088.32A26.00,26.00 0 1 1 733.66,1088.32" fill="none" stroke="#454545" stroke-width="3.9"/>
<circle cx="716.6" cy="1068.7" r="19.3" fill="#292929"/>
<circle cx="716.6" cy="1068.7" r="17.1" fill="url(#gDarkS)"/>
<line x1="711.2" y1="1074.1" x2="704.8" y2="1080.5" stroke="#929292" stroke-width="5" />
<circle cx="669.5" cy="1140.5" r="5.7" fill="none" stroke="#ff8a1a" stroke-width="3.2"/>
<path d="M699.54,1160.12A26.00,26.00 0 1 1 733.66,1160.12" fill="none" stroke="#454545" stroke-width="3.9"/>
<circle cx="716.6" cy="1140.5" r="19.3" fill="#292929"/>
<circle cx="716.6" cy="1140.5" r="17.1" fill="url(#gDarkS)"/>
<line x1="716.6" y1="1132.8" x2="716.6" y2="1123.8" stroke="#b8b8b8" stroke-width="5" />
<path d="M714.79,1114.56A26.00,26.00 0 0 1 718.41,1114.56" fill="none" stroke="#8a5a2a" stroke-width="3.9"/>
<path d="M784.6,1005.3H791.6V1016.8H800.1V1012.3H807.1V1019.3H815.6V1006.3H823.6V1014.3H832.1V1010.3H840.6" fill="none" stroke="#e8e8e8" stroke-width="2"/>
<path d="M878.63,1037.61A33.80,33.80 0 1 1 922.97,1037.61" fill="none" stroke="#4a4a4a" stroke-width="4.2"/>
<path d="M874.17,1032.91A33.80,33.80 0 0 1 900.80,978.30" fill="none" stroke="#ffffff" stroke-width="4.2"/>
<circle cx="900.8" cy="1012.1" r="26.2" fill="#232323"/>
<circle cx="900.8" cy="1012.1" r="24.0" fill="url(#gLight)"/>
<line x1="895.1" y1="1015.1" x2="880.1" y2="1023.1" stroke="#0a0a0a" stroke-width="5" />
<path d="M961,1005C965,1023 967,1023 971,1015S978,1003 982,1014S990,1023 994,1010S1002,1003 1006,1012S1011,1017 1016,1018" fill="none" stroke="#7e7e7e" stroke-width="2"/>
<circle cx="1053.0" cy="996.5" r="5.7" fill="none" stroke="#f0f0f0" stroke-width="3.2"/>
<path d="M784.6,1085.3H792.6V1099.3H800.1V1086.3H807.6V1099.3H815.6V1086.3H823.6V1099.3H830.6V1089.3H840.6" fill="none" stroke="#a0a0a0" stroke-width="2"/>
<path d="M878.63,1117.51A33.80,33.80 0 1 1 922.97,1117.51" fill="none" stroke="#4a4a4a" stroke-width="4.2"/>
<path d="M900.80,1058.20A33.80,33.80 0 0 1 932.14,1079.34" fill="none" stroke="#ffffff" stroke-width="4.2"/>
<circle cx="900.8" cy="1092.0" r="26.2" fill="#232323"/>
<circle cx="900.8" cy="1092.0" r="24.0" fill="url(#gLight)"/>
<line x1="906.8" y1="1089.6" x2="922.5" y2="1083.2" stroke="#0a0a0a" stroke-width="5" />
<path d="M961,1083H968V1087.5H977V1091.5H985V1095.5H990V1092H1001V1093.5H1016" fill="none" stroke="#e0e0e0" stroke-width="2"/>
<text x="900.8" y="1149.6" font-size="22" fill="#f0f0f0" text-anchor="middle" textLength="52.0" lengthAdjust="spacingAndGlyphs" stroke="#f0f0f0" stroke-width="0.22">N = 6</text>
<text x="766.8" y="1189.4" font-size="22" fill="#ff8a1a" text-anchor="middle" textLength="42.0" lengthAdjust="spacingAndGlyphs" stroke="#ff8a1a" stroke-width="0.22">1.00</text>
<line x1="815.5" y1="1171.5" x2="815.5" y2="1189.0" stroke="#ff8a1a" stroke-width="1.8" />
<circle cx="811.6" cy="1189.0" r="4.2" fill="none" stroke="#ff8a1a" stroke-width="1.8"/>
<circle cx="820.5" cy="1189.5" r="1.3" fill="#ff8a1a"/>
<path d="M832.2,1176.4H841.4L836.8,1181.5Z" fill="#a85a1a"/>
<text x="899.4" y="1189.4" font-size="22" fill="#c873f7" text-anchor="middle" textLength="27.5" lengthAdjust="spacingAndGlyphs" stroke="#c873f7" stroke-width="0.22">0 °</text>
<text x="960.0" y="1189.4" font-size="22" fill="#c873f7" text-anchor="middle" textLength="52.5" lengthAdjust="spacingAndGlyphs" stroke="#c873f7" stroke-width="0.22">+73 °</text>
<text x="1037.0" y="1184.5" font-size="22" fill="#ffffff" text-anchor="middle" stroke="#ffffff" stroke-width="0.22">+</text>
<line x1="1030.0" y1="1190.5" x2="1044.0" y2="1190.5" stroke="#ffffff" stroke-width="1.8" />
<rect x="1080.6" y="927.3" width="136.6" height="136.7" fill="url(#gMod)" rx="13"/>
<text x="1148.6" y="954.9" font-size="22" fill="#ff8a1a" text-anchor="middle" textLength="98.0" lengthAdjust="spacingAndGlyphs" stroke="#ff8a1a" stroke-width="0.22">Mod Amt₁</text>
<circle cx="1101.5" cy="996.5" r="5.7" fill="#5a3a1a" stroke="#ff8a1a" stroke-width="3.2"/>
<circle cx="1197.0" cy="996.5" r="5.7" fill="#5a3a1a" stroke="#ff8a1a" stroke-width="3.2"/>
<path d="M1131.28,1016.42A26.40,26.40 0 1 1 1165.92,1016.42" fill="none" stroke="#4a4a4a" stroke-width="3.8"/>
<path d="M1148.60,970.10A26.40,26.40 0 0 1 1168.22,978.83" fill="none" stroke="#ff8a1a" stroke-width="3.8"/>
<circle cx="1148.6" cy="996.5" r="19.4" fill="#232323"/>
<circle cx="1148.6" cy="996.5" r="17.2" fill="url(#gLight)"/>
<line x1="1152.1" y1="993.4" x2="1161.1" y2="985.3" stroke="#0a0a0a" stroke-width="4.4" />
<path d="M1095.6,1038.8999999999999L1107.4,1050.7M1107.4,1038.8999999999999L1095.6,1050.7" fill="none" stroke="#ff8a1a" stroke-width="3.4"/>
<text x="1165.3" y="1048.8" font-size="22" fill="#dedede" text-anchor="middle" textLength="74.5" lengthAdjust="spacingAndGlyphs" stroke="#dedede" stroke-width="0.22">+8.2 dB</text>
<rect x="1224.6" y="1071.3" width="280.6" height="280.7" fill="#1d1d1d" rx="11" stroke="#353535" stroke-width="2.2"/>
<text x="1364.8" y="1098.9" font-size="22" fill="#5aaaf2" text-anchor="middle" textLength="101.5" lengthAdjust="spacingAndGlyphs" stroke="#5aaaf2" stroke-width="0.22">Feedbacks</text>
<circle cx="1245.0" cy="1140.0" r="7.6" fill="#5aaaf2"/>
<circle cx="1485.5" cy="1140.0" r="7.6" fill="#5aaaf2"/>
<circle cx="1294.9" cy="1139.5" r="9.6" fill="none" stroke="#5aaaf2" stroke-width="2.2"/>
<path d="M1294.9,1139.5V1129.9A9.6,9.6 0 0 1 1303,1134.3Z" fill="#5aaaf2"/>
<rect x="1272.0" y="1157.3" width="45.7" height="3.6" fill="#5aaaf2"/>
<ellipse cx="1342.8999999999999" cy="1147.8" rx="4.2" ry="3.2" fill="#c8c8c8" transform="rotate(-20 1342.8999999999999 1147.8)"/>
<line x1="1346.5" y1="1147.2" x2="1346.5" y2="1131.5" stroke="#c8c8c8" stroke-width="1.8" />
<path d="M1346.5,1131.5C1347.6999999999998,1136 1352.6999999999998,1137.4 1351.3,1143" fill="none" stroke="#c8c8c8" stroke-width="1.7"/>
<path d="M1346.5,1135.8C1347.6999999999998,1139.6 1351.8999999999999,1140.4 1350.8999999999999,1144.4" fill="none" stroke="#c8c8c8" stroke-width="1.5"/>
<ellipse cx="1389.6" cy="1147.8" rx="4.2" ry="3.2" fill="#c8c8c8" transform="rotate(-20 1389.6 1147.8)"/>
<line x1="1393.2" y1="1147.2" x2="1393.2" y2="1131.5" stroke="#c8c8c8" stroke-width="1.8" />
<path d="M1393.2,1131.5C1394.3999999999999,1136 1399.3999999999999,1137.4 1398.0,1143" fill="none" stroke="#c8c8c8" stroke-width="1.7"/>
<ellipse cx="1434.3999999999999" cy="1147.8" rx="4.2" ry="3.2" fill="#c8c8c8" transform="rotate(-20 1434.3999999999999 1147.8)"/>
<line x1="1438.0" y1="1147.2" x2="1438.0" y2="1131.5" stroke="#c8c8c8" stroke-width="1.8" />
<path d="M1326.09,1288.33A59.00,59.00 0 1 1 1403.51,1288.33" fill="none" stroke="#4a4a4a" stroke-width="4.6"/>
<path d="M1325.32,1287.65A59.00,59.00 0 0 1 1307.31,1257.07" fill="none" stroke="#5aaaf2" stroke-width="4.6"/>
<circle cx="1364.8" cy="1243.8" r="48.6" fill="#232323"/>
<circle cx="1364.8" cy="1243.8" r="46.4" fill="url(#gLight)"/>
<line x1="1352.5" y1="1246.2" x2="1320.4" y2="1252.4" stroke="#0a0a0a" stroke-width="6" />
<text x="1364.8" y="1321.6" font-size="22" fill="#dedede" text-anchor="middle" textLength="76.0" lengthAdjust="spacingAndGlyphs" stroke="#dedede" stroke-width="0.22">24.8 ms</text>
<rect x="1512.6" y="1215.3" width="136.6" height="136.7" fill="url(#gMod)" rx="13"/>
<text x="1580.6" y="1242.9" font-size="22" fill="#5aaaf2" text-anchor="middle" textLength="98.0" lengthAdjust="spacingAndGlyphs" stroke="#5aaaf2" stroke-width="0.22">Mod Amt₂</text>
<circle cx="1533.0" cy="1284.5" r="7.6" fill="#5aaaf2"/>
<circle cx="1629.0" cy="1284.5" r="7.6" fill="#5aaaf2"/>
<path d="M1563.28,1304.42A26.40,26.40 0 1 1 1597.92,1304.42" fill="none" stroke="#4a4a4a" stroke-width="3.8"/>
<path d="M1580.60,1258.10A26.40,26.40 0 0 1 1598.27,1264.88" fill="none" stroke="#5aaaf2" stroke-width="3.8"/>
<circle cx="1580.6" cy="1284.5" r="19.4" fill="#232323"/>
<circle cx="1580.6" cy="1284.5" r="17.2" fill="url(#gLight)"/>
<line x1="1583.7" y1="1281.0" x2="1591.8" y2="1272.0" stroke="#0a0a0a" stroke-width="4.4" />
<path d="M1527.1,1326.3999999999999L1538.9,1338.2M1538.9,1326.3999999999999L1527.1,1338.2" fill="none" stroke="#5aaaf2" stroke-width="3.4"/>
<text x="1597.0" y="1335.9" font-size="22" fill="#dedede" text-anchor="middle" textLength="74.5" lengthAdjust="spacingAndGlyphs" stroke="#dedede" stroke-width="0.22">+7.3 dB</text>
<rect x="1656.6" y="1071.3" width="424.6" height="280.7" fill="url(#gMod)" rx="13"/>
<text x="1868.6" y="1099.2" font-size="22" fill="#5aaaf2" text-anchor="middle" textLength="41.0" lengthAdjust="spacingAndGlyphs" stroke="#5aaaf2" stroke-width="0.22">Sine</text>
<circle cx="1677.5" cy="1140.3" r="7.6" fill="#ffdd40"/>
<circle cx="1677.5" cy="1212.6" r="7.6" fill="#c873f7"/>
<circle cx="1677.5" cy="1284.8" r="7.6" fill="#ff8a1a"/>
<path d="M1712.0,1135.6L1718.6,1140.5L1712.0,1145.4Z" fill="#8e8e8e"/>
<line x1="1725.0" y1="1151.0" x2="1725.0" y2="1136.3" stroke="#8e8e8e" stroke-width="2" />
<path d="M1720.2,1137.3L1725.0,1128.3L1729.8,1137.3Z" fill="#8e8e8e"/>
<circle cx="2061.0" cy="1140.3" r="7.6" fill="#5aaaf2"/>
<path d="M1707.54,1232.22A26.00,26.00 0 1 1 1741.66,1232.22" fill="none" stroke="#454545" stroke-width="3.9"/>
<circle cx="1724.6" cy="1212.6" r="19.3" fill="#292929"/>
<circle cx="1724.6" cy="1212.6" r="17.1" fill="url(#gDarkS)"/>
<line x1="1719.0" y1="1217.8" x2="1712.4" y2="1224.0" stroke="#f0f0f0" stroke-width="5" />
<path d="M1707.54,1304.42A26.00,26.00 0 1 1 1741.66,1304.42" fill="none" stroke="#454545" stroke-width="3.9"/>
<path d="M1724.60,1258.80A26.00,26.00 0 0 1 1749.71,1278.07" fill="none" stroke="#ff8a1a" stroke-width="3.9"/>
<circle cx="1724.6" cy="1284.8" r="19.3" fill="#292929"/>
<circle cx="1724.6" cy="1284.8" r="17.1" fill="url(#gDarkS)"/>
<line x1="1732.0" y1="1282.8" x2="1740.7" y2="1280.5" stroke="#f0f0f0" stroke-width="5" />
<path d="M1793.18,1244.15A41.80,41.80 0 1 1 1848.02,1244.15" fill="none" stroke="#4a4a4a" stroke-width="4.2"/>
<circle cx="1820.6" cy="1212.6" r="33.2" fill="#232323"/>
<circle cx="1820.6" cy="1212.6" r="31.0" fill="url(#gLight)"/>
<line x1="1820.6" y1="1204.2" x2="1820.6" y2="1182.4" stroke="#0a0a0a" stroke-width="5" />
<path d="M1817.98,1170.88A41.80,41.80 0 0 1 1823.22,1170.88" fill="none" stroke="#5aaaf2" stroke-width="4.2"/>
<line x1="1883.7" y1="1186.5" x2="1883.7" y2="1238.6" stroke="#4a4a4a" stroke-width="0.8" />
<line x1="1892.1" y1="1186.5" x2="1892.1" y2="1238.6" stroke="#3e3e3e" stroke-width="0.8" />
<line x1="1900.5" y1="1186.5" x2="1900.5" y2="1238.6" stroke="#3e3e3e" stroke-width="0.8" />
<line x1="1908.9" y1="1186.5" x2="1908.9" y2="1238.6" stroke="#3e3e3e" stroke-width="0.8" />
<line x1="1917.3" y1="1186.5" x2="1917.3" y2="1238.6" stroke="#3e3e3e" stroke-width="0.8" />
<line x1="1925.7" y1="1186.5" x2="1925.7" y2="1238.6" stroke="#3e3e3e" stroke-width="0.8" />
<line x1="1934.1" y1="1186.5" x2="1934.1" y2="1238.6" stroke="#3e3e3e" stroke-width="0.8" />
<line x1="1942.5" y1="1186.5" x2="1942.5" y2="1238.6" stroke="#3e3e3e" stroke-width="0.8" />
<line x1="1950.9" y1="1186.5" x2="1950.9" y2="1238.6" stroke="#4a4a4a" stroke-width="0.8" />
<line x1="1883.7" y1="1186.5" x2="1950.9" y2="1186.5" stroke="#4a4a4a" stroke-width="0.8" />
<line x1="1883.7" y1="1195.2" x2="1950.9" y2="1195.2" stroke="#3e3e3e" stroke-width="0.8" />
<line x1="1883.7" y1="1203.9" x2="1950.9" y2="1203.9" stroke="#3e3e3e" stroke-width="0.8" />
<line x1="1883.7" y1="1212.5" x2="1950.9" y2="1212.5" stroke="#3e3e3e" stroke-width="0.8" />
<line x1="1883.7" y1="1221.2" x2="1950.9" y2="1221.2" stroke="#3e3e3e" stroke-width="0.8" />
<line x1="1883.7" y1="1229.9" x2="1950.9" y2="1229.9" stroke="#3e3e3e" stroke-width="0.8" />
<line x1="1883.7" y1="1238.6" x2="1950.9" y2="1238.6" stroke="#4a4a4a" stroke-width="0.8" />
<path d="M1883.7,1238.6L1884.8,1238.5L1885.9,1238.0L1887.1,1237.3L1888.2,1236.3L1889.3,1235.1L1890.4,1233.6L1891.5,1231.9L1892.7,1230.0L1893.8,1227.9L1894.9,1225.6L1896.0,1223.1L1897.1,1220.6L1898.3,1218.0L1899.4,1215.3L1900.5,1212.5L1901.6,1209.8L1902.7,1207.1L1903.9,1204.5L1905.0,1202.0L1906.1,1199.5L1907.2,1197.2L1908.3,1195.1L1909.5,1193.2L1910.6,1191.5L1911.7,1190.0L1912.8,1188.8L1913.9,1187.8L1915.1,1187.1L1916.2,1186.6L1917.3,1186.5L1918.4,1186.6L1919.5,1187.1L1920.7,1187.8L1921.8,1188.8L1922.9,1190.0L1924.0,1191.5L1925.1,1193.2L1926.3,1195.1L1927.4,1197.2L1928.5,1199.5L1929.6,1202.0L1930.7,1204.5L1931.9,1207.1L1933.0,1209.8L1934.1,1212.5L1935.2,1215.3L1936.3,1218.0L1937.5,1220.6L1938.6,1223.1L1939.7,1225.6L1940.8,1227.9L1941.9,1230.0L1943.1,1231.9L1944.2,1233.6L1945.3,1235.1L1946.4,1236.3L1947.5,1237.3L1948.7,1238.0L1949.8,1238.5L1950.9,1238.6" fill="none" stroke="#5aaaf2" stroke-width="2.4" stroke-linejoin="round" stroke-linecap="round"/>
<path d="M1985.18,1244.15A41.80,41.80 0 1 1 2040.02,1244.15" fill="none" stroke="#4a4a4a" stroke-width="4.2"/>
<circle cx="2012.6" cy="1212.6" r="33.2" fill="#232323"/>
<circle cx="2012.6" cy="1212.6" r="31.0" fill="url(#gLight)"/>
<line x1="2007.4" y1="1219.2" x2="1994.0" y2="1236.4" stroke="#0a0a0a" stroke-width="5" />
<text x="1820.6" y="1272.0" font-size="22" fill="#dedede" text-anchor="middle" textLength="51.5" lengthAdjust="spacingAndGlyphs" stroke="#dedede" stroke-width="0.22">Skew</text>
<text x="2014.0" y="1272.0" font-size="22" fill="#dedede" text-anchor="middle" textLength="41.5" lengthAdjust="spacingAndGlyphs" stroke="#dedede" stroke-width="0.22">Fold</text>
<path d="M1703.1,1324.1L1710.1,1319.4V1328.8Z" fill="#ff8a1a"/>
<path d="M1746.9,1324.1L1739.9,1319.4V1328.8Z" fill="#ff8a1a"/>
<path d="M1713.7,1312.6H1718.6V1323.7H1720.2V1334.6H1713.7Z" fill="#ff8a1a"/>
<path d="M1724.3,1312.6H1726.3V1323.7H1728.4V1334.6H1721.9V1323.7H1724.3Z" fill="#ff8a1a"/>
<path d="M1731.3,1312.6H1736.2V1334.6H1730.0V1323.7H1731.3Z" fill="#ff8a1a"/>
<text x="1804.6" y="1333.7" font-size="22" fill="#ff8a1a" text-anchor="middle" textLength="35.0" lengthAdjust="spacingAndGlyphs" stroke="#ff8a1a" stroke-width="0.22">2:1</text>
<text x="1907.4" y="1333.7" font-size="22" fill="#ff8a1a" text-anchor="end" textLength="50.5" lengthAdjust="spacingAndGlyphs" stroke="#ff8a1a" stroke-width="0.22">-0.31</text>
<text x="1920.2" y="1333.7" font-size="22" fill="#ff8a1a" text-anchor="start" textLength="17.0" lengthAdjust="spacingAndGlyphs" stroke="#ff8a1a" stroke-width="0.22">st</text>
<text x="1968.2" y="1330.3" font-size="20" fill="#6e6e6e" text-anchor="middle" stroke="#6e6e6e" stroke-width="0.22">+</text>
<line x1="1962.0" y1="1337.8" x2="1974.4" y2="1337.8" stroke="#6e6e6e" stroke-width="1.6" />
<text x="1986.5" y="1333.7" font-size="22" fill="#ff8a1a" text-anchor="start" textLength="75.0" lengthAdjust="spacingAndGlyphs" stroke="#ff8a1a" stroke-width="0.22">0.00 Hz</text>
<rect x="2232.6" y="495.3" width="136.6" height="136.7" fill="url(#gMod)" rx="13"/>
<text x="2300.6" y="523.3" font-size="22" fill="#ffdd40" text-anchor="middle" textLength="90" lengthAdjust="spacing">SPACE</text>
<rect x="2274.0" y="536.9" width="54.0" height="54.0" fill="#ffdd40" rx="4"/>
<text x="2301.3" y="616.9" font-size="22" fill="#e8e8e8" text-anchor="middle" textLength="131.0" lengthAdjust="spacingAndGlyphs" stroke="#e8e8e8" stroke-width="0.22">NO GRAVITY</text>
<circle cx="2349.5" cy="564.3" r="7.6" fill="#ffdd40"/>
<rect x="2376.6" y="495.3" width="136.6" height="136.7" fill="url(#gMod)" rx="13"/>
<text x="2445.5" y="523.3" font-size="22" fill="#ffdd40" text-anchor="middle" textLength="121.0" lengthAdjust="spacingAndGlyphs" stroke="#ffdd40" stroke-width="0.22">Acceleration</text>
<circle cx="2397.5" cy="564.3" r="7.6" fill="#ffdd40"/>
<circle cx="2493.5" cy="564.3" r="5.7" fill="#5a4a10" stroke="#ffdd40" stroke-width="3.2"/>
<path d="M2428.18,584.22A26.40,26.40 0 1 1 2462.82,584.22" fill="none" stroke="#4a4a4a" stroke-width="3.8"/>
<path d="M2427.83,583.92A26.40,26.40 0 1 1 2468.81,551.91" fill="none" stroke="#ffdd40" stroke-width="3.8"/>
<circle cx="2445.5" cy="564.3" r="19.4" fill="#232323"/>
<circle cx="2445.5" cy="564.3" r="17.2" fill="url(#gLight)"/>
<line x1="2449.8" y1="562.6" x2="2461.0" y2="558.0" stroke="#0a0a0a" stroke-width="4.4" />
<path d="M2389.5,621.5L2397.5,605H2405" fill="none" stroke="#ffdd40" stroke-width="3"/>
<text x="2469.7" y="616.9" font-size="22" fill="#dedede" text-anchor="middle" textLength="57.5" lengthAdjust="spacingAndGlyphs" stroke="#dedede" stroke-width="0.22">1.55 s</text>
<rect x="2520.6" y="495.3" width="136.6" height="136.7" fill="url(#gMod)" rx="13"/>
<circle cx="2541.5" cy="564.3" r="5.7" fill="#3a3418" stroke="#ffdd40" stroke-width="3.2"/>
<circle cx="2578.7" cy="564.3" r="6.6" fill="#3df5a5"/>
<line x1="2578.7" y1="564.3" x2="2594.6" y2="564.3" stroke="#3df5a5" stroke-width="3.19" />
<path d="M2593.2,557.6L2604.0,564.3L2593.2,571.0Z" fill="#3df5a5"/>
<rect x="2232.6" y="783.3" width="136.6" height="136.7" fill="url(#gMod)" rx="13"/>
<text x="2300.6" y="811.2" font-size="22" fill="#ff8a1a" text-anchor="middle" textLength="98.5" lengthAdjust="spacingAndGlyphs" stroke="#ff8a1a" stroke-width="0.22">Sharpness</text>
<circle cx="2253.5" cy="852.8" r="7.6" fill="#ff8a1a"/>
<circle cx="2349.5" cy="852.8" r="7.6" fill="#ff8a1a"/>
<circle cx="2253.5" cy="900.3" r="7.6" fill="#5aaaf2"/>
<path d="M2284.18,872.72A26.40,26.40 0 1 1 2318.82,872.72" fill="none" stroke="#4a4a4a" stroke-width="3.8"/>
<path d="M2283.83,872.42A26.40,26.40 0 0 1 2315.88,830.66" fill="none" stroke="#ff8a1a" stroke-width="3.8"/>
<circle cx="2301.5" cy="852.8" r="19.4" fill="#232323"/>
<circle cx="2301.5" cy="852.8" r="17.2" fill="url(#gLight)"/>
<line x1="2304.4" y1="849.1" x2="2311.8" y2="839.6" stroke="#0a0a0a" stroke-width="4.4" />
<rect x="2290.0" y="882.0" width="23.5" height="21.5" fill="none" stroke="#a4621e" stroke-width="2"/>
<line x1="2301.7" y1="882.0" x2="2301.7" y2="903.5" stroke="#a4621e" stroke-width="2" />
<line x1="2290.0" y1="892.7" x2="2313.5" y2="892.7" stroke="#a4621e" stroke-width="2" />
<rect x="2376.6" y="783.3" width="280.6" height="280.7" fill="url(#gMod)" rx="13"/>
<text x="2516.8" y="811.2" font-size="22" fill="#fa2a50" text-anchor="middle" textLength="56.0" lengthAdjust="spacingAndGlyphs" stroke="#fa2a50" stroke-width="0.22">Mixer</text>
<circle cx="2397.5" cy="852.8" r="7.6" fill="#ff8a1a"/>
<circle cx="2637.5" cy="852.8" r="5.7" fill="#a01830" stroke="#fa2a50" stroke-width="3.2"/>
<path d="M2434.73,878.31A33.80,33.80 0 1 1 2479.07,878.31" fill="none" stroke="#4a4a4a" stroke-width="4.2"/>
<path d="M2434.28,877.92A33.80,33.80 0 0 1 2471.18,822.17" fill="none" stroke="#ff8a1a" stroke-width="4.2"/>
<circle cx="2456.9" cy="852.8" r="26.2" fill="#232323"/>
<circle cx="2456.9" cy="852.8" r="24.0" fill="url(#gLight)"/>
<line x1="2459.9" y1="847.1" x2="2467.9" y2="832.1" stroke="#0a0a0a" stroke-width="5" />
<text x="2516.8" y="861.8" font-size="25" fill="#8e8e8e" text-anchor="middle" font-weight="bold">S</text>
<path d="M2554.93,878.31A33.80,33.80 0 1 1 2599.27,878.31" fill="none" stroke="#4a4a4a" stroke-width="4.2"/>
<path d="M2577.10,819.00A33.80,33.80 0 0 1 2589.76,821.46" fill="none" stroke="#ff8a1a" stroke-width="4.2"/>
<circle cx="2577.1" cy="852.8" r="26.2" fill="#232323"/>
<circle cx="2577.1" cy="852.8" r="24.0" fill="url(#gLight)"/>
<line x1="2579.5" y1="846.8" x2="2585.9" y2="831.1" stroke="#0a0a0a" stroke-width="5" />
<text x="2453.7" y="904.0" font-size="22" fill="#dedede" text-anchor="middle" textLength="70.0" lengthAdjust="spacingAndGlyphs" stroke="#dedede" stroke-width="0.22">-6.6 dB</text>
<path d="M2509.3,892.9H2513.8L2522.3,886.9V905.9L2513.8,899.9H2509.3Z" fill="#fa2a50"/>
<text x="2577.1" y="904.0" font-size="22" fill="#dedede" text-anchor="middle" textLength="66.0" lengthAdjust="spacingAndGlyphs" stroke="#dedede" stroke-width="0.22">18.0 %</text>
<circle cx="2397.5" cy="996.5" r="7.6" fill="#5aaaf2"/>
<path d="M2434.73,1022.01A33.80,33.80 0 1 1 2479.07,1022.01" fill="none" stroke="#4a4a4a" stroke-width="4.2"/>
<path d="M2434.28,1021.62A33.80,33.80 0 0 1 2441.03,966.66" fill="none" stroke="#5aaaf2" stroke-width="4.2"/>
<circle cx="2456.9" cy="996.5" r="26.2" fill="#232323"/>
<circle cx="2456.9" cy="996.5" r="24.0" fill="url(#gLight)"/>
<line x1="2453.9" y1="990.8" x2="2445.9" y2="975.8" stroke="#0a0a0a" stroke-width="5" />
<text x="2516.8" y="1005.5" font-size="25" fill="#8e8e8e" text-anchor="middle" font-weight="bold">S</text>
<path d="M2554.93,1022.01A33.80,33.80 0 1 1 2599.27,1022.01" fill="none" stroke="#4a4a4a" stroke-width="4.2"/>
<path d="M2551.98,973.88A33.80,33.80 0 0 1 2577.10,962.70" fill="none" stroke="#5aaaf2" stroke-width="4.2"/>
<circle cx="2577.1" cy="996.5" r="26.2" fill="#232323"/>
<circle cx="2577.1" cy="996.5" r="24.0" fill="url(#gLight)"/>
<line x1="2572.0" y1="992.5" x2="2558.7" y2="982.1" stroke="#0a0a0a" stroke-width="5" />
<circle cx="2397.5" cy="1044.7" r="5.1" fill="none" stroke="#8a2038" stroke-width="3"/>
<text x="2453.7" y="1048.6" font-size="22" fill="#dedede" text-anchor="middle" textLength="82.5" lengthAdjust="spacingAndGlyphs" stroke="#dedede" stroke-width="0.22">-18.2 dB</text>
<path d="M2509.3,1037.5H2513.8L2522.3,1031.5V1050.5L2513.8,1044.5H2509.3Z" fill="#fa2a50"/>
<text x="2577.1" y="1048.6" font-size="22" fill="#dedede" text-anchor="middle" textLength="73.0" lengthAdjust="spacingAndGlyphs" stroke="#dedede" stroke-width="0.22">-35.5 %</text>
<rect x="2664.6" y="783.3" width="136.6" height="136.7" fill="url(#gMod)" rx="13"/>
<text x="2732.9" y="810.2" font-size="22" fill="#fa2a50" text-anchor="middle" textLength="55.0" lengthAdjust="spacingAndGlyphs" stroke="#fa2a50" stroke-width="0.22">Blend</text>
<circle cx="2685.1" cy="852.6" r="5.7" fill="#a01830" stroke="#fa2a50" stroke-width="3.2"/>
<circle cx="2781.5" cy="852.6" r="5.7" fill="#a01830" stroke="#fa2a50" stroke-width="3.2"/>
<circle cx="2685.1" cy="900.3" r="7.6" fill="#4cbd13"/>
<path d="M2715.58,872.52A26.40,26.40 0 1 1 2750.22,872.52" fill="none" stroke="#4a4a4a" stroke-width="3.8"/>
<path d="M2715.23,872.22A26.40,26.40 0 0 1 2712.10,868.85" fill="none" stroke="#fa2a50" stroke-width="3.8"/>
<path d="M2712.10,868.85A26.40,26.40 0 0 1 2708.42,862.49" fill="none" stroke="#2bd5e8" stroke-width="3.8"/>
<circle cx="2732.9" cy="852.6" r="19.4" fill="#232323"/>
<circle cx="2732.9" cy="852.6" r="17.2" fill="url(#gLight)"/>
<line x1="2729.0" y1="855.1" x2="2718.7" y2="861.5" stroke="#0a0a0a" stroke-width="4.4" />
<text x="2733.7" y="903.8" font-size="22" fill="#dedede" text-anchor="middle" textLength="42.5" lengthAdjust="spacingAndGlyphs" stroke="#dedede" stroke-width="0.22">94:6</text>
<rect x="2808.6" y="783.3" width="424.6" height="280.7" fill="url(#gMod)" rx="13"/>
<rect x="2817.9" y="792.0" width="26.2" height="25.5" fill="#fa2a50" rx="4.5"/>
<text x="2831.0" y="812.0" font-size="19.5" fill="#1a1a1a" text-anchor="middle" font-weight="bold">R</text>
<text x="3020.9" y="810.2" font-size="22" fill="#fa2a50" text-anchor="middle" textLength="57.0" lengthAdjust="spacingAndGlyphs" stroke="#fa2a50" stroke-width="0.22">ADSR</text>
<circle cx="3185.8" cy="804.3" r="6.6" fill="#3df5a5"/>
<line x1="3185.8" y1="804.3" x2="3201.8" y2="804.3" stroke="#3df5a5" stroke-width="3.19" />
<path d="M3200.3,797.6L3211.2,804.3L3200.3,811.0Z" fill="#3df5a5"/>
<circle cx="2828.9" cy="852.6" r="5.7" fill="#a01830" stroke="#fa2a50" stroke-width="3.2"/>
<circle cx="3213.2" cy="852.6" r="5.7" fill="#a01830" stroke="#fa2a50" stroke-width="3.2"/>
<line x1="2859.6" y1="827.0" x2="3181.7" y2="827.0" stroke="#454545" stroke-width="1.2" />
<line x1="2859.6" y1="851.6" x2="3181.7" y2="851.6" stroke="#454545" stroke-width="1.2" />
<line x1="2859.6" y1="876.3" x2="3181.7" y2="876.3" stroke="#454545" stroke-width="1.2" />
<line x1="2859.6" y1="900.4" x2="3181.7" y2="900.4" stroke="#454545" stroke-width="1.2" />
<line x1="2859.6" y1="924.8" x2="3181.7" y2="924.8" stroke="#454545" stroke-width="1.2" />
<path d="M2860.4,924.8L2915.4,827C2930,858 2940,876 2951.4,885.8S2975,903 2987.5,904.7" fill="none" stroke="#fa2a50" stroke-width="2"/>
<line x1="2987.5" y1="904.7" x2="3074.7" y2="904.7" stroke="#fa2a50" stroke-width="2" stroke-dasharray="7.5,6.5"/>
<path d="M3074.7,904.7C3088,912 3096,919 3104.3,921S3124,924 3134.3,924.8" fill="none" stroke="#fa2a50" stroke-width="2"/>
<circle cx="2887.3" cy="871.7" r="5.6" fill="#fa2a50"/>
<circle cx="2915.4" cy="827.0" r="5.6" fill="#fa2a50"/>
<circle cx="2951.4" cy="885.8" r="5.6" fill="#fa2a50"/>
<circle cx="2987.5" cy="904.7" r="5.6" fill="#fa2a50"/>
<circle cx="3104.3" cy="921.0" r="5.6" fill="#fa2a50"/>
<circle cx="3134.3" cy="924.8" r="5.6" fill="#fa2a50"/>
<circle cx="2882.4" cy="880.8" r="4.0" fill="#ffffff"/>
<circle cx="2872.9" cy="899.0" r="4.0" fill="#ffffff"/>
<circle cx="3089.5" cy="889.9" r="4.0" fill="#ffffff"/>
<circle cx="3108.5" cy="912.7" r="4.0" fill="#ffffff"/>
<circle cx="2829.3" cy="996.4" r="5.7" fill="none" stroke="#ffdd40" stroke-width="3.2"/>
<circle cx="3213.2" cy="996.4" r="5.7" fill="none" stroke="#5aaaf2" stroke-width="3.2"/>
<circle cx="3213.2" cy="1044.2" r="5.7" fill="none" stroke="#c8dc20" stroke-width="3.2"/>
<path d="M2878.83,1021.91A33.80,33.80 0 1 1 2923.17,1021.91" fill="none" stroke="#4a4a4a" stroke-width="4.2"/>
<path d="M2878.38,1021.52A33.80,33.80 0 0 1 2903.95,962.73" fill="none" stroke="#fa2a50" stroke-width="4.2"/>
<circle cx="2901.0" cy="996.4" r="26.2" fill="#232323"/>
<circle cx="2901.0" cy="996.4" r="24.0" fill="url(#gLight)"/>
<line x1="2901.6" y1="989.9" x2="2903.0" y2="973.1" stroke="#0a0a0a" stroke-width="5" />
<path d="M2958.83,1021.91A33.80,33.80 0 1 1 3003.17,1021.91" fill="none" stroke="#4a4a4a" stroke-width="4.2"/>
<path d="M2958.38,1021.52A33.80,33.80 0 1 1 3006.89,974.67" fill="none" stroke="#fa2a50" stroke-width="4.2"/>
<circle cx="2981.0" cy="996.4" r="26.2" fill="#232323"/>
<circle cx="2981.0" cy="996.4" r="24.0" fill="url(#gLight)"/>
<line x1="2986.0" y1="992.2" x2="2998.9" y2="981.4" stroke="#0a0a0a" stroke-width="5" />
<path d="M3038.53,1021.91A33.80,33.80 0 1 1 3082.87,1021.91" fill="none" stroke="#4a4a4a" stroke-width="4.2"/>
<path d="M3038.08,1021.52A33.80,33.80 0 0 1 3027.09,992.87" fill="none" stroke="#fa2a50" stroke-width="4.2"/>
<circle cx="3060.7" cy="996.4" r="26.2" fill="#232323"/>
<circle cx="3060.7" cy="996.4" r="24.0" fill="url(#gLight)"/>
<line x1="3054.3" y1="995.5" x2="3037.5" y2="993.1" stroke="#0a0a0a" stroke-width="5" />
<path d="M3118.93,1021.91A33.80,33.80 0 1 1 3163.27,1021.91" fill="none" stroke="#4a4a4a" stroke-width="4.2"/>
<path d="M3118.48,1021.52A33.80,33.80 0 0 1 3149.85,963.75" fill="none" stroke="#fa2a50" stroke-width="4.2"/>
<circle cx="3141.1" cy="996.4" r="26.2" fill="#232323"/>
<circle cx="3141.1" cy="996.4" r="24.0" fill="url(#gLight)"/>
<line x1="3142.8" y1="990.1" x2="3147.2" y2="973.8" stroke="#0a0a0a" stroke-width="5" />
<path d="M2819.5,1036.0L2826.0,1040.5L2819.5,1045.0Z" fill="#ffdd40"/>
<path d="M2826.5,1051.5H2833.0V1030.5H2843.5V1051.5H2848.5" fill="none" stroke="#ffdd40" stroke-width="2.2"/>
<text x="2901.5" y="1048.9" font-size="22" fill="#dedede" text-anchor="middle" stroke="#dedede" stroke-width="0.22">A</text>
<text x="2981.5" y="1048.9" font-size="22" fill="#dedede" text-anchor="middle" stroke="#dedede" stroke-width="0.22">D</text>
<text x="3061.2" y="1048.9" font-size="22" fill="#dedede" text-anchor="middle" stroke="#dedede" stroke-width="0.22">S</text>
<text x="3141.6" y="1048.9" font-size="22" fill="#dedede" text-anchor="middle" stroke="#dedede" stroke-width="0.22">R</text>
<rect x="3240.6" y="783.3" width="136.6" height="136.7" fill="url(#gMod)" rx="13"/>
<text x="3309.2" y="810.2" font-size="22" fill="#ff8a1a" text-anchor="middle" textLength="96.0" lengthAdjust="spacingAndGlyphs" stroke="#ff8a1a" stroke-width="0.22">Gain - Vol</text>
<circle cx="3261.4" cy="852.6" r="5.7" fill="#5a3a1a" stroke="#ff8a1a" stroke-width="3.2"/>
<circle cx="3357.4" cy="852.6" r="5.7" fill="#5a3a1a" stroke="#ff8a1a" stroke-width="3.2"/>
<path d="M3291.88,872.52A26.40,26.40 0 1 1 3326.52,872.52" fill="none" stroke="#4a4a4a" stroke-width="3.8"/>
<path d="M3291.53,872.22A26.40,26.40 0 0 1 3316.92,827.35" fill="none" stroke="#ff8a1a" stroke-width="3.8"/>
<path d="M3316.92,827.35A26.40,26.40 0 0 1 3328.19,834.26" fill="none" stroke="#2bd5e8" stroke-width="3.8"/>
<circle cx="3309.2" cy="852.6" r="19.4" fill="#232323"/>
<circle cx="3309.2" cy="852.6" r="17.2" fill="url(#gLight)"/>
<line x1="3310.6" y1="848.2" x2="3314.1" y2="836.6" stroke="#0a0a0a" stroke-width="4.4" />
<path d="M3255.5,894.7L3267.3,906.5M3267.3,894.7L3255.5,906.5" fill="none" stroke="#ff8a1a" stroke-width="3.4"/>
<text x="3325.1" y="903.8" font-size="22" fill="#dedede" text-anchor="middle" textLength="74.5" lengthAdjust="spacingAndGlyphs" stroke="#dedede" stroke-width="0.22">+4.0 dB</text>
<rect x="3384.6" y="783.3" width="136.6" height="136.7" fill="#1d1d1d" rx="11" stroke="#353535" stroke-width="2.2"/>
<circle cx="3405.6" cy="852.6" r="5.7" fill="#a01830" stroke="#fa2a50" stroke-width="3.2"/>
<rect x="3426.0" y="792.8" width="20.0" height="8.3" fill="#3a3a3a"/>
<rect x="3426.0" y="801.1" width="20.0" height="35.3" fill="#ff7400"/>
<rect x="3426.0" y="836.4" width="20.0" height="10.3" fill="#ffd83a"/>
<rect x="3426.0" y="846.7" width="20.0" height="64.8" fill="url(#gMeter)"/>
<rect x="2808.6" y="495.3" width="424.6" height="280.7" fill="#1d1d1d" rx="11" stroke="#353535" stroke-width="2.2"/>
<rect x="2849.8" y="507.1" width="341.8" height="258.0" fill="#1f1f1f" stroke="#555555" stroke-width="1.2"/>
<line x1="2935.1" y1="507.1" x2="2935.1" y2="765.1" stroke="#383838" stroke-width="1.2" />
<line x1="3020.5" y1="507.1" x2="3020.5" y2="765.1" stroke="#383838" stroke-width="1.2" />
<line x1="3105.9" y1="507.1" x2="3105.9" y2="765.1" stroke="#383838" stroke-width="1.2" />
<line x1="2849.8" y1="539.4" x2="3191.6" y2="539.4" stroke="#303030" stroke-width="1.2" />
<line x1="2849.8" y1="571.6" x2="3191.6" y2="571.6" stroke="#303030" stroke-width="1.2" />
<line x1="2849.8" y1="603.9" x2="3191.6" y2="603.9" stroke="#303030" stroke-width="1.2" />
<line x1="2849.8" y1="636.1" x2="3191.6" y2="636.1" stroke="#303030" stroke-width="1.2" />
<line x1="2849.8" y1="668.4" x2="3191.6" y2="668.4" stroke="#303030" stroke-width="1.2" />
<line x1="2849.8" y1="700.6" x2="3191.6" y2="700.6" stroke="#303030" stroke-width="1.2" />
<line x1="2849.8" y1="732.9" x2="3191.6" y2="732.9" stroke="#303030" stroke-width="1.2" />
<circle cx="2829.3" cy="516.6" r="5.3" fill="none" stroke="#8a7a30" stroke-width="3"/>
<circle cx="2829.3" cy="564.4" r="5.7" fill="#8a4a10" stroke="#ff8a1a" stroke-width="3.2"/>
<circle cx="2825.0" cy="636.5" r="7.2" fill="none" stroke="#8a8a8a" stroke-width="2"/>
<circle cx="2833.8" cy="636.5" r="7.2" fill="none" stroke="#8a8a8a" stroke-width="2"/>
<circle cx="2829.3" cy="708.6" r="5.7" fill="none" stroke="#d8d8d8" stroke-width="3.2"/>
<circle cx="3213.2" cy="564.4" r="5.7" fill="#a01830" stroke="#fa2a50" stroke-width="3.2"/>
<circle cx="3213.2" cy="708.6" r="5.7" fill="none" stroke="#fa2a50" stroke-width="3.2"/>
<path d="M2850.29,617.14C2853.16,631.53 2854.98,655.43 2857.86,655.43C2862.20,655.43 2864.94,637.14 2869.29,637.14C2873.63,637.14 2876.37,644.29 2880.71,644.29C2886.96,644.29 2890.90,638.57 2897.14,633.57C2900.13,631.18 2902.01,617.53 2905.00,608.57C2906.90,602.87 2908.10,601.43 2910.00,601.43C2911.36,601.43 2912.21,610.36 2913.57,611.71C2915.20,613.34 2916.23,611.65 2917.86,612.14C2919.00,612.48 2919.72,610.88 2920.86,620.00C2920.69,618.70 2920.59,662.86 2920.43,662.86C2923.52,662.86 2925.48,577.14 2928.57,577.14C2930.47,577.14 2931.67,656.86 2933.57,656.86C2935.47,656.86 2936.67,589.29 2938.57,589.29C2940.09,589.29 2941.05,659.71 2942.57,659.71C2944.20,659.71 2945.23,587.14 2946.86,587.14C2948.32,587.14 2949.25,654.57 2950.71,654.57C2952.51,654.57 2953.64,591.14 2955.43,591.14C2957.06,591.14 2958.09,657.86 2959.71,657.86C2961.23,657.86 2962.19,588.29 2963.71,588.29C2965.56,588.29 2966.73,656.86 2968.57,656.86C2970.20,656.86 2971.23,591.14 2972.86,591.14C2974.65,591.14 2975.78,657.43 2977.57,657.43C2979.20,657.43 2980.23,588.29 2981.86,588.29C2983.76,588.29 2984.96,657.43 2986.86,657.43C2988.59,657.43 2989.69,585.43 2991.43,585.43C2993.06,585.43 2994.09,658.86 2995.71,658.86C2997.23,658.86 2998.19,585.43 2999.71,585.43C3001.34,585.43 3002.37,657.43 3004.00,657.43C3005.74,657.43 3006.83,588.57 3008.57,588.57C3010.20,588.57 3011.23,656.00 3012.86,656.00C3014.38,656.00 3015.34,601.43 3016.86,601.43C3018.59,601.43 3019.69,650.29 3021.43,650.29C3024.69,650.29 3026.74,617.86 3030.00,617.86C3034.07,617.86 3036.64,658.57 3040.71,658.57C3045.06,658.57 3047.80,635.29 3052.14,635.29C3056.49,635.29 3059.23,645.29 3063.57,645.29C3067.10,645.29 3069.33,642.86 3072.86,642.86C3076.93,642.86 3079.50,646.00 3083.57,646.00C3086.83,646.00 3088.89,639.57 3092.14,631.43C3094.48,625.59 3095.95,593.14 3098.29,593.14C3098.83,593.14 3099.17,655.43 3099.71,655.43C3102.65,655.43 3104.50,583.57 3107.43,583.57C3109.38,583.57 3110.62,659.71 3112.57,659.71C3114.20,659.71 3115.23,585.43 3116.86,585.43C3118.49,585.43 3119.51,657.43 3121.14,657.43C3122.88,657.43 3123.98,586.43 3125.71,586.43C3127.34,586.43 3128.37,657.43 3130.00,657.43C3131.52,657.43 3132.48,590.29 3134.00,590.29C3135.74,590.29 3136.83,657.86 3138.57,657.86C3140.31,657.86 3141.41,587.43 3143.14,587.43C3144.77,587.43 3145.80,656.86 3147.43,656.86C3149.38,656.86 3150.62,588.86 3152.57,588.86C3154.42,588.86 3155.58,657.43 3157.43,657.43C3159.22,657.43 3160.35,586.86 3162.14,586.86C3163.93,586.86 3165.07,657.86 3166.86,657.86C3168.70,657.86 3169.87,581.43 3171.71,581.43C3173.23,581.43 3174.19,657.43 3175.71,657.43C3177.61,657.43 3178.81,584.57 3180.71,584.57C3182.18,584.57 3183.11,658.86 3184.57,658.86C3186.09,658.86 3187.05,587.14 3188.57,587.14C3189.77,587.14 3190.52,629.95 3191.71,644.29" fill="none" stroke="#ff8a1a" stroke-width="1.5" stroke-linejoin="round"/>
<rect x="2520.6" y="1071.3" width="136.6" height="136.7" fill="url(#gMod)" rx="13"/>
<text x="2588.8" y="1098.2" font-size="22" fill="#4cbd13" text-anchor="middle" textLength="109.0" lengthAdjust="spacingAndGlyphs" stroke="#4cbd13" stroke-width="0.22">BeelzeXOR</text>
<circle cx="2541.4" cy="1124.6" r="7.6" fill="#ff8a1a"/>
<circle cx="2541.4" cy="1156.8" r="7.6" fill="#5aaaf2"/>
<circle cx="2637.3" cy="1140.5" r="7.6" fill="#ffdd40"/>
<path d="M2548,1124.6H2566M2548,1156.8H2566M2611,1140.5H2630" fill="none" stroke="#4cbd13" stroke-width="1.6"/>
<path d="M2566.5,1118C2580,1118 2602,1118.5 2615.5,1140.5C2602,1162.5 2580,1163 2566.5,1163C2573,1148 2573,1133 2566.5,1118Z" fill="none" stroke="#4cbd13" stroke-width="1.7"/>
<path d="M2559.5,1118C2566,1133 2566,1148 2559.5,1163" fill="none" stroke="#4cbd13" stroke-width="1.7"/>
<rect x="2664.6" y="1071.3" width="424.6" height="280.7" fill="url(#gMod)" rx="13"/>
<text x="2876.7" y="1098.2" font-size="22" fill="#4cbd13" text-anchor="middle" textLength="38.0" lengthAdjust="spacingAndGlyphs" stroke="#4cbd13" stroke-width="0.22">SVF</text>
<circle cx="2685.1" cy="1140.5" r="7.6" fill="#4cbd13"/>
<circle cx="2685.1" cy="1212.6" r="5.7" fill="none" stroke="#ff8a1a" stroke-width="3.2"/>
<circle cx="3069.0" cy="1140.5" r="7.6" fill="#4cbd13"/>
<path d="M2715.84,1160.12A26.00,26.00 0 1 1 2749.96,1160.12" fill="none" stroke="#454545" stroke-width="3.9"/>
<path d="M2715.50,1159.82A26.00,26.00 0 0 1 2727.49,1115.07" fill="none" stroke="#4cbd13" stroke-width="3.9"/>
<path d="M2727.49,1115.07A26.00,26.00 0 0 1 2736.52,1114.75" fill="none" stroke="#2bd5e8" stroke-width="3.9"/>
<circle cx="2732.9" cy="1140.5" r="19.3" fill="#292929"/>
<circle cx="2732.9" cy="1140.5" r="17.1" fill="url(#gDarkS)"/>
<line x1="2731.0" y1="1133.0" x2="2728.9" y2="1124.3" stroke="#f0f0f0" stroke-width="5" />
<path d="M2715.84,1232.22A26.00,26.00 0 1 1 2749.96,1232.22" fill="none" stroke="#454545" stroke-width="3.9"/>
<circle cx="2732.9" cy="1212.6" r="19.3" fill="#292929"/>
<circle cx="2732.9" cy="1212.6" r="17.1" fill="url(#gDarkS)"/>
<line x1="2732.9" y1="1204.9" x2="2732.9" y2="1195.9" stroke="#b8b8b8" stroke-width="5" />
<path d="M2731.09,1186.66A26.00,26.00 0 0 1 2734.71,1186.66" fill="none" stroke="#8a5a2a" stroke-width="3.9"/>
<path d="M2715.84,1303.52A26.00,26.00 0 1 1 2749.96,1303.52" fill="none" stroke="#454545" stroke-width="3.9"/>
<path d="M2715.50,1303.22A26.00,26.00 0 0 1 2732.90,1257.90" fill="none" stroke="#ff8a1a" stroke-width="3.9"/>
<circle cx="2732.9" cy="1283.9" r="19.3" fill="#292929"/>
<circle cx="2732.9" cy="1283.9" r="17.1" fill="url(#gDarkS)"/>
<line x1="2732.9" y1="1276.2" x2="2732.9" y2="1267.2" stroke="#f0f0f0" stroke-width="5" />
<path d="M2711.4,1324.4L2718.4,1319.7V1329.1Z" fill="#ff8a1a"/>
<path d="M2755.2,1324.4L2748.2,1319.7V1329.1Z" fill="#ff8a1a"/>
<path d="M2722.0,1312.9H2726.9V1324.0H2728.5V1334.9H2722.0Z" fill="#ff8a1a"/>
<path d="M2732.6,1312.9H2734.6V1324.0H2736.7V1334.9H2730.2V1324.0H2732.6Z" fill="#ff8a1a"/>
<path d="M2739.6,1312.9H2744.5V1334.9H2738.3V1324.0H2739.6Z" fill="#ff8a1a"/>
<path d="M2837.99,1256.33A59.00,59.00 0 1 1 2915.41,1256.33" fill="none" stroke="#4a4a4a" stroke-width="4.6"/>
<path d="M2837.22,1255.65A59.00,59.00 0 0 1 2911.38,1164.07" fill="none" stroke="#4cbd13" stroke-width="4.6"/>
<circle cx="2876.7" cy="1211.8" r="48.6" fill="#232323"/>
<circle cx="2876.7" cy="1211.8" r="46.4" fill="url(#gLight)"/>
<line x1="2884.1" y1="1201.7" x2="2903.3" y2="1175.2" stroke="#0a0a0a" stroke-width="6" />
<text x="2877.5" y="1287.9" font-size="22" fill="#dedede" text-anchor="middle" textLength="86.5" lengthAdjust="spacingAndGlyphs" stroke="#dedede" stroke-width="0.22">2.09 kHz</text>
<path d="M2985.48,1243.35A41.80,41.80 0 1 1 3040.32,1243.35" fill="none" stroke="#4a4a4a" stroke-width="4.2"/>
<path d="M2984.93,1242.86A41.80,41.80 0 0 1 2987.17,1178.86" fill="none" stroke="#4cbd13" stroke-width="4.2"/>
<path d="M2987.17,1178.86A41.80,41.80 0 0 1 3002.08,1171.42" fill="none" stroke="#5a8aa8" stroke-width="4.2"/>
<circle cx="3012.9" cy="1211.8" r="33.2" fill="#232323"/>
<circle cx="3012.9" cy="1211.8" r="31.0" fill="url(#gLight)"/>
<line x1="3010.7" y1="1203.7" x2="3005.1" y2="1182.6" stroke="#0a0a0a" stroke-width="5" />
<path d="M3005.9,1156.5H3019.9L3012.9,1165.5Z" fill="#8a8a8a"/>
<path d="M3001.5,1275C3011,1274.5 3009.5,1256.5 3012.9,1256.5S3014.8,1274.5 3024.3,1275Z" fill="url(#gPeak)"/>
<path d="M2808.5,1320.6H2816.5C2822,1320.6 2822,1332.6 2828.5,1333" fill="none" stroke="#d0d0d0" stroke-width="1.9"/>
<path d="M2848.5,1333C2853,1333 2853.5,1320.3 2857,1320.3S2861,1333 2865.5,1333" fill="none" stroke="#4cbd13" stroke-width="1.9"/>
<rect x="2837.6" y="1341.0" width="38.0" height="3.8" fill="#4cbd13"/>
<path d="M2885.5,1333C2891,1332.6 2891,1320.6 2897,1320.6H2905.5" fill="none" stroke="#d0d0d0" stroke-width="1.9"/>
<path d="M2922.5,1320.5H2926.5C2931,1320.5 2932,1333 2935.5,1333S2940,1320.5 2944.5,1320.5H2948.5" fill="none" stroke="#d0d0d0" stroke-width="1.9"/>
<path d="M1197.0,708.4C1297.0,708.4 1268.0,852.8 1368.0,852.8" fill="none" stroke="#ff8a1a" stroke-width="4.4" stroke-linecap="round"/>
<path d="M1381.0,852.8L1366.5,844.8V860.8Z" fill="#ff8a1a" transform="rotate(0 1389.5 852.8)"/>
<path d="M1485.5,852.8C1580.5,852.8 1561.0,780.6 1656.0,780.6" fill="none" stroke="#ff8a1a" stroke-width="4.4" opacity="0.42"/>
<path d="M1485.5,852.8C1580.5,852.8 1561.0,780.6 1656.0,780.6" pathLength="100" fill="none" stroke="#ff8a1a" stroke-width="4.4" opacity="0.32" stroke-dasharray="6.00 94.00"/>
<path d="M1485.5,852.8C1580.5,852.8 1561.0,780.6 1656.0,780.6" pathLength="100" fill="none" stroke="#ff8a1a" stroke-width="4.4" opacity="0.32" stroke-dasharray="0 70.00 30.00 0"/>
<path d="M1485.5,852.8C1580.5,852.8 1561.0,780.6 1656.0,780.6" pathLength="100" fill="none" stroke="#ff8a1a" stroke-width="4.4" opacity="0.32" stroke-dasharray="5.15 94.85"/>
<path d="M1485.5,852.8C1580.5,852.8 1561.0,780.6 1656.0,780.6" pathLength="100" fill="none" stroke="#ff8a1a" stroke-width="4.4" opacity="0.32" stroke-dasharray="0 74.25 25.75 0"/>
<path d="M1485.5,852.8C1580.5,852.8 1561.0,780.6 1656.0,780.6" pathLength="100" fill="none" stroke="#ff8a1a" stroke-width="4.4" opacity="0.32" stroke-dasharray="4.30 95.70"/>
<path d="M1485.5,852.8C1580.5,852.8 1561.0,780.6 1656.0,780.6" pathLength="100" fill="none" stroke="#ff8a1a" stroke-width="4.4" opacity="0.32" stroke-dasharray="0 78.50 21.50 0"/>
<path d="M1485.5,852.8C1580.5,852.8 1561.0,780.6 1656.0,780.6" pathLength="100" fill="none" stroke="#ff8a1a" stroke-width="4.4" opacity="0.32" stroke-dasharray="3.45 96.55"/>
<path d="M1485.5,852.8C1580.5,852.8 1561.0,780.6 1656.0,780.6" pathLength="100" fill="none" stroke="#ff8a1a" stroke-width="4.4" opacity="0.32" stroke-dasharray="0 82.75 17.25 0"/>
<path d="M1485.5,852.8C1580.5,852.8 1561.0,780.6 1656.0,780.6" pathLength="100" fill="none" stroke="#ff8a1a" stroke-width="4.4" opacity="0.32" stroke-dasharray="2.60 97.40"/>
<path d="M1485.5,852.8C1580.5,852.8 1561.0,780.6 1656.0,780.6" pathLength="100" fill="none" stroke="#ff8a1a" stroke-width="4.4" opacity="0.32" stroke-dasharray="0 87.00 13.00 0"/>
<path d="M1485.5,852.8C1580.5,852.8 1561.0,780.6 1656.0,780.6" pathLength="100" fill="none" stroke="#ff8a1a" stroke-width="4.4" opacity="0.9" stroke-dasharray="1.75 98.25"/>
<path d="M1485.5,852.8C1580.5,852.8 1561.0,780.6 1656.0,780.6" pathLength="100" fill="none" stroke="#ff8a1a" stroke-width="4.4" opacity="0.9" stroke-dasharray="0 91.25 8.75 0"/>
<path d="M1669.0,780.6L1654.5,772.6V788.6Z" fill="#ff8a1a" transform="rotate(0 1677.5 780.6)"/>
<path d="M1197.0,996.5C1292.0,996.5 1273.0,900.3 1368.0,900.3" fill="none" stroke="#ff8a1a" stroke-width="4.4" opacity="0.42"/>
<path d="M1197.0,996.5C1292.0,996.5 1273.0,900.3 1368.0,900.3" pathLength="100" fill="none" stroke="#ff8a1a" stroke-width="4.4" opacity="0.32" stroke-dasharray="6.00 94.00"/>
<path d="M1197.0,996.5C1292.0,996.5 1273.0,900.3 1368.0,900.3" pathLength="100" fill="none" stroke="#ff8a1a" stroke-width="4.4" opacity="0.32" stroke-dasharray="0 70.00 30.00 0"/>
<path d="M1197.0,996.5C1292.0,996.5 1273.0,900.3 1368.0,900.3" pathLength="100" fill="none" stroke="#ff8a1a" stroke-width="4.4" opacity="0.32" stroke-dasharray="5.15 94.85"/>
<path d="M1197.0,996.5C1292.0,996.5 1273.0,900.3 1368.0,900.3" pathLength="100" fill="none" stroke="#ff8a1a" stroke-width="4.4" opacity="0.32" stroke-dasharray="0 74.25 25.75 0"/>
<path d="M1197.0,996.5C1292.0,996.5 1273.0,900.3 1368.0,900.3" pathLength="100" fill="none" stroke="#ff8a1a" stroke-width="4.4" opacity="0.32" stroke-dasharray="4.30 95.70"/>
<path d="M1197.0,996.5C1292.0,996.5 1273.0,900.3 1368.0,900.3" pathLength="100" fill="none" stroke="#ff8a1a" stroke-width="4.4" opacity="0.32" stroke-dasharray="0 78.50 21.50 0"/>
<path d="M1197.0,996.5C1292.0,996.5 1273.0,900.3 1368.0,900.3" pathLength="100" fill="none" stroke="#ff8a1a" stroke-width="4.4" opacity="0.32" stroke-dasharray="3.45 96.55"/>
<path d="M1197.0,996.5C1292.0,996.5 1273.0,900.3 1368.0,900.3" pathLength="100" fill="none" stroke="#ff8a1a" stroke-width="4.4" opacity="0.32" stroke-dasharray="0 82.75 17.25 0"/>
<path d="M1197.0,996.5C1292.0,996.5 1273.0,900.3 1368.0,900.3" pathLength="100" fill="none" stroke="#ff8a1a" stroke-width="4.4" opacity="0.32" stroke-dasharray="2.60 97.40"/>
<path d="M1197.0,996.5C1292.0,996.5 1273.0,900.3 1368.0,900.3" pathLength="100" fill="none" stroke="#ff8a1a" stroke-width="4.4" opacity="0.32" stroke-dasharray="0 87.00 13.00 0"/>
<path d="M1197.0,996.5C1292.0,996.5 1273.0,900.3 1368.0,900.3" pathLength="100" fill="none" stroke="#ff8a1a" stroke-width="4.4" opacity="0.9" stroke-dasharray="1.75 98.25"/>
<path d="M1197.0,996.5C1292.0,996.5 1273.0,900.3 1368.0,900.3" pathLength="100" fill="none" stroke="#ff8a1a" stroke-width="4.4" opacity="0.9" stroke-dasharray="0 91.25 8.75 0"/>
<path d="M1381.0,900.3L1366.5,892.3V908.3Z" fill="#ff8a1a" transform="rotate(0 1389.5 900.3)"/>
<path d="M2061.0,708.4C2161.0,708.4 2132.0,852.8 2232.0,852.8" fill="none" stroke="#ff8a1a" stroke-width="4.4" opacity="0.42"/>
<path d="M2061.0,708.4C2161.0,708.4 2132.0,852.8 2232.0,852.8" pathLength="100" fill="none" stroke="#ff8a1a" stroke-width="4.4" opacity="0.32" stroke-dasharray="15.00 85.00"/>
<path d="M2061.0,708.4C2161.0,708.4 2132.0,852.8 2232.0,852.8" pathLength="100" fill="none" stroke="#ff8a1a" stroke-width="4.4" opacity="0.32" stroke-dasharray="0 80.00 20.00 0"/>
<path d="M2061.0,708.4C2161.0,708.4 2132.0,852.8 2232.0,852.8" pathLength="100" fill="none" stroke="#ff8a1a" stroke-width="4.4" opacity="0.32" stroke-dasharray="12.88 87.12"/>
<path d="M2061.0,708.4C2161.0,708.4 2132.0,852.8 2232.0,852.8" pathLength="100" fill="none" stroke="#ff8a1a" stroke-width="4.4" opacity="0.32" stroke-dasharray="0 82.83 17.17 0"/>
<path d="M2061.0,708.4C2161.0,708.4 2132.0,852.8 2232.0,852.8" pathLength="100" fill="none" stroke="#ff8a1a" stroke-width="4.4" opacity="0.32" stroke-dasharray="10.75 89.25"/>
<path d="M2061.0,708.4C2161.0,708.4 2132.0,852.8 2232.0,852.8" pathLength="100" fill="none" stroke="#ff8a1a" stroke-width="4.4" opacity="0.32" stroke-dasharray="0 85.67 14.33 0"/>
<path d="M2061.0,708.4C2161.0,708.4 2132.0,852.8 2232.0,852.8" pathLength="100" fill="none" stroke="#ff8a1a" stroke-width="4.4" opacity="0.32" stroke-dasharray="8.62 91.38"/>
<path d="M2061.0,708.4C2161.0,708.4 2132.0,852.8 2232.0,852.8" pathLength="100" fill="none" stroke="#ff8a1a" stroke-width="4.4" opacity="0.32" stroke-dasharray="0 88.50 11.50 0"/>
<path d="M2061.0,708.4C2161.0,708.4 2132.0,852.8 2232.0,852.8" pathLength="100" fill="none" stroke="#ff8a1a" stroke-width="4.4" opacity="0.32" stroke-dasharray="6.50 93.50"/>
<path d="M2061.0,708.4C2161.0,708.4 2132.0,852.8 2232.0,852.8" pathLength="100" fill="none" stroke="#ff8a1a" stroke-width="4.4" opacity="0.32" stroke-dasharray="0 91.33 8.67 0"/>
<path d="M2061.0,708.4C2161.0,708.4 2132.0,852.8 2232.0,852.8" pathLength="100" fill="none" stroke="#ff8a1a" stroke-width="4.4" opacity="0.9" stroke-dasharray="4.37 95.62"/>
<path d="M2061.0,708.4C2161.0,708.4 2132.0,852.8 2232.0,852.8" pathLength="100" fill="none" stroke="#ff8a1a" stroke-width="4.4" opacity="0.9" stroke-dasharray="0 94.17 5.83 0"/>
<path d="M2245.0,852.8L2230.5,844.8V860.8Z" fill="#ff8a1a" transform="rotate(0 2253.5 852.8)"/>
<path d="M2061.6,708.6C2084.9,711.9 2088.9,731.8 2090.8,753.0C2092.7,774.2 2085.5,807.0 2073.0,835.6C2060.5,864.2 2046.7,890.5 2016.0,924.4C1985.3,958.2 1941.9,1002.7 1889.0,1038.7C1836.1,1074.7 1761.9,1113.8 1698.4,1140.3C1634.9,1166.8 1565.1,1183.7 1508.0,1197.5C1450.9,1211.3 1391.9,1218.3 1355.6,1222.9C1319.3,1227.5 1306.2,1225.7 1290.0,1225.3C1273.8,1224.9 1269.8,1223.9 1258.2,1220.6C1246.6,1217.3 1230.0,1214.3 1220.2,1205.4C1210.4,1196.5 1201.7,1176.5 1199.3,1167.3C1196.9,1158.1 1201.9,1154.6 1206.0,1150.5C1210.1,1146.4 1214.0,1145.8 1224.0,1142.5" fill="none" stroke="#ff8a1a" stroke-width="4.4" opacity="0.25"/>
<path d="M2061.6,708.6C2084.9,711.9 2088.9,731.8 2090.8,753.0C2092.7,774.2 2085.5,807.0 2073.0,835.6C2060.5,864.2 2046.7,890.5 2016.0,924.4C1985.3,958.2 1941.9,1002.7 1889.0,1038.7C1836.1,1074.7 1761.9,1113.8 1698.4,1140.3C1634.9,1166.8 1565.1,1183.7 1508.0,1197.5C1450.9,1211.3 1391.9,1218.3 1355.6,1222.9C1319.3,1227.5 1306.2,1225.7 1290.0,1225.3C1273.8,1224.9 1269.8,1223.9 1258.2,1220.6C1246.6,1217.3 1230.0,1214.3 1220.2,1205.4C1210.4,1196.5 1201.7,1176.5 1199.3,1167.3C1196.9,1158.1 1201.9,1154.6 1206.0,1150.5C1210.1,1146.4 1214.0,1145.8 1224.0,1142.5" pathLength="100" fill="none" stroke="#ff8a1a" stroke-width="4.4" opacity="0.32" stroke-dasharray="20.00 80.00"/>
<path d="M2061.6,708.6C2084.9,711.9 2088.9,731.8 2090.8,753.0C2092.7,774.2 2085.5,807.0 2073.0,835.6C2060.5,864.2 2046.7,890.5 2016.0,924.4C1985.3,958.2 1941.9,1002.7 1889.0,1038.7C1836.1,1074.7 1761.9,1113.8 1698.4,1140.3C1634.9,1166.8 1565.1,1183.7 1508.0,1197.5C1450.9,1211.3 1391.9,1218.3 1355.6,1222.9C1319.3,1227.5 1306.2,1225.7 1290.0,1225.3C1273.8,1224.9 1269.8,1223.9 1258.2,1220.6C1246.6,1217.3 1230.0,1214.3 1220.2,1205.4C1210.4,1196.5 1201.7,1176.5 1199.3,1167.3C1196.9,1158.1 1201.9,1154.6 1206.0,1150.5C1210.1,1146.4 1214.0,1145.8 1224.0,1142.5" pathLength="100" fill="none" stroke="#ff8a1a" stroke-width="4.4" opacity="0.32" stroke-dasharray="0 80.00 20.00 0"/>
<path d="M2061.6,708.6C2084.9,711.9 2088.9,731.8 2090.8,753.0C2092.7,774.2 2085.5,807.0 2073.0,835.6C2060.5,864.2 2046.7,890.5 2016.0,924.4C1985.3,958.2 1941.9,1002.7 1889.0,1038.7C1836.1,1074.7 1761.9,1113.8 1698.4,1140.3C1634.9,1166.8 1565.1,1183.7 1508.0,1197.5C1450.9,1211.3 1391.9,1218.3 1355.6,1222.9C1319.3,1227.5 1306.2,1225.7 1290.0,1225.3C1273.8,1224.9 1269.8,1223.9 1258.2,1220.6C1246.6,1217.3 1230.0,1214.3 1220.2,1205.4C1210.4,1196.5 1201.7,1176.5 1199.3,1167.3C1196.9,1158.1 1201.9,1154.6 1206.0,1150.5C1210.1,1146.4 1214.0,1145.8 1224.0,1142.5" pathLength="100" fill="none" stroke="#ff8a1a" stroke-width="4.4" opacity="0.32" stroke-dasharray="17.17 82.83"/>
<path d="M2061.6,708.6C2084.9,711.9 2088.9,731.8 2090.8,753.0C2092.7,774.2 2085.5,807.0 2073.0,835.6C2060.5,864.2 2046.7,890.5 2016.0,924.4C1985.3,958.2 1941.9,1002.7 1889.0,1038.7C1836.1,1074.7 1761.9,1113.8 1698.4,1140.3C1634.9,1166.8 1565.1,1183.7 1508.0,1197.5C1450.9,1211.3 1391.9,1218.3 1355.6,1222.9C1319.3,1227.5 1306.2,1225.7 1290.0,1225.3C1273.8,1224.9 1269.8,1223.9 1258.2,1220.6C1246.6,1217.3 1230.0,1214.3 1220.2,1205.4C1210.4,1196.5 1201.7,1176.5 1199.3,1167.3C1196.9,1158.1 1201.9,1154.6 1206.0,1150.5C1210.1,1146.4 1214.0,1145.8 1224.0,1142.5" pathLength="100" fill="none" stroke="#ff8a1a" stroke-width="4.4" opacity="0.32" stroke-dasharray="0 82.83 17.17 0"/>
<path d="M2061.6,708.6C2084.9,711.9 2088.9,731.8 2090.8,753.0C2092.7,774.2 2085.5,807.0 2073.0,835.6C2060.5,864.2 2046.7,890.5 2016.0,924.4C1985.3,958.2 1941.9,1002.7 1889.0,1038.7C1836.1,1074.7 1761.9,1113.8 1698.4,1140.3C1634.9,1166.8 1565.1,1183.7 1508.0,1197.5C1450.9,1211.3 1391.9,1218.3 1355.6,1222.9C1319.3,1227.5 1306.2,1225.7 1290.0,1225.3C1273.8,1224.9 1269.8,1223.9 1258.2,1220.6C1246.6,1217.3 1230.0,1214.3 1220.2,1205.4C1210.4,1196.5 1201.7,1176.5 1199.3,1167.3C1196.9,1158.1 1201.9,1154.6 1206.0,1150.5C1210.1,1146.4 1214.0,1145.8 1224.0,1142.5" pathLength="100" fill="none" stroke="#ff8a1a" stroke-width="4.4" opacity="0.32" stroke-dasharray="14.33 85.67"/>
<path d="M2061.6,708.6C2084.9,711.9 2088.9,731.8 2090.8,753.0C2092.7,774.2 2085.5,807.0 2073.0,835.6C2060.5,864.2 2046.7,890.5 2016.0,924.4C1985.3,958.2 1941.9,1002.7 1889.0,1038.7C1836.1,1074.7 1761.9,1113.8 1698.4,1140.3C1634.9,1166.8 1565.1,1183.7 1508.0,1197.5C1450.9,1211.3 1391.9,1218.3 1355.6,1222.9C1319.3,1227.5 1306.2,1225.7 1290.0,1225.3C1273.8,1224.9 1269.8,1223.9 1258.2,1220.6C1246.6,1217.3 1230.0,1214.3 1220.2,1205.4C1210.4,1196.5 1201.7,1176.5 1199.3,1167.3C1196.9,1158.1 1201.9,1154.6 1206.0,1150.5C1210.1,1146.4 1214.0,1145.8 1224.0,1142.5" pathLength="100" fill="none" stroke="#ff8a1a" stroke-width="4.4" opacity="0.32" stroke-dasharray="0 85.67 14.33 0"/>
<path d="M2061.6,708.6C2084.9,711.9 2088.9,731.8 2090.8,753.0C2092.7,774.2 2085.5,807.0 2073.0,835.6C2060.5,864.2 2046.7,890.5 2016.0,924.4C1985.3,958.2 1941.9,1002.7 1889.0,1038.7C1836.1,1074.7 1761.9,1113.8 1698.4,1140.3C1634.9,1166.8 1565.1,1183.7 1508.0,1197.5C1450.9,1211.3 1391.9,1218.3 1355.6,1222.9C1319.3,1227.5 1306.2,1225.7 1290.0,1225.3C1273.8,1224.9 1269.8,1223.9 1258.2,1220.6C1246.6,1217.3 1230.0,1214.3 1220.2,1205.4C1210.4,1196.5 1201.7,1176.5 1199.3,1167.3C1196.9,1158.1 1201.9,1154.6 1206.0,1150.5C1210.1,1146.4 1214.0,1145.8 1224.0,1142.5" pathLength="100" fill="none" stroke="#ff8a1a" stroke-width="4.4" opacity="0.32" stroke-dasharray="11.50 88.50"/>
<path d="M2061.6,708.6C2084.9,711.9 2088.9,731.8 2090.8,753.0C2092.7,774.2 2085.5,807.0 2073.0,835.6C2060.5,864.2 2046.7,890.5 2016.0,924.4C1985.3,958.2 1941.9,1002.7 1889.0,1038.7C1836.1,1074.7 1761.9,1113.8 1698.4,1140.3C1634.9,1166.8 1565.1,1183.7 1508.0,1197.5C1450.9,1211.3 1391.9,1218.3 1355.6,1222.9C1319.3,1227.5 1306.2,1225.7 1290.0,1225.3C1273.8,1224.9 1269.8,1223.9 1258.2,1220.6C1246.6,1217.3 1230.0,1214.3 1220.2,1205.4C1210.4,1196.5 1201.7,1176.5 1199.3,1167.3C1196.9,1158.1 1201.9,1154.6 1206.0,1150.5C1210.1,1146.4 1214.0,1145.8 1224.0,1142.5" pathLength="100" fill="none" stroke="#ff8a1a" stroke-width="4.4" opacity="0.32" stroke-dasharray="0 88.50 11.50 0"/>
<path d="M2061.6,708.6C2084.9,711.9 2088.9,731.8 2090.8,753.0C2092.7,774.2 2085.5,807.0 2073.0,835.6C2060.5,864.2 2046.7,890.5 2016.0,924.4C1985.3,958.2 1941.9,1002.7 1889.0,1038.7C1836.1,1074.7 1761.9,1113.8 1698.4,1140.3C1634.9,1166.8 1565.1,1183.7 1508.0,1197.5C1450.9,1211.3 1391.9,1218.3 1355.6,1222.9C1319.3,1227.5 1306.2,1225.7 1290.0,1225.3C1273.8,1224.9 1269.8,1223.9 1258.2,1220.6C1246.6,1217.3 1230.0,1214.3 1220.2,1205.4C1210.4,1196.5 1201.7,1176.5 1199.3,1167.3C1196.9,1158.1 1201.9,1154.6 1206.0,1150.5C1210.1,1146.4 1214.0,1145.8 1224.0,1142.5" pathLength="100" fill="none" stroke="#ff8a1a" stroke-width="4.4" opacity="0.32" stroke-dasharray="8.67 91.33"/>
<path d="M2061.6,708.6C2084.9,711.9 2088.9,731.8 2090.8,753.0C2092.7,774.2 2085.5,807.0 2073.0,835.6C2060.5,864.2 2046.7,890.5 2016.0,924.4C1985.3,958.2 1941.9,1002.7 1889.0,1038.7C1836.1,1074.7 1761.9,1113.8 1698.4,1140.3C1634.9,1166.8 1565.1,1183.7 1508.0,1197.5C1450.9,1211.3 1391.9,1218.3 1355.6,1222.9C1319.3,1227.5 1306.2,1225.7 1290.0,1225.3C1273.8,1224.9 1269.8,1223.9 1258.2,1220.6C1246.6,1217.3 1230.0,1214.3 1220.2,1205.4C1210.4,1196.5 1201.7,1176.5 1199.3,1167.3C1196.9,1158.1 1201.9,1154.6 1206.0,1150.5C1210.1,1146.4 1214.0,1145.8 1224.0,1142.5" pathLength="100" fill="none" stroke="#ff8a1a" stroke-width="4.4" opacity="0.32" stroke-dasharray="0 91.33 8.67 0"/>
<path d="M2061.6,708.6C2084.9,711.9 2088.9,731.8 2090.8,753.0C2092.7,774.2 2085.5,807.0 2073.0,835.6C2060.5,864.2 2046.7,890.5 2016.0,924.4C1985.3,958.2 1941.9,1002.7 1889.0,1038.7C1836.1,1074.7 1761.9,1113.8 1698.4,1140.3C1634.9,1166.8 1565.1,1183.7 1508.0,1197.5C1450.9,1211.3 1391.9,1218.3 1355.6,1222.9C1319.3,1227.5 1306.2,1225.7 1290.0,1225.3C1273.8,1224.9 1269.8,1223.9 1258.2,1220.6C1246.6,1217.3 1230.0,1214.3 1220.2,1205.4C1210.4,1196.5 1201.7,1176.5 1199.3,1167.3C1196.9,1158.1 1201.9,1154.6 1206.0,1150.5C1210.1,1146.4 1214.0,1145.8 1224.0,1142.5" pathLength="100" fill="none" stroke="#ff8a1a" stroke-width="4.4" opacity="0.9" stroke-dasharray="5.83 94.17"/>
<path d="M2061.6,708.6C2084.9,711.9 2088.9,731.8 2090.8,753.0C2092.7,774.2 2085.5,807.0 2073.0,835.6C2060.5,864.2 2046.7,890.5 2016.0,924.4C1985.3,958.2 1941.9,1002.7 1889.0,1038.7C1836.1,1074.7 1761.9,1113.8 1698.4,1140.3C1634.9,1166.8 1565.1,1183.7 1508.0,1197.5C1450.9,1211.3 1391.9,1218.3 1355.6,1222.9C1319.3,1227.5 1306.2,1225.7 1290.0,1225.3C1273.8,1224.9 1269.8,1223.9 1258.2,1220.6C1246.6,1217.3 1230.0,1214.3 1220.2,1205.4C1210.4,1196.5 1201.7,1176.5 1199.3,1167.3C1196.9,1158.1 1201.9,1154.6 1206.0,1150.5C1210.1,1146.4 1214.0,1145.8 1224.0,1142.5" pathLength="100" fill="none" stroke="#ff8a1a" stroke-width="4.4" opacity="0.9" stroke-dasharray="0 94.17 5.83 0"/>
<path d="M1236.6,1139.0L1222.1,1131.0V1147.0Z" fill="#ff8a1a" transform="rotate(-22 1236.6 1139.0)"/>
<line x1="2349.5" y1="564.3" x2="2377.5" y2="564.3" stroke="#ffdd40" stroke-width="4.6" />
<path d="M2389.0,564.3L2374.5,556.3V572.3Z" fill="#ffdd40" transform="rotate(0 2397.5 564.3)"/>
<line x1="2493.5" y1="564.3" x2="2521.5" y2="564.3" stroke="#ffdd40" stroke-width="4.6" />
<path d="M2533.0,564.3L2518.5,556.3V572.3Z" fill="#ffdd40" transform="rotate(0 2541.5 564.3)"/>
<path d="M2493.3,564.4C2513.3,566.4 2514.4,571.6 2517.5,580.0C2520.6,588.4 2518.4,599.9 2512.0,615.0C2505.6,630.1 2498.2,648.5 2479.0,670.5C2459.8,692.5 2431.8,721.3 2397.0,746.7C2362.2,772.1 2323.0,795.4 2270.0,822.9C2217.0,850.4 2153.2,884.2 2079.0,911.7C2004.8,939.2 1909.7,966.8 1825.0,988.0C1740.3,1009.2 1655.7,1023.9 1571.0,1038.7C1486.3,1053.5 1375.5,1069.1 1317.0,1076.8C1258.5,1084.5 1245.7,1084.5 1220.0,1085.0C1194.3,1085.5 1182.0,1082.9 1163.0,1079.8C1144.0,1076.7 1121.8,1072.2 1106.0,1066.5C1090.2,1060.8 1075.8,1053.5 1068.0,1045.6C1060.2,1037.7 1059.4,1025.6 1058.9,1019.0C1058.4,1012.4 1061.3,1009.3 1065.0,1006.0C1068.7,1002.7 1071.0,1002.3 1081.0,999.0" fill="none" stroke="#ffdd40" stroke-width="4.4" opacity="0.22"/>
<path d="M2493.3,564.4C2513.3,566.4 2514.4,571.6 2517.5,580.0C2520.6,588.4 2518.4,599.9 2512.0,615.0C2505.6,630.1 2498.2,648.5 2479.0,670.5C2459.8,692.5 2431.8,721.3 2397.0,746.7C2362.2,772.1 2323.0,795.4 2270.0,822.9C2217.0,850.4 2153.2,884.2 2079.0,911.7C2004.8,939.2 1909.7,966.8 1825.0,988.0C1740.3,1009.2 1655.7,1023.9 1571.0,1038.7C1486.3,1053.5 1375.5,1069.1 1317.0,1076.8C1258.5,1084.5 1245.7,1084.5 1220.0,1085.0C1194.3,1085.5 1182.0,1082.9 1163.0,1079.8C1144.0,1076.7 1121.8,1072.2 1106.0,1066.5C1090.2,1060.8 1075.8,1053.5 1068.0,1045.6C1060.2,1037.7 1059.4,1025.6 1058.9,1019.0C1058.4,1012.4 1061.3,1009.3 1065.0,1006.0C1068.7,1002.7 1071.0,1002.3 1081.0,999.0" pathLength="100" fill="none" stroke="#ffdd40" stroke-width="4.4" opacity="0.32" stroke-dasharray="13.00 87.00"/>
<path d="M2493.3,564.4C2513.3,566.4 2514.4,571.6 2517.5,580.0C2520.6,588.4 2518.4,599.9 2512.0,615.0C2505.6,630.1 2498.2,648.5 2479.0,670.5C2459.8,692.5 2431.8,721.3 2397.0,746.7C2362.2,772.1 2323.0,795.4 2270.0,822.9C2217.0,850.4 2153.2,884.2 2079.0,911.7C2004.8,939.2 1909.7,966.8 1825.0,988.0C1740.3,1009.2 1655.7,1023.9 1571.0,1038.7C1486.3,1053.5 1375.5,1069.1 1317.0,1076.8C1258.5,1084.5 1245.7,1084.5 1220.0,1085.0C1194.3,1085.5 1182.0,1082.9 1163.0,1079.8C1144.0,1076.7 1121.8,1072.2 1106.0,1066.5C1090.2,1060.8 1075.8,1053.5 1068.0,1045.6C1060.2,1037.7 1059.4,1025.6 1058.9,1019.0C1058.4,1012.4 1061.3,1009.3 1065.0,1006.0C1068.7,1002.7 1071.0,1002.3 1081.0,999.0" pathLength="100" fill="none" stroke="#ffdd40" stroke-width="4.4" opacity="0.32" stroke-dasharray="0 83.00 17.00 0"/>
<path d="M2493.3,564.4C2513.3,566.4 2514.4,571.6 2517.5,580.0C2520.6,588.4 2518.4,599.9 2512.0,615.0C2505.6,630.1 2498.2,648.5 2479.0,670.5C2459.8,692.5 2431.8,721.3 2397.0,746.7C2362.2,772.1 2323.0,795.4 2270.0,822.9C2217.0,850.4 2153.2,884.2 2079.0,911.7C2004.8,939.2 1909.7,966.8 1825.0,988.0C1740.3,1009.2 1655.7,1023.9 1571.0,1038.7C1486.3,1053.5 1375.5,1069.1 1317.0,1076.8C1258.5,1084.5 1245.7,1084.5 1220.0,1085.0C1194.3,1085.5 1182.0,1082.9 1163.0,1079.8C1144.0,1076.7 1121.8,1072.2 1106.0,1066.5C1090.2,1060.8 1075.8,1053.5 1068.0,1045.6C1060.2,1037.7 1059.4,1025.6 1058.9,1019.0C1058.4,1012.4 1061.3,1009.3 1065.0,1006.0C1068.7,1002.7 1071.0,1002.3 1081.0,999.0" pathLength="100" fill="none" stroke="#ffdd40" stroke-width="4.4" opacity="0.32" stroke-dasharray="11.16 88.84"/>
<path d="M2493.3,564.4C2513.3,566.4 2514.4,571.6 2517.5,580.0C2520.6,588.4 2518.4,599.9 2512.0,615.0C2505.6,630.1 2498.2,648.5 2479.0,670.5C2459.8,692.5 2431.8,721.3 2397.0,746.7C2362.2,772.1 2323.0,795.4 2270.0,822.9C2217.0,850.4 2153.2,884.2 2079.0,911.7C2004.8,939.2 1909.7,966.8 1825.0,988.0C1740.3,1009.2 1655.7,1023.9 1571.0,1038.7C1486.3,1053.5 1375.5,1069.1 1317.0,1076.8C1258.5,1084.5 1245.7,1084.5 1220.0,1085.0C1194.3,1085.5 1182.0,1082.9 1163.0,1079.8C1144.0,1076.7 1121.8,1072.2 1106.0,1066.5C1090.2,1060.8 1075.8,1053.5 1068.0,1045.6C1060.2,1037.7 1059.4,1025.6 1058.9,1019.0C1058.4,1012.4 1061.3,1009.3 1065.0,1006.0C1068.7,1002.7 1071.0,1002.3 1081.0,999.0" pathLength="100" fill="none" stroke="#ffdd40" stroke-width="4.4" opacity="0.32" stroke-dasharray="0 85.41 14.59 0"/>
<path d="M2493.3,564.4C2513.3,566.4 2514.4,571.6 2517.5,580.0C2520.6,588.4 2518.4,599.9 2512.0,615.0C2505.6,630.1 2498.2,648.5 2479.0,670.5C2459.8,692.5 2431.8,721.3 2397.0,746.7C2362.2,772.1 2323.0,795.4 2270.0,822.9C2217.0,850.4 2153.2,884.2 2079.0,911.7C2004.8,939.2 1909.7,966.8 1825.0,988.0C1740.3,1009.2 1655.7,1023.9 1571.0,1038.7C1486.3,1053.5 1375.5,1069.1 1317.0,1076.8C1258.5,1084.5 1245.7,1084.5 1220.0,1085.0C1194.3,1085.5 1182.0,1082.9 1163.0,1079.8C1144.0,1076.7 1121.8,1072.2 1106.0,1066.5C1090.2,1060.8 1075.8,1053.5 1068.0,1045.6C1060.2,1037.7 1059.4,1025.6 1058.9,1019.0C1058.4,1012.4 1061.3,1009.3 1065.0,1006.0C1068.7,1002.7 1071.0,1002.3 1081.0,999.0" pathLength="100" fill="none" stroke="#ffdd40" stroke-width="4.4" opacity="0.32" stroke-dasharray="9.32 90.68"/>
<path d="M2493.3,564.4C2513.3,566.4 2514.4,571.6 2517.5,580.0C2520.6,588.4 2518.4,599.9 2512.0,615.0C2505.6,630.1 2498.2,648.5 2479.0,670.5C2459.8,692.5 2431.8,721.3 2397.0,746.7C2362.2,772.1 2323.0,795.4 2270.0,822.9C2217.0,850.4 2153.2,884.2 2079.0,911.7C2004.8,939.2 1909.7,966.8 1825.0,988.0C1740.3,1009.2 1655.7,1023.9 1571.0,1038.7C1486.3,1053.5 1375.5,1069.1 1317.0,1076.8C1258.5,1084.5 1245.7,1084.5 1220.0,1085.0C1194.3,1085.5 1182.0,1082.9 1163.0,1079.8C1144.0,1076.7 1121.8,1072.2 1106.0,1066.5C1090.2,1060.8 1075.8,1053.5 1068.0,1045.6C1060.2,1037.7 1059.4,1025.6 1058.9,1019.0C1058.4,1012.4 1061.3,1009.3 1065.0,1006.0C1068.7,1002.7 1071.0,1002.3 1081.0,999.0" pathLength="100" fill="none" stroke="#ffdd40" stroke-width="4.4" opacity="0.32" stroke-dasharray="0 87.82 12.18 0"/>
<path d="M2493.3,564.4C2513.3,566.4 2514.4,571.6 2517.5,580.0C2520.6,588.4 2518.4,599.9 2512.0,615.0C2505.6,630.1 2498.2,648.5 2479.0,670.5C2459.8,692.5 2431.8,721.3 2397.0,746.7C2362.2,772.1 2323.0,795.4 2270.0,822.9C2217.0,850.4 2153.2,884.2 2079.0,911.7C2004.8,939.2 1909.7,966.8 1825.0,988.0C1740.3,1009.2 1655.7,1023.9 1571.0,1038.7C1486.3,1053.5 1375.5,1069.1 1317.0,1076.8C1258.5,1084.5 1245.7,1084.5 1220.0,1085.0C1194.3,1085.5 1182.0,1082.9 1163.0,1079.8C1144.0,1076.7 1121.8,1072.2 1106.0,1066.5C1090.2,1060.8 1075.8,1053.5 1068.0,1045.6C1060.2,1037.7 1059.4,1025.6 1058.9,1019.0C1058.4,1012.4 1061.3,1009.3 1065.0,1006.0C1068.7,1002.7 1071.0,1002.3 1081.0,999.0" pathLength="100" fill="none" stroke="#ffdd40" stroke-width="4.4" opacity="0.32" stroke-dasharray="7.47 92.53"/>
<path d="M2493.3,564.4C2513.3,566.4 2514.4,571.6 2517.5,580.0C2520.6,588.4 2518.4,599.9 2512.0,615.0C2505.6,630.1 2498.2,648.5 2479.0,670.5C2459.8,692.5 2431.8,721.3 2397.0,746.7C2362.2,772.1 2323.0,795.4 2270.0,822.9C2217.0,850.4 2153.2,884.2 2079.0,911.7C2004.8,939.2 1909.7,966.8 1825.0,988.0C1740.3,1009.2 1655.7,1023.9 1571.0,1038.7C1486.3,1053.5 1375.5,1069.1 1317.0,1076.8C1258.5,1084.5 1245.7,1084.5 1220.0,1085.0C1194.3,1085.5 1182.0,1082.9 1163.0,1079.8C1144.0,1076.7 1121.8,1072.2 1106.0,1066.5C1090.2,1060.8 1075.8,1053.5 1068.0,1045.6C1060.2,1037.7 1059.4,1025.6 1058.9,1019.0C1058.4,1012.4 1061.3,1009.3 1065.0,1006.0C1068.7,1002.7 1071.0,1002.3 1081.0,999.0" pathLength="100" fill="none" stroke="#ffdd40" stroke-width="4.4" opacity="0.32" stroke-dasharray="0 90.22 9.78 0"/>
<path d="M2493.3,564.4C2513.3,566.4 2514.4,571.6 2517.5,580.0C2520.6,588.4 2518.4,599.9 2512.0,615.0C2505.6,630.1 2498.2,648.5 2479.0,670.5C2459.8,692.5 2431.8,721.3 2397.0,746.7C2362.2,772.1 2323.0,795.4 2270.0,822.9C2217.0,850.4 2153.2,884.2 2079.0,911.7C2004.8,939.2 1909.7,966.8 1825.0,988.0C1740.3,1009.2 1655.7,1023.9 1571.0,1038.7C1486.3,1053.5 1375.5,1069.1 1317.0,1076.8C1258.5,1084.5 1245.7,1084.5 1220.0,1085.0C1194.3,1085.5 1182.0,1082.9 1163.0,1079.8C1144.0,1076.7 1121.8,1072.2 1106.0,1066.5C1090.2,1060.8 1075.8,1053.5 1068.0,1045.6C1060.2,1037.7 1059.4,1025.6 1058.9,1019.0C1058.4,1012.4 1061.3,1009.3 1065.0,1006.0C1068.7,1002.7 1071.0,1002.3 1081.0,999.0" pathLength="100" fill="none" stroke="#ffdd40" stroke-width="4.4" opacity="0.32" stroke-dasharray="5.63 94.37"/>
<path d="M2493.3,564.4C2513.3,566.4 2514.4,571.6 2517.5,580.0C2520.6,588.4 2518.4,599.9 2512.0,615.0C2505.6,630.1 2498.2,648.5 2479.0,670.5C2459.8,692.5 2431.8,721.3 2397.0,746.7C2362.2,772.1 2323.0,795.4 2270.0,822.9C2217.0,850.4 2153.2,884.2 2079.0,911.7C2004.8,939.2 1909.7,966.8 1825.0,988.0C1740.3,1009.2 1655.7,1023.9 1571.0,1038.7C1486.3,1053.5 1375.5,1069.1 1317.0,1076.8C1258.5,1084.5 1245.7,1084.5 1220.0,1085.0C1194.3,1085.5 1182.0,1082.9 1163.0,1079.8C1144.0,1076.7 1121.8,1072.2 1106.0,1066.5C1090.2,1060.8 1075.8,1053.5 1068.0,1045.6C1060.2,1037.7 1059.4,1025.6 1058.9,1019.0C1058.4,1012.4 1061.3,1009.3 1065.0,1006.0C1068.7,1002.7 1071.0,1002.3 1081.0,999.0" pathLength="100" fill="none" stroke="#ffdd40" stroke-width="4.4" opacity="0.32" stroke-dasharray="0 92.63 7.37 0"/>
<path d="M2493.3,564.4C2513.3,566.4 2514.4,571.6 2517.5,580.0C2520.6,588.4 2518.4,599.9 2512.0,615.0C2505.6,630.1 2498.2,648.5 2479.0,670.5C2459.8,692.5 2431.8,721.3 2397.0,746.7C2362.2,772.1 2323.0,795.4 2270.0,822.9C2217.0,850.4 2153.2,884.2 2079.0,911.7C2004.8,939.2 1909.7,966.8 1825.0,988.0C1740.3,1009.2 1655.7,1023.9 1571.0,1038.7C1486.3,1053.5 1375.5,1069.1 1317.0,1076.8C1258.5,1084.5 1245.7,1084.5 1220.0,1085.0C1194.3,1085.5 1182.0,1082.9 1163.0,1079.8C1144.0,1076.7 1121.8,1072.2 1106.0,1066.5C1090.2,1060.8 1075.8,1053.5 1068.0,1045.6C1060.2,1037.7 1059.4,1025.6 1058.9,1019.0C1058.4,1012.4 1061.3,1009.3 1065.0,1006.0C1068.7,1002.7 1071.0,1002.3 1081.0,999.0" pathLength="100" fill="none" stroke="#ffdd40" stroke-width="4.4" opacity="0.9" stroke-dasharray="3.79 96.21"/>
<path d="M2493.3,564.4C2513.3,566.4 2514.4,571.6 2517.5,580.0C2520.6,588.4 2518.4,599.9 2512.0,615.0C2505.6,630.1 2498.2,648.5 2479.0,670.5C2459.8,692.5 2431.8,721.3 2397.0,746.7C2362.2,772.1 2323.0,795.4 2270.0,822.9C2217.0,850.4 2153.2,884.2 2079.0,911.7C2004.8,939.2 1909.7,966.8 1825.0,988.0C1740.3,1009.2 1655.7,1023.9 1571.0,1038.7C1486.3,1053.5 1375.5,1069.1 1317.0,1076.8C1258.5,1084.5 1245.7,1084.5 1220.0,1085.0C1194.3,1085.5 1182.0,1082.9 1163.0,1079.8C1144.0,1076.7 1121.8,1072.2 1106.0,1066.5C1090.2,1060.8 1075.8,1053.5 1068.0,1045.6C1060.2,1037.7 1059.4,1025.6 1058.9,1019.0C1058.4,1012.4 1061.3,1009.3 1065.0,1006.0C1068.7,1002.7 1071.0,1002.3 1081.0,999.0" pathLength="100" fill="none" stroke="#ffdd40" stroke-width="4.4" opacity="0.9" stroke-dasharray="0 95.04 4.96 0"/>
<path d="M1093.0,996.2L1078.5,988.2V1004.2Z" fill="#ffdd40" transform="rotate(-22 1093.0 996.2)"/>
<path d="M2349.5,852.8C2379.5,852.8 2387.9,856.1 2400.0,868.0C2412.1,879.9 2415.2,904.0 2422.0,924.0C2428.8,944.0 2434.7,966.8 2441.0,988.0C2447.3,1009.2 2452.6,1032.0 2460.0,1051.0C2467.4,1070.0 2475.9,1089.8 2485.7,1102.0C2495.5,1114.2 2495.7,1123.1 2519.0,1124.4" fill="none" stroke="#ff8a1a" stroke-width="4.4" opacity="0.42"/>
<path d="M2349.5,852.8C2379.5,852.8 2387.9,856.1 2400.0,868.0C2412.1,879.9 2415.2,904.0 2422.0,924.0C2428.8,944.0 2434.7,966.8 2441.0,988.0C2447.3,1009.2 2452.6,1032.0 2460.0,1051.0C2467.4,1070.0 2475.9,1089.8 2485.7,1102.0C2495.5,1114.2 2495.7,1123.1 2519.0,1124.4" pathLength="100" fill="none" stroke="#ff8a1a" stroke-width="4.4" opacity="0.32" stroke-dasharray="5.00 95.00"/>
<path d="M2349.5,852.8C2379.5,852.8 2387.9,856.1 2400.0,868.0C2412.1,879.9 2415.2,904.0 2422.0,924.0C2428.8,944.0 2434.7,966.8 2441.0,988.0C2447.3,1009.2 2452.6,1032.0 2460.0,1051.0C2467.4,1070.0 2475.9,1089.8 2485.7,1102.0C2495.5,1114.2 2495.7,1123.1 2519.0,1124.4" pathLength="100" fill="none" stroke="#ff8a1a" stroke-width="4.4" opacity="0.32" stroke-dasharray="0 75.00 25.00 0"/>
<path d="M2349.5,852.8C2379.5,852.8 2387.9,856.1 2400.0,868.0C2412.1,879.9 2415.2,904.0 2422.0,924.0C2428.8,944.0 2434.7,966.8 2441.0,988.0C2447.3,1009.2 2452.6,1032.0 2460.0,1051.0C2467.4,1070.0 2475.9,1089.8 2485.7,1102.0C2495.5,1114.2 2495.7,1123.1 2519.0,1124.4" pathLength="100" fill="none" stroke="#ff8a1a" stroke-width="4.4" opacity="0.32" stroke-dasharray="4.29 95.71"/>
<path d="M2349.5,852.8C2379.5,852.8 2387.9,856.1 2400.0,868.0C2412.1,879.9 2415.2,904.0 2422.0,924.0C2428.8,944.0 2434.7,966.8 2441.0,988.0C2447.3,1009.2 2452.6,1032.0 2460.0,1051.0C2467.4,1070.0 2475.9,1089.8 2485.7,1102.0C2495.5,1114.2 2495.7,1123.1 2519.0,1124.4" pathLength="100" fill="none" stroke="#ff8a1a" stroke-width="4.4" opacity="0.32" stroke-dasharray="0 78.54 21.46 0"/>
<path d="M2349.5,852.8C2379.5,852.8 2387.9,856.1 2400.0,868.0C2412.1,879.9 2415.2,904.0 2422.0,924.0C2428.8,944.0 2434.7,966.8 2441.0,988.0C2447.3,1009.2 2452.6,1032.0 2460.0,1051.0C2467.4,1070.0 2475.9,1089.8 2485.7,1102.0C2495.5,1114.2 2495.7,1123.1 2519.0,1124.4" pathLength="100" fill="none" stroke="#ff8a1a" stroke-width="4.4" opacity="0.32" stroke-dasharray="3.58 96.42"/>
<path d="M2349.5,852.8C2379.5,852.8 2387.9,856.1 2400.0,868.0C2412.1,879.9 2415.2,904.0 2422.0,924.0C2428.8,944.0 2434.7,966.8 2441.0,988.0C2447.3,1009.2 2452.6,1032.0 2460.0,1051.0C2467.4,1070.0 2475.9,1089.8 2485.7,1102.0C2495.5,1114.2 2495.7,1123.1 2519.0,1124.4" pathLength="100" fill="none" stroke="#ff8a1a" stroke-width="4.4" opacity="0.32" stroke-dasharray="0 82.08 17.92 0"/>
<path d="M2349.5,852.8C2379.5,852.8 2387.9,856.1 2400.0,868.0C2412.1,879.9 2415.2,904.0 2422.0,924.0C2428.8,944.0 2434.7,966.8 2441.0,988.0C2447.3,1009.2 2452.6,1032.0 2460.0,1051.0C2467.4,1070.0 2475.9,1089.8 2485.7,1102.0C2495.5,1114.2 2495.7,1123.1 2519.0,1124.4" pathLength="100" fill="none" stroke="#ff8a1a" stroke-width="4.4" opacity="0.32" stroke-dasharray="2.88 97.12"/>
<path d="M2349.5,852.8C2379.5,852.8 2387.9,856.1 2400.0,868.0C2412.1,879.9 2415.2,904.0 2422.0,924.0C2428.8,944.0 2434.7,966.8 2441.0,988.0C2447.3,1009.2 2452.6,1032.0 2460.0,1051.0C2467.4,1070.0 2475.9,1089.8 2485.7,1102.0C2495.5,1114.2 2495.7,1123.1 2519.0,1124.4" pathLength="100" fill="none" stroke="#ff8a1a" stroke-width="4.4" opacity="0.32" stroke-dasharray="0 85.62 14.37 0"/>
<path d="M2349.5,852.8C2379.5,852.8 2387.9,856.1 2400.0,868.0C2412.1,879.9 2415.2,904.0 2422.0,924.0C2428.8,944.0 2434.7,966.8 2441.0,988.0C2447.3,1009.2 2452.6,1032.0 2460.0,1051.0C2467.4,1070.0 2475.9,1089.8 2485.7,1102.0C2495.5,1114.2 2495.7,1123.1 2519.0,1124.4" pathLength="100" fill="none" stroke="#ff8a1a" stroke-width="4.4" opacity="0.32" stroke-dasharray="2.17 97.83"/>
<path d="M2349.5,852.8C2379.5,852.8 2387.9,856.1 2400.0,868.0C2412.1,879.9 2415.2,904.0 2422.0,924.0C2428.8,944.0 2434.7,966.8 2441.0,988.0C2447.3,1009.2 2452.6,1032.0 2460.0,1051.0C2467.4,1070.0 2475.9,1089.8 2485.7,1102.0C2495.5,1114.2 2495.7,1123.1 2519.0,1124.4" pathLength="100" fill="none" stroke="#ff8a1a" stroke-width="4.4" opacity="0.32" stroke-dasharray="0 89.17 10.83 0"/>
<path d="M2349.5,852.8C2379.5,852.8 2387.9,856.1 2400.0,868.0C2412.1,879.9 2415.2,904.0 2422.0,924.0C2428.8,944.0 2434.7,966.8 2441.0,988.0C2447.3,1009.2 2452.6,1032.0 2460.0,1051.0C2467.4,1070.0 2475.9,1089.8 2485.7,1102.0C2495.5,1114.2 2495.7,1123.1 2519.0,1124.4" pathLength="100" fill="none" stroke="#ff8a1a" stroke-width="4.4" opacity="0.9" stroke-dasharray="1.46 98.54"/>
<path d="M2349.5,852.8C2379.5,852.8 2387.9,856.1 2400.0,868.0C2412.1,879.9 2415.2,904.0 2422.0,924.0C2428.8,944.0 2434.7,966.8 2441.0,988.0C2447.3,1009.2 2452.6,1032.0 2460.0,1051.0C2467.4,1070.0 2475.9,1089.8 2485.7,1102.0C2495.5,1114.2 2495.7,1123.1 2519.0,1124.4" pathLength="100" fill="none" stroke="#ff8a1a" stroke-width="4.4" opacity="0.9" stroke-dasharray="0 92.71 7.29 0"/>
<path d="M2532.9,1124.6L2518.4,1116.6V1132.6Z" fill="#ff8a1a" transform="rotate(0 2541.4 1124.6)"/>
<line x1="2349.5" y1="852.8" x2="2377.5" y2="852.8" stroke="#ff8a1a" stroke-width="4.6" />
<path d="M2389.0,852.8L2374.5,844.8V860.8Z" fill="#ff8a1a" transform="rotate(0 2397.5 852.8)"/>
<line x1="2637.5" y1="852.7" x2="2665.1" y2="852.7" stroke="#fa2a50" stroke-width="4.6" />
<path d="M2676.6,852.7L2662.1,844.7V860.7Z" fill="#fa2a50" transform="rotate(0 2685.1 852.7)"/>
<line x1="2781.5" y1="852.6" x2="2808.9" y2="852.6" stroke="#fa2a50" stroke-width="4.6" />
<path d="M2820.4,852.6L2805.9,844.6V860.6Z" fill="#fa2a50" transform="rotate(0 2828.9 852.6)"/>
<line x1="3213.2" y1="852.6" x2="3241.4" y2="852.6" stroke="#fa2a50" stroke-width="4.6" />
<path d="M3252.9,852.6L3238.4,844.6V860.6Z" fill="#fa2a50" transform="rotate(0 3261.4 852.6)"/>
<path d="M3357.6,852.2C3374.3,853.5 3376.7,854.8 3382.0,862.0C3387.3,869.2 3392.5,881.9 3389.4,895.7C3386.3,909.5 3383.3,933.2 3363.7,944.6C3344.1,956.0 3306.7,963.0 3272.0,964.0C3237.3,965.0 3195.5,958.0 3155.8,950.7C3116.1,943.4 3069.6,933.8 3033.6,920.0C2997.6,906.2 2965.6,885.6 2940.0,868.0C2914.4,850.4 2894.8,828.6 2880.0,814.4C2865.2,800.2 2861.8,797.2 2851.0,783.0C2840.2,768.8 2825.1,747.1 2815.2,729.2C2805.2,711.3 2797.0,693.8 2791.3,675.4C2785.6,657.0 2781.0,633.5 2780.8,618.6C2780.6,603.7 2785.3,594.3 2790.0,586.0C2794.7,577.7 2799.0,574.3 2809.0,569.0" fill="none" stroke="#ff8a1a" stroke-width="4.4" opacity="0.28"/>
<path d="M3357.6,852.2C3374.3,853.5 3376.7,854.8 3382.0,862.0C3387.3,869.2 3392.5,881.9 3389.4,895.7C3386.3,909.5 3383.3,933.2 3363.7,944.6C3344.1,956.0 3306.7,963.0 3272.0,964.0C3237.3,965.0 3195.5,958.0 3155.8,950.7C3116.1,943.4 3069.6,933.8 3033.6,920.0C2997.6,906.2 2965.6,885.6 2940.0,868.0C2914.4,850.4 2894.8,828.6 2880.0,814.4C2865.2,800.2 2861.8,797.2 2851.0,783.0C2840.2,768.8 2825.1,747.1 2815.2,729.2C2805.2,711.3 2797.0,693.8 2791.3,675.4C2785.6,657.0 2781.0,633.5 2780.8,618.6C2780.6,603.7 2785.3,594.3 2790.0,586.0C2794.7,577.7 2799.0,574.3 2809.0,569.0" pathLength="100" fill="none" stroke="#ff8a1a" stroke-width="4.4" opacity="0.32" stroke-dasharray="25.00 75.00"/>
<path d="M3357.6,852.2C3374.3,853.5 3376.7,854.8 3382.0,862.0C3387.3,869.2 3392.5,881.9 3389.4,895.7C3386.3,909.5 3383.3,933.2 3363.7,944.6C3344.1,956.0 3306.7,963.0 3272.0,964.0C3237.3,965.0 3195.5,958.0 3155.8,950.7C3116.1,943.4 3069.6,933.8 3033.6,920.0C2997.6,906.2 2965.6,885.6 2940.0,868.0C2914.4,850.4 2894.8,828.6 2880.0,814.4C2865.2,800.2 2861.8,797.2 2851.0,783.0C2840.2,768.8 2825.1,747.1 2815.2,729.2C2805.2,711.3 2797.0,693.8 2791.3,675.4C2785.6,657.0 2781.0,633.5 2780.8,618.6C2780.6,603.7 2785.3,594.3 2790.0,586.0C2794.7,577.7 2799.0,574.3 2809.0,569.0" pathLength="100" fill="none" stroke="#ff8a1a" stroke-width="4.4" opacity="0.32" stroke-dasharray="0 75.00 25.00 0"/>
<path d="M3357.6,852.2C3374.3,853.5 3376.7,854.8 3382.0,862.0C3387.3,869.2 3392.5,881.9 3389.4,895.7C3386.3,909.5 3383.3,933.2 3363.7,944.6C3344.1,956.0 3306.7,963.0 3272.0,964.0C3237.3,965.0 3195.5,958.0 3155.8,950.7C3116.1,943.4 3069.6,933.8 3033.6,920.0C2997.6,906.2 2965.6,885.6 2940.0,868.0C2914.4,850.4 2894.8,828.6 2880.0,814.4C2865.2,800.2 2861.8,797.2 2851.0,783.0C2840.2,768.8 2825.1,747.1 2815.2,729.2C2805.2,711.3 2797.0,693.8 2791.3,675.4C2785.6,657.0 2781.0,633.5 2780.8,618.6C2780.6,603.7 2785.3,594.3 2790.0,586.0C2794.7,577.7 2799.0,574.3 2809.0,569.0" pathLength="100" fill="none" stroke="#ff8a1a" stroke-width="4.4" opacity="0.32" stroke-dasharray="21.46 78.54"/>
<path d="M3357.6,852.2C3374.3,853.5 3376.7,854.8 3382.0,862.0C3387.3,869.2 3392.5,881.9 3389.4,895.7C3386.3,909.5 3383.3,933.2 3363.7,944.6C3344.1,956.0 3306.7,963.0 3272.0,964.0C3237.3,965.0 3195.5,958.0 3155.8,950.7C3116.1,943.4 3069.6,933.8 3033.6,920.0C2997.6,906.2 2965.6,885.6 2940.0,868.0C2914.4,850.4 2894.8,828.6 2880.0,814.4C2865.2,800.2 2861.8,797.2 2851.0,783.0C2840.2,768.8 2825.1,747.1 2815.2,729.2C2805.2,711.3 2797.0,693.8 2791.3,675.4C2785.6,657.0 2781.0,633.5 2780.8,618.6C2780.6,603.7 2785.3,594.3 2790.0,586.0C2794.7,577.7 2799.0,574.3 2809.0,569.0" pathLength="100" fill="none" stroke="#ff8a1a" stroke-width="4.4" opacity="0.32" stroke-dasharray="0 78.54 21.46 0"/>
<path d="M3357.6,852.2C3374.3,853.5 3376.7,854.8 3382.0,862.0C3387.3,869.2 3392.5,881.9 3389.4,895.7C3386.3,909.5 3383.3,933.2 3363.7,944.6C3344.1,956.0 3306.7,963.0 3272.0,964.0C3237.3,965.0 3195.5,958.0 3155.8,950.7C3116.1,943.4 3069.6,933.8 3033.6,920.0C2997.6,906.2 2965.6,885.6 2940.0,868.0C2914.4,850.4 2894.8,828.6 2880.0,814.4C2865.2,800.2 2861.8,797.2 2851.0,783.0C2840.2,768.8 2825.1,747.1 2815.2,729.2C2805.2,711.3 2797.0,693.8 2791.3,675.4C2785.6,657.0 2781.0,633.5 2780.8,618.6C2780.6,603.7 2785.3,594.3 2790.0,586.0C2794.7,577.7 2799.0,574.3 2809.0,569.0" pathLength="100" fill="none" stroke="#ff8a1a" stroke-width="4.4" opacity="0.32" stroke-dasharray="17.92 82.08"/>
<path d="M3357.6,852.2C3374.3,853.5 3376.7,854.8 3382.0,862.0C3387.3,869.2 3392.5,881.9 3389.4,895.7C3386.3,909.5 3383.3,933.2 3363.7,944.6C3344.1,956.0 3306.7,963.0 3272.0,964.0C3237.3,965.0 3195.5,958.0 3155.8,950.7C3116.1,943.4 3069.6,933.8 3033.6,920.0C2997.6,906.2 2965.6,885.6 2940.0,868.0C2914.4,850.4 2894.8,828.6 2880.0,814.4C2865.2,800.2 2861.8,797.2 2851.0,783.0C2840.2,768.8 2825.1,747.1 2815.2,729.2C2805.2,711.3 2797.0,693.8 2791.3,675.4C2785.6,657.0 2781.0,633.5 2780.8,618.6C2780.6,603.7 2785.3,594.3 2790.0,586.0C2794.7,577.7 2799.0,574.3 2809.0,569.0" pathLength="100" fill="none" stroke="#ff8a1a" stroke-width="4.4" opacity="0.32" stroke-dasharray="0 82.08 17.92 0"/>
<path d="M3357.6,852.2C3374.3,853.5 3376.7,854.8 3382.0,862.0C3387.3,869.2 3392.5,881.9 3389.4,895.7C3386.3,909.5 3383.3,933.2 3363.7,944.6C3344.1,956.0 3306.7,963.0 3272.0,964.0C3237.3,965.0 3195.5,958.0 3155.8,950.7C3116.1,943.4 3069.6,933.8 3033.6,920.0C2997.6,906.2 2965.6,885.6 2940.0,868.0C2914.4,850.4 2894.8,828.6 2880.0,814.4C2865.2,800.2 2861.8,797.2 2851.0,783.0C2840.2,768.8 2825.1,747.1 2815.2,729.2C2805.2,711.3 2797.0,693.8 2791.3,675.4C2785.6,657.0 2781.0,633.5 2780.8,618.6C2780.6,603.7 2785.3,594.3 2790.0,586.0C2794.7,577.7 2799.0,574.3 2809.0,569.0" pathLength="100" fill="none" stroke="#ff8a1a" stroke-width="4.4" opacity="0.32" stroke-dasharray="14.37 85.62"/>
<path d="M3357.6,852.2C3374.3,853.5 3376.7,854.8 3382.0,862.0C3387.3,869.2 3392.5,881.9 3389.4,895.7C3386.3,909.5 3383.3,933.2 3363.7,944.6C3344.1,956.0 3306.7,963.0 3272.0,964.0C3237.3,965.0 3195.5,958.0 3155.8,950.7C3116.1,943.4 3069.6,933.8 3033.6,920.0C2997.6,906.2 2965.6,885.6 2940.0,868.0C2914.4,850.4 2894.8,828.6 2880.0,814.4C2865.2,800.2 2861.8,797.2 2851.0,783.0C2840.2,768.8 2825.1,747.1 2815.2,729.2C2805.2,711.3 2797.0,693.8 2791.3,675.4C2785.6,657.0 2781.0,633.5 2780.8,618.6C2780.6,603.7 2785.3,594.3 2790.0,586.0C2794.7,577.7 2799.0,574.3 2809.0,569.0" pathLength="100" fill="none" stroke="#ff8a1a" stroke-width="4.4" opacity="0.32" stroke-dasharray="0 85.62 14.37 0"/>
<path d="M3357.6,852.2C3374.3,853.5 3376.7,854.8 3382.0,862.0C3387.3,869.2 3392.5,881.9 3389.4,895.7C3386.3,909.5 3383.3,933.2 3363.7,944.6C3344.1,956.0 3306.7,963.0 3272.0,964.0C3237.3,965.0 3195.5,958.0 3155.8,950.7C3116.1,943.4 3069.6,933.8 3033.6,920.0C2997.6,906.2 2965.6,885.6 2940.0,868.0C2914.4,850.4 2894.8,828.6 2880.0,814.4C2865.2,800.2 2861.8,797.2 2851.0,783.0C2840.2,768.8 2825.1,747.1 2815.2,729.2C2805.2,711.3 2797.0,693.8 2791.3,675.4C2785.6,657.0 2781.0,633.5 2780.8,618.6C2780.6,603.7 2785.3,594.3 2790.0,586.0C2794.7,577.7 2799.0,574.3 2809.0,569.0" pathLength="100" fill="none" stroke="#ff8a1a" stroke-width="4.4" opacity="0.32" stroke-dasharray="10.83 89.17"/>
<path d="M3357.6,852.2C3374.3,853.5 3376.7,854.8 3382.0,862.0C3387.3,869.2 3392.5,881.9 3389.4,895.7C3386.3,909.5 3383.3,933.2 3363.7,944.6C3344.1,956.0 3306.7,963.0 3272.0,964.0C3237.3,965.0 3195.5,958.0 3155.8,950.7C3116.1,943.4 3069.6,933.8 3033.6,920.0C2997.6,906.2 2965.6,885.6 2940.0,868.0C2914.4,850.4 2894.8,828.6 2880.0,814.4C2865.2,800.2 2861.8,797.2 2851.0,783.0C2840.2,768.8 2825.1,747.1 2815.2,729.2C2805.2,711.3 2797.0,693.8 2791.3,675.4C2785.6,657.0 2781.0,633.5 2780.8,618.6C2780.6,603.7 2785.3,594.3 2790.0,586.0C2794.7,577.7 2799.0,574.3 2809.0,569.0" pathLength="100" fill="none" stroke="#ff8a1a" stroke-width="4.4" opacity="0.32" stroke-dasharray="0 89.17 10.83 0"/>
<path d="M3357.6,852.2C3374.3,853.5 3376.7,854.8 3382.0,862.0C3387.3,869.2 3392.5,881.9 3389.4,895.7C3386.3,909.5 3383.3,933.2 3363.7,944.6C3344.1,956.0 3306.7,963.0 3272.0,964.0C3237.3,965.0 3195.5,958.0 3155.8,950.7C3116.1,943.4 3069.6,933.8 3033.6,920.0C2997.6,906.2 2965.6,885.6 2940.0,868.0C2914.4,850.4 2894.8,828.6 2880.0,814.4C2865.2,800.2 2861.8,797.2 2851.0,783.0C2840.2,768.8 2825.1,747.1 2815.2,729.2C2805.2,711.3 2797.0,693.8 2791.3,675.4C2785.6,657.0 2781.0,633.5 2780.8,618.6C2780.6,603.7 2785.3,594.3 2790.0,586.0C2794.7,577.7 2799.0,574.3 2809.0,569.0" pathLength="100" fill="none" stroke="#ff8a1a" stroke-width="4.4" opacity="0.9" stroke-dasharray="7.29 92.71"/>
<path d="M3357.6,852.2C3374.3,853.5 3376.7,854.8 3382.0,862.0C3387.3,869.2 3392.5,881.9 3389.4,895.7C3386.3,909.5 3383.3,933.2 3363.7,944.6C3344.1,956.0 3306.7,963.0 3272.0,964.0C3237.3,965.0 3195.5,958.0 3155.8,950.7C3116.1,943.4 3069.6,933.8 3033.6,920.0C2997.6,906.2 2965.6,885.6 2940.0,868.0C2914.4,850.4 2894.8,828.6 2880.0,814.4C2865.2,800.2 2861.8,797.2 2851.0,783.0C2840.2,768.8 2825.1,747.1 2815.2,729.2C2805.2,711.3 2797.0,693.8 2791.3,675.4C2785.6,657.0 2781.0,633.5 2780.8,618.6C2780.6,603.7 2785.3,594.3 2790.0,586.0C2794.7,577.7 2799.0,574.3 2809.0,569.0" pathLength="100" fill="none" stroke="#ff8a1a" stroke-width="4.4" opacity="0.9" stroke-dasharray="0 92.71 7.29 0"/>
<path d="M2822.0,564.3L2807.5,556.3V572.3Z" fill="#ff8a1a" transform="rotate(-25 2822.0 564.3)"/>
<line x1="3357.4" y1="852.6" x2="3385.6" y2="852.6" stroke="#ff8a1a" stroke-width="4.6" />
<path d="M3397.1,852.6L3382.6,844.6V860.6Z" fill="#ff8a1a" transform="rotate(0 3405.6 852.6)"/>
<path d="M1485.5,1140H1656" fill="none" stroke="#5aaaf2" stroke-width="4.4" opacity="0.3"/>
<path d="M1485.5,1140H1656" pathLength="100" fill="none" stroke="#5aaaf2" stroke-width="4.4" opacity="0.32" stroke-dasharray="18.00 82.00"/>
<path d="M1485.5,1140H1656" pathLength="100" fill="none" stroke="#5aaaf2" stroke-width="4.4" opacity="0.32" stroke-dasharray="0 82.00 18.00 0"/>
<path d="M1485.5,1140H1656" pathLength="100" fill="none" stroke="#5aaaf2" stroke-width="4.4" opacity="0.32" stroke-dasharray="15.45 84.55"/>
<path d="M1485.5,1140H1656" pathLength="100" fill="none" stroke="#5aaaf2" stroke-width="4.4" opacity="0.32" stroke-dasharray="0 84.55 15.45 0"/>
<path d="M1485.5,1140H1656" pathLength="100" fill="none" stroke="#5aaaf2" stroke-width="4.4" opacity="0.32" stroke-dasharray="12.90 87.10"/>
<path d="M1485.5,1140H1656" pathLength="100" fill="none" stroke="#5aaaf2" stroke-width="4.4" opacity="0.32" stroke-dasharray="0 87.10 12.90 0"/>
<path d="M1485.5,1140H1656" pathLength="100" fill="none" stroke="#5aaaf2" stroke-width="4.4" opacity="0.32" stroke-dasharray="10.35 89.65"/>
<path d="M1485.5,1140H1656" pathLength="100" fill="none" stroke="#5aaaf2" stroke-width="4.4" opacity="0.32" stroke-dasharray="0 89.65 10.35 0"/>
<path d="M1485.5,1140H1656" pathLength="100" fill="none" stroke="#5aaaf2" stroke-width="4.4" opacity="0.32" stroke-dasharray="7.80 92.20"/>
<path d="M1485.5,1140H1656" pathLength="100" fill="none" stroke="#5aaaf2" stroke-width="4.4" opacity="0.32" stroke-dasharray="0 92.20 7.80 0"/>
<path d="M1485.5,1140H1656" pathLength="100" fill="none" stroke="#5aaaf2" stroke-width="4.4" opacity="0.9" stroke-dasharray="5.25 94.75"/>
<path d="M1485.5,1140H1656" pathLength="100" fill="none" stroke="#5aaaf2" stroke-width="4.4" opacity="0.9" stroke-dasharray="0 94.75 5.25 0"/>
<path d="M1669.0,1140.0L1654.5,1132.0V1148.0Z" fill="#5aaaf2" transform="rotate(0 1677.5 1140.0)"/>
<path d="M1485.5,1140.0C1580.5,1140.0 1561.0,1212.2 1656.0,1212.2" fill="none" stroke="#5aaaf2" stroke-width="4.4" opacity="0.35"/>
<path d="M1485.5,1140.0C1580.5,1140.0 1561.0,1212.2 1656.0,1212.2" pathLength="100" fill="none" stroke="#5aaaf2" stroke-width="4.4" opacity="0.32" stroke-dasharray="15.00 85.00"/>
<path d="M1485.5,1140.0C1580.5,1140.0 1561.0,1212.2 1656.0,1212.2" pathLength="100" fill="none" stroke="#5aaaf2" stroke-width="4.4" opacity="0.32" stroke-dasharray="0 78.00 22.00 0"/>
<path d="M1485.5,1140.0C1580.5,1140.0 1561.0,1212.2 1656.0,1212.2" pathLength="100" fill="none" stroke="#5aaaf2" stroke-width="4.4" opacity="0.32" stroke-dasharray="12.88 87.12"/>
<path d="M1485.5,1140.0C1580.5,1140.0 1561.0,1212.2 1656.0,1212.2" pathLength="100" fill="none" stroke="#5aaaf2" stroke-width="4.4" opacity="0.32" stroke-dasharray="0 81.12 18.88 0"/>
<path d="M1485.5,1140.0C1580.5,1140.0 1561.0,1212.2 1656.0,1212.2" pathLength="100" fill="none" stroke="#5aaaf2" stroke-width="4.4" opacity="0.32" stroke-dasharray="10.75 89.25"/>
<path d="M1485.5,1140.0C1580.5,1140.0 1561.0,1212.2 1656.0,1212.2" pathLength="100" fill="none" stroke="#5aaaf2" stroke-width="4.4" opacity="0.32" stroke-dasharray="0 84.23 15.77 0"/>
<path d="M1485.5,1140.0C1580.5,1140.0 1561.0,1212.2 1656.0,1212.2" pathLength="100" fill="none" stroke="#5aaaf2" stroke-width="4.4" opacity="0.32" stroke-dasharray="8.62 91.38"/>
<path d="M1485.5,1140.0C1580.5,1140.0 1561.0,1212.2 1656.0,1212.2" pathLength="100" fill="none" stroke="#5aaaf2" stroke-width="4.4" opacity="0.32" stroke-dasharray="0 87.35 12.65 0"/>
<path d="M1485.5,1140.0C1580.5,1140.0 1561.0,1212.2 1656.0,1212.2" pathLength="100" fill="none" stroke="#5aaaf2" stroke-width="4.4" opacity="0.32" stroke-dasharray="6.50 93.50"/>
<path d="M1485.5,1140.0C1580.5,1140.0 1561.0,1212.2 1656.0,1212.2" pathLength="100" fill="none" stroke="#5aaaf2" stroke-width="4.4" opacity="0.32" stroke-dasharray="0 90.47 9.53 0"/>
<path d="M1485.5,1140.0C1580.5,1140.0 1561.0,1212.2 1656.0,1212.2" pathLength="100" fill="none" stroke="#5aaaf2" stroke-width="4.4" opacity="0.9" stroke-dasharray="4.37 95.62"/>
<path d="M1485.5,1140.0C1580.5,1140.0 1561.0,1212.2 1656.0,1212.2" pathLength="100" fill="none" stroke="#5aaaf2" stroke-width="4.4" opacity="0.9" stroke-dasharray="0 93.58 6.42 0"/>
<path d="M1669.0,1212.2L1654.5,1204.2V1220.2Z" fill="#5aaaf2" transform="rotate(0 1677.5 1212.2)"/>
<path d="M1485.7,1140.3C1502.4,1140.3 1505.3,1144.1 1511.6,1148.8C1517.9,1153.5 1522.7,1160.6 1523.4,1168.5C1524.1,1176.4 1520.2,1186.9 1515.6,1196.1C1511.0,1205.3 1501.0,1215.2 1495.9,1223.7C1490.8,1232.2 1486.0,1239.5 1485.0,1247.3C1484.0,1255.1 1485.7,1264.3 1490.0,1270.5C1494.3,1276.7 1501.0,1282.2 1511.0,1284.2" fill="none" stroke="#5aaaf2" stroke-width="4.4" stroke-linecap="round"/>
<path d="M1524.5,1284.5L1510.0,1276.5V1292.5Z" fill="#5aaaf2" transform="rotate(0 1533.0 1284.5)"/>
<line x1="1629.0" y1="1284.5" x2="1657.5" y2="1284.5" stroke="#5aaaf2" stroke-width="4.6" />
<path d="M1669.0,1284.5L1654.5,1276.5V1292.5Z" fill="#5aaaf2" transform="rotate(0 1677.5 1284.5)"/>
<path d="M2061.0,1140.0C2171.0,1140.0 2122.0,900.3 2232.0,900.3" fill="none" stroke="#5aaaf2" stroke-width="4.4" opacity="0.32"/>
<path d="M2061.0,1140.0C2171.0,1140.0 2122.0,900.3 2232.0,900.3" pathLength="100" fill="none" stroke="#5aaaf2" stroke-width="4.4" opacity="0.32" stroke-dasharray="12.00 88.00"/>
<path d="M2061.0,1140.0C2171.0,1140.0 2122.0,900.3 2232.0,900.3" pathLength="100" fill="none" stroke="#5aaaf2" stroke-width="4.4" opacity="0.32" stroke-dasharray="0 80.00 20.00 0"/>
<path d="M2061.0,1140.0C2171.0,1140.0 2122.0,900.3 2232.0,900.3" pathLength="100" fill="none" stroke="#5aaaf2" stroke-width="4.4" opacity="0.32" stroke-dasharray="10.30 89.70"/>
<path d="M2061.0,1140.0C2171.0,1140.0 2122.0,900.3 2232.0,900.3" pathLength="100" fill="none" stroke="#5aaaf2" stroke-width="4.4" opacity="0.32" stroke-dasharray="0 82.83 17.17 0"/>
<path d="M2061.0,1140.0C2171.0,1140.0 2122.0,900.3 2232.0,900.3" pathLength="100" fill="none" stroke="#5aaaf2" stroke-width="4.4" opacity="0.32" stroke-dasharray="8.60 91.40"/>
<path d="M2061.0,1140.0C2171.0,1140.0 2122.0,900.3 2232.0,900.3" pathLength="100" fill="none" stroke="#5aaaf2" stroke-width="4.4" opacity="0.32" stroke-dasharray="0 85.67 14.33 0"/>
<path d="M2061.0,1140.0C2171.0,1140.0 2122.0,900.3 2232.0,900.3" pathLength="100" fill="none" stroke="#5aaaf2" stroke-width="4.4" opacity="0.32" stroke-dasharray="6.90 93.10"/>
<path d="M2061.0,1140.0C2171.0,1140.0 2122.0,900.3 2232.0,900.3" pathLength="100" fill="none" stroke="#5aaaf2" stroke-width="4.4" opacity="0.32" stroke-dasharray="0 88.50 11.50 0"/>
<path d="M2061.0,1140.0C2171.0,1140.0 2122.0,900.3 2232.0,900.3" pathLength="100" fill="none" stroke="#5aaaf2" stroke-width="4.4" opacity="0.32" stroke-dasharray="5.20 94.80"/>
<path d="M2061.0,1140.0C2171.0,1140.0 2122.0,900.3 2232.0,900.3" pathLength="100" fill="none" stroke="#5aaaf2" stroke-width="4.4" opacity="0.32" stroke-dasharray="0 91.33 8.67 0"/>
<path d="M2061.0,1140.0C2171.0,1140.0 2122.0,900.3 2232.0,900.3" pathLength="100" fill="none" stroke="#5aaaf2" stroke-width="4.4" opacity="0.9" stroke-dasharray="3.50 96.50"/>
<path d="M2061.0,1140.0C2171.0,1140.0 2122.0,900.3 2232.0,900.3" pathLength="100" fill="none" stroke="#5aaaf2" stroke-width="4.4" opacity="0.9" stroke-dasharray="0 94.17 5.83 0"/>
<path d="M2245.0,900.3L2230.5,892.3V908.3Z" fill="#5aaaf2" transform="rotate(0 2253.5 900.3)"/>
<path d="M2061.0,1140.0C2231.0,1140.0 2206.0,996.5 2376.0,996.5" fill="none" stroke="#5aaaf2" stroke-width="4.4" opacity="0.32"/>
<path d="M2061.0,1140.0C2231.0,1140.0 2206.0,996.5 2376.0,996.5" pathLength="100" fill="none" stroke="#5aaaf2" stroke-width="4.4" opacity="0.32" stroke-dasharray="10.00 90.00"/>
<path d="M2061.0,1140.0C2231.0,1140.0 2206.0,996.5 2376.0,996.5" pathLength="100" fill="none" stroke="#5aaaf2" stroke-width="4.4" opacity="0.32" stroke-dasharray="0 82.00 18.00 0"/>
<path d="M2061.0,1140.0C2231.0,1140.0 2206.0,996.5 2376.0,996.5" pathLength="100" fill="none" stroke="#5aaaf2" stroke-width="4.4" opacity="0.32" stroke-dasharray="8.58 91.42"/>
<path d="M2061.0,1140.0C2231.0,1140.0 2206.0,996.5 2376.0,996.5" pathLength="100" fill="none" stroke="#5aaaf2" stroke-width="4.4" opacity="0.32" stroke-dasharray="0 84.55 15.45 0"/>
<path d="M2061.0,1140.0C2231.0,1140.0 2206.0,996.5 2376.0,996.5" pathLength="100" fill="none" stroke="#5aaaf2" stroke-width="4.4" opacity="0.32" stroke-dasharray="7.17 92.83"/>
<path d="M2061.0,1140.0C2231.0,1140.0 2206.0,996.5 2376.0,996.5" pathLength="100" fill="none" stroke="#5aaaf2" stroke-width="4.4" opacity="0.32" stroke-dasharray="0 87.10 12.90 0"/>
<path d="M2061.0,1140.0C2231.0,1140.0 2206.0,996.5 2376.0,996.5" pathLength="100" fill="none" stroke="#5aaaf2" stroke-width="4.4" opacity="0.32" stroke-dasharray="5.75 94.25"/>
<path d="M2061.0,1140.0C2231.0,1140.0 2206.0,996.5 2376.0,996.5" pathLength="100" fill="none" stroke="#5aaaf2" stroke-width="4.4" opacity="0.32" stroke-dasharray="0 89.65 10.35 0"/>
<path d="M2061.0,1140.0C2231.0,1140.0 2206.0,996.5 2376.0,996.5" pathLength="100" fill="none" stroke="#5aaaf2" stroke-width="4.4" opacity="0.32" stroke-dasharray="4.33 95.67"/>
<path d="M2061.0,1140.0C2231.0,1140.0 2206.0,996.5 2376.0,996.5" pathLength="100" fill="none" stroke="#5aaaf2" stroke-width="4.4" opacity="0.32" stroke-dasharray="0 92.20 7.80 0"/>
<path d="M2061.0,1140.0C2231.0,1140.0 2206.0,996.5 2376.0,996.5" pathLength="100" fill="none" stroke="#5aaaf2" stroke-width="4.4" opacity="0.9" stroke-dasharray="2.92 97.08"/>
<path d="M2061.0,1140.0C2231.0,1140.0 2206.0,996.5 2376.0,996.5" pathLength="100" fill="none" stroke="#5aaaf2" stroke-width="4.4" opacity="0.9" stroke-dasharray="0 94.75 5.25 0"/>
<path d="M2389.0,996.5L2374.5,988.5V1004.5Z" fill="#5aaaf2" transform="rotate(0 2397.5 996.5)"/>
<path d="M2061.0,1140.0C2261.0,1140.0 2320.0,1156.8 2520.0,1156.8" fill="none" stroke="#5aaaf2" stroke-width="4.4" opacity="0.32"/>
<path d="M2061.0,1140.0C2261.0,1140.0 2320.0,1156.8 2520.0,1156.8" pathLength="100" fill="none" stroke="#5aaaf2" stroke-width="4.4" opacity="0.32" stroke-dasharray="8.00 92.00"/>
<path d="M2061.0,1140.0C2261.0,1140.0 2320.0,1156.8 2520.0,1156.8" pathLength="100" fill="none" stroke="#5aaaf2" stroke-width="4.4" opacity="0.32" stroke-dasharray="0 85.00 15.00 0"/>
<path d="M2061.0,1140.0C2261.0,1140.0 2320.0,1156.8 2520.0,1156.8" pathLength="100" fill="none" stroke="#5aaaf2" stroke-width="4.4" opacity="0.32" stroke-dasharray="6.87 93.13"/>
<path d="M2061.0,1140.0C2261.0,1140.0 2320.0,1156.8 2520.0,1156.8" pathLength="100" fill="none" stroke="#5aaaf2" stroke-width="4.4" opacity="0.32" stroke-dasharray="0 87.12 12.88 0"/>
<path d="M2061.0,1140.0C2261.0,1140.0 2320.0,1156.8 2520.0,1156.8" pathLength="100" fill="none" stroke="#5aaaf2" stroke-width="4.4" opacity="0.32" stroke-dasharray="5.73 94.27"/>
<path d="M2061.0,1140.0C2261.0,1140.0 2320.0,1156.8 2520.0,1156.8" pathLength="100" fill="none" stroke="#5aaaf2" stroke-width="4.4" opacity="0.32" stroke-dasharray="0 89.25 10.75 0"/>
<path d="M2061.0,1140.0C2261.0,1140.0 2320.0,1156.8 2520.0,1156.8" pathLength="100" fill="none" stroke="#5aaaf2" stroke-width="4.4" opacity="0.32" stroke-dasharray="4.60 95.40"/>
<path d="M2061.0,1140.0C2261.0,1140.0 2320.0,1156.8 2520.0,1156.8" pathLength="100" fill="none" stroke="#5aaaf2" stroke-width="4.4" opacity="0.32" stroke-dasharray="0 91.38 8.62 0"/>
<path d="M2061.0,1140.0C2261.0,1140.0 2320.0,1156.8 2520.0,1156.8" pathLength="100" fill="none" stroke="#5aaaf2" stroke-width="4.4" opacity="0.32" stroke-dasharray="3.47 96.53"/>
<path d="M2061.0,1140.0C2261.0,1140.0 2320.0,1156.8 2520.0,1156.8" pathLength="100" fill="none" stroke="#5aaaf2" stroke-width="4.4" opacity="0.32" stroke-dasharray="0 93.50 6.50 0"/>
<path d="M2061.0,1140.0C2261.0,1140.0 2320.0,1156.8 2520.0,1156.8" pathLength="100" fill="none" stroke="#5aaaf2" stroke-width="4.4" opacity="0.9" stroke-dasharray="2.33 97.67"/>
<path d="M2061.0,1140.0C2261.0,1140.0 2320.0,1156.8 2520.0,1156.8" pathLength="100" fill="none" stroke="#5aaaf2" stroke-width="4.4" opacity="0.9" stroke-dasharray="0 95.62 4.37 0"/>
<path d="M2532.9,1156.8L2518.4,1148.8V1164.8Z" fill="#5aaaf2" transform="rotate(0 2541.4 1156.8)"/>
<line x1="2637.3" y1="1140.5" x2="2665.1" y2="1140.5" stroke="#ffdd40" stroke-width="4.6" />
<path d="M2676.6,1140.5L2662.1,1132.5V1148.5Z" fill="#ffdd40" transform="rotate(0 2685.1 1140.5)"/>
<path d="M3070.3,1140.4C3087.0,1140.4 3086.9,1144.9 3092.0,1152.0C3097.1,1159.1 3101.4,1170.7 3100.8,1183.0C3100.2,1195.3 3097.1,1214.3 3088.6,1225.8C3080.1,1237.3 3067.3,1245.6 3050.0,1252.0C3032.7,1258.4 3018.0,1265.6 2984.7,1264.3C2951.4,1263.0 2887.9,1255.6 2850.2,1244.1C2812.5,1232.6 2785.0,1216.6 2758.5,1195.2C2732.0,1173.8 2708.5,1141.3 2691.2,1115.8C2673.9,1090.3 2664.0,1067.7 2654.6,1042.4C2645.2,1017.1 2636.0,984.1 2634.6,964.0C2633.2,943.9 2640.8,932.1 2646.0,922.0C2651.2,911.9 2658.0,906.8 2666.0,903.5" fill="none" stroke="#4cbd13" stroke-width="4.4" opacity="0.3"/>
<path d="M3070.3,1140.4C3087.0,1140.4 3086.9,1144.9 3092.0,1152.0C3097.1,1159.1 3101.4,1170.7 3100.8,1183.0C3100.2,1195.3 3097.1,1214.3 3088.6,1225.8C3080.1,1237.3 3067.3,1245.6 3050.0,1252.0C3032.7,1258.4 3018.0,1265.6 2984.7,1264.3C2951.4,1263.0 2887.9,1255.6 2850.2,1244.1C2812.5,1232.6 2785.0,1216.6 2758.5,1195.2C2732.0,1173.8 2708.5,1141.3 2691.2,1115.8C2673.9,1090.3 2664.0,1067.7 2654.6,1042.4C2645.2,1017.1 2636.0,984.1 2634.6,964.0C2633.2,943.9 2640.8,932.1 2646.0,922.0C2651.2,911.9 2658.0,906.8 2666.0,903.5" pathLength="100" fill="none" stroke="#4cbd13" stroke-width="4.4" opacity="0.32" stroke-dasharray="28.00 72.00"/>
<path d="M3070.3,1140.4C3087.0,1140.4 3086.9,1144.9 3092.0,1152.0C3097.1,1159.1 3101.4,1170.7 3100.8,1183.0C3100.2,1195.3 3097.1,1214.3 3088.6,1225.8C3080.1,1237.3 3067.3,1245.6 3050.0,1252.0C3032.7,1258.4 3018.0,1265.6 2984.7,1264.3C2951.4,1263.0 2887.9,1255.6 2850.2,1244.1C2812.5,1232.6 2785.0,1216.6 2758.5,1195.2C2732.0,1173.8 2708.5,1141.3 2691.2,1115.8C2673.9,1090.3 2664.0,1067.7 2654.6,1042.4C2645.2,1017.1 2636.0,984.1 2634.6,964.0C2633.2,943.9 2640.8,932.1 2646.0,922.0C2651.2,911.9 2658.0,906.8 2666.0,903.5" pathLength="100" fill="none" stroke="#4cbd13" stroke-width="4.4" opacity="0.32" stroke-dasharray="0 64.00 36.00 0"/>
<path d="M3070.3,1140.4C3087.0,1140.4 3086.9,1144.9 3092.0,1152.0C3097.1,1159.1 3101.4,1170.7 3100.8,1183.0C3100.2,1195.3 3097.1,1214.3 3088.6,1225.8C3080.1,1237.3 3067.3,1245.6 3050.0,1252.0C3032.7,1258.4 3018.0,1265.6 2984.7,1264.3C2951.4,1263.0 2887.9,1255.6 2850.2,1244.1C2812.5,1232.6 2785.0,1216.6 2758.5,1195.2C2732.0,1173.8 2708.5,1141.3 2691.2,1115.8C2673.9,1090.3 2664.0,1067.7 2654.6,1042.4C2645.2,1017.1 2636.0,984.1 2634.6,964.0C2633.2,943.9 2640.8,932.1 2646.0,922.0C2651.2,911.9 2658.0,906.8 2666.0,903.5" pathLength="100" fill="none" stroke="#4cbd13" stroke-width="4.4" opacity="0.32" stroke-dasharray="24.03 75.97"/>
<path d="M3070.3,1140.4C3087.0,1140.4 3086.9,1144.9 3092.0,1152.0C3097.1,1159.1 3101.4,1170.7 3100.8,1183.0C3100.2,1195.3 3097.1,1214.3 3088.6,1225.8C3080.1,1237.3 3067.3,1245.6 3050.0,1252.0C3032.7,1258.4 3018.0,1265.6 2984.7,1264.3C2951.4,1263.0 2887.9,1255.6 2850.2,1244.1C2812.5,1232.6 2785.0,1216.6 2758.5,1195.2C2732.0,1173.8 2708.5,1141.3 2691.2,1115.8C2673.9,1090.3 2664.0,1067.7 2654.6,1042.4C2645.2,1017.1 2636.0,984.1 2634.6,964.0C2633.2,943.9 2640.8,932.1 2646.0,922.0C2651.2,911.9 2658.0,906.8 2666.0,903.5" pathLength="100" fill="none" stroke="#4cbd13" stroke-width="4.4" opacity="0.32" stroke-dasharray="0 69.10 30.90 0"/>
<path d="M3070.3,1140.4C3087.0,1140.4 3086.9,1144.9 3092.0,1152.0C3097.1,1159.1 3101.4,1170.7 3100.8,1183.0C3100.2,1195.3 3097.1,1214.3 3088.6,1225.8C3080.1,1237.3 3067.3,1245.6 3050.0,1252.0C3032.7,1258.4 3018.0,1265.6 2984.7,1264.3C2951.4,1263.0 2887.9,1255.6 2850.2,1244.1C2812.5,1232.6 2785.0,1216.6 2758.5,1195.2C2732.0,1173.8 2708.5,1141.3 2691.2,1115.8C2673.9,1090.3 2664.0,1067.7 2654.6,1042.4C2645.2,1017.1 2636.0,984.1 2634.6,964.0C2633.2,943.9 2640.8,932.1 2646.0,922.0C2651.2,911.9 2658.0,906.8 2666.0,903.5" pathLength="100" fill="none" stroke="#4cbd13" stroke-width="4.4" opacity="0.32" stroke-dasharray="20.07 79.93"/>
<path d="M3070.3,1140.4C3087.0,1140.4 3086.9,1144.9 3092.0,1152.0C3097.1,1159.1 3101.4,1170.7 3100.8,1183.0C3100.2,1195.3 3097.1,1214.3 3088.6,1225.8C3080.1,1237.3 3067.3,1245.6 3050.0,1252.0C3032.7,1258.4 3018.0,1265.6 2984.7,1264.3C2951.4,1263.0 2887.9,1255.6 2850.2,1244.1C2812.5,1232.6 2785.0,1216.6 2758.5,1195.2C2732.0,1173.8 2708.5,1141.3 2691.2,1115.8C2673.9,1090.3 2664.0,1067.7 2654.6,1042.4C2645.2,1017.1 2636.0,984.1 2634.6,964.0C2633.2,943.9 2640.8,932.1 2646.0,922.0C2651.2,911.9 2658.0,906.8 2666.0,903.5" pathLength="100" fill="none" stroke="#4cbd13" stroke-width="4.4" opacity="0.32" stroke-dasharray="0 74.20 25.80 0"/>
<path d="M3070.3,1140.4C3087.0,1140.4 3086.9,1144.9 3092.0,1152.0C3097.1,1159.1 3101.4,1170.7 3100.8,1183.0C3100.2,1195.3 3097.1,1214.3 3088.6,1225.8C3080.1,1237.3 3067.3,1245.6 3050.0,1252.0C3032.7,1258.4 3018.0,1265.6 2984.7,1264.3C2951.4,1263.0 2887.9,1255.6 2850.2,1244.1C2812.5,1232.6 2785.0,1216.6 2758.5,1195.2C2732.0,1173.8 2708.5,1141.3 2691.2,1115.8C2673.9,1090.3 2664.0,1067.7 2654.6,1042.4C2645.2,1017.1 2636.0,984.1 2634.6,964.0C2633.2,943.9 2640.8,932.1 2646.0,922.0C2651.2,911.9 2658.0,906.8 2666.0,903.5" pathLength="100" fill="none" stroke="#4cbd13" stroke-width="4.4" opacity="0.32" stroke-dasharray="16.10 83.90"/>
<path d="M3070.3,1140.4C3087.0,1140.4 3086.9,1144.9 3092.0,1152.0C3097.1,1159.1 3101.4,1170.7 3100.8,1183.0C3100.2,1195.3 3097.1,1214.3 3088.6,1225.8C3080.1,1237.3 3067.3,1245.6 3050.0,1252.0C3032.7,1258.4 3018.0,1265.6 2984.7,1264.3C2951.4,1263.0 2887.9,1255.6 2850.2,1244.1C2812.5,1232.6 2785.0,1216.6 2758.5,1195.2C2732.0,1173.8 2708.5,1141.3 2691.2,1115.8C2673.9,1090.3 2664.0,1067.7 2654.6,1042.4C2645.2,1017.1 2636.0,984.1 2634.6,964.0C2633.2,943.9 2640.8,932.1 2646.0,922.0C2651.2,911.9 2658.0,906.8 2666.0,903.5" pathLength="100" fill="none" stroke="#4cbd13" stroke-width="4.4" opacity="0.32" stroke-dasharray="0 79.30 20.70 0"/>
<path d="M3070.3,1140.4C3087.0,1140.4 3086.9,1144.9 3092.0,1152.0C3097.1,1159.1 3101.4,1170.7 3100.8,1183.0C3100.2,1195.3 3097.1,1214.3 3088.6,1225.8C3080.1,1237.3 3067.3,1245.6 3050.0,1252.0C3032.7,1258.4 3018.0,1265.6 2984.7,1264.3C2951.4,1263.0 2887.9,1255.6 2850.2,1244.1C2812.5,1232.6 2785.0,1216.6 2758.5,1195.2C2732.0,1173.8 2708.5,1141.3 2691.2,1115.8C2673.9,1090.3 2664.0,1067.7 2654.6,1042.4C2645.2,1017.1 2636.0,984.1 2634.6,964.0C2633.2,943.9 2640.8,932.1 2646.0,922.0C2651.2,911.9 2658.0,906.8 2666.0,903.5" pathLength="100" fill="none" stroke="#4cbd13" stroke-width="4.4" opacity="0.32" stroke-dasharray="12.13 87.87"/>
<path d="M3070.3,1140.4C3087.0,1140.4 3086.9,1144.9 3092.0,1152.0C3097.1,1159.1 3101.4,1170.7 3100.8,1183.0C3100.2,1195.3 3097.1,1214.3 3088.6,1225.8C3080.1,1237.3 3067.3,1245.6 3050.0,1252.0C3032.7,1258.4 3018.0,1265.6 2984.7,1264.3C2951.4,1263.0 2887.9,1255.6 2850.2,1244.1C2812.5,1232.6 2785.0,1216.6 2758.5,1195.2C2732.0,1173.8 2708.5,1141.3 2691.2,1115.8C2673.9,1090.3 2664.0,1067.7 2654.6,1042.4C2645.2,1017.1 2636.0,984.1 2634.6,964.0C2633.2,943.9 2640.8,932.1 2646.0,922.0C2651.2,911.9 2658.0,906.8 2666.0,903.5" pathLength="100" fill="none" stroke="#4cbd13" stroke-width="4.4" opacity="0.32" stroke-dasharray="0 84.40 15.60 0"/>
<path d="M3070.3,1140.4C3087.0,1140.4 3086.9,1144.9 3092.0,1152.0C3097.1,1159.1 3101.4,1170.7 3100.8,1183.0C3100.2,1195.3 3097.1,1214.3 3088.6,1225.8C3080.1,1237.3 3067.3,1245.6 3050.0,1252.0C3032.7,1258.4 3018.0,1265.6 2984.7,1264.3C2951.4,1263.0 2887.9,1255.6 2850.2,1244.1C2812.5,1232.6 2785.0,1216.6 2758.5,1195.2C2732.0,1173.8 2708.5,1141.3 2691.2,1115.8C2673.9,1090.3 2664.0,1067.7 2654.6,1042.4C2645.2,1017.1 2636.0,984.1 2634.6,964.0C2633.2,943.9 2640.8,932.1 2646.0,922.0C2651.2,911.9 2658.0,906.8 2666.0,903.5" pathLength="100" fill="none" stroke="#4cbd13" stroke-width="4.4" opacity="0.9" stroke-dasharray="8.17 91.83"/>
<path d="M3070.3,1140.4C3087.0,1140.4 3086.9,1144.9 3092.0,1152.0C3097.1,1159.1 3101.4,1170.7 3100.8,1183.0C3100.2,1195.3 3097.1,1214.3 3088.6,1225.8C3080.1,1237.3 3067.3,1245.6 3050.0,1252.0C3032.7,1258.4 3018.0,1265.6 2984.7,1264.3C2951.4,1263.0 2887.9,1255.6 2850.2,1244.1C2812.5,1232.6 2785.0,1216.6 2758.5,1195.2C2732.0,1173.8 2708.5,1141.3 2691.2,1115.8C2673.9,1090.3 2664.0,1067.7 2654.6,1042.4C2645.2,1017.1 2636.0,984.1 2634.6,964.0C2633.2,943.9 2640.8,932.1 2646.0,922.0C2651.2,911.9 2658.0,906.8 2666.0,903.5" pathLength="100" fill="none" stroke="#4cbd13" stroke-width="4.4" opacity="0.9" stroke-dasharray="0 89.50 10.50 0"/>
<path d="M2678.3,899.8L2663.8,891.8V907.8Z" fill="#4cbd13" transform="rotate(-22 2678.3 899.8)"/>
<circle cx="731.0" cy="320.8" r="4.2" fill="none" stroke="#c873f7" stroke-width="2.8"/>
<circle cx="1017.6" cy="320.8" r="4.2" fill="none" stroke="#ffdd40" stroke-width="2.8"/>
<circle cx="1063.0" cy="284.3" r="3.2" fill="none" stroke="#c873f7" stroke-width="2.1"/>
<circle cx="1257.6" cy="284.3" r="3.0" fill="none" stroke="#ff8a1a" stroke-width="2.0"/>
<circle cx="1302.3" cy="320.8" r="4.2" fill="none" stroke="#c873f7" stroke-width="2.8"/>
<circle cx="1588.6" cy="320.8" r="4.3" fill="none" stroke="#5aaaf2" stroke-width="2.6"/>
<circle cx="1639.0" cy="320.8" r="4.2" fill="none" stroke="#c873f7" stroke-width="2.8"/>
<circle cx="1925.5" cy="320.8" r="4.3" fill="none" stroke="#22d8d8" stroke-width="2.6"/>
<circle cx="2032.8" cy="321.4" r="4.1" fill="none" stroke="#c873f7" stroke-width="2.6"/>
<circle cx="2103.6" cy="321.4" r="4.1" fill="none" stroke="#ffdd40" stroke-width="2.6"/>
<circle cx="2208.0" cy="320.8" r="4.2" fill="none" stroke="#c873f7" stroke-width="2.8"/>
<circle cx="2494.4" cy="321.1" r="4.3" fill="none" stroke="#ffdd40" stroke-width="2.6"/>
<circle cx="2494.4" cy="350.6" r="4.3" fill="none" stroke="#5aaaf2" stroke-width="2.6"/>
<circle cx="2599.6" cy="320.9" r="4.0" fill="none" stroke="#c873f7" stroke-width="2.5"/>
<circle cx="2670.5" cy="320.9" r="4.0" fill="none" stroke="#fa2a50" stroke-width="2.5"/>
<circle cx="2718.7" cy="320.9" r="4.0" fill="none" stroke="#c873f7" stroke-width="2.5"/>
<circle cx="2789.6" cy="320.9" r="4.0" fill="none" stroke="#fa2a50" stroke-width="2.5"/>
<circle cx="2837.8" cy="320.9" r="4.0" fill="none" stroke="#c873f7" stroke-width="2.5"/>
<circle cx="2908.7" cy="320.9" r="4.0" fill="none" stroke="#fa2a50" stroke-width="2.5"/>
<circle cx="2971.5" cy="320.9" r="4.0" fill="none" stroke="#c873f7" stroke-width="2.5"/>
<circle cx="3042.4" cy="320.9" r="4.0" fill="none" stroke="#fa2a50" stroke-width="2.5"/>
<circle cx="3123.7" cy="320.9" r="4.0" fill="none" stroke="#c873f7" stroke-width="2.5"/>
<circle cx="3194.6" cy="320.9" r="4.0" fill="none" stroke="#fa2a50" stroke-width="2.5"/>
<circle cx="3314.7" cy="285.9" r="4.1" fill="none" stroke="#c873f7" stroke-width="2.6"/>
<circle cx="3314.7" cy="309.5" r="3.9" fill="none" stroke="#6f5588" stroke-width="2.2"/>
<circle cx="3314.7" cy="333.0" r="4.1" fill="none" stroke="#fa2a50" stroke-width="2.6"/>
<circle cx="3314.7" cy="356.5" r="3.9" fill="none" stroke="#a09040" stroke-width="2.2"/>
<circle cx="1389.6" cy="564.4" r="5.7" fill="none" stroke="#ffdd40" stroke-width="3.2"/>
<circle cx="1629.6" cy="564.4" r="5.7" fill="#2c3540" stroke="#5aaaf2" stroke-width="3.2"/>
<circle cx="813.5" cy="708.3" r="5.7" fill="none" stroke="#ffdd40" stroke-width="3.2"/>
<circle cx="813.5" cy="780.6" r="5.7" fill="none" stroke="#c873f7" stroke-width="3.2"/>
<circle cx="813.5" cy="852.8" r="5.7" fill="none" stroke="#ff8a1a" stroke-width="3.2"/>
<circle cx="1197.0" cy="708.3" r="7.6" fill="#ff8a1a"/>
<circle cx="1389.5" cy="852.8" r="7.6" fill="#ff8a1a"/>
<circle cx="1389.5" cy="900.3" r="5.7" fill="#5a3a1a" stroke="#ff8a1a" stroke-width="3.2"/>
<circle cx="1485.5" cy="852.8" r="5.7" fill="#5a3a1a" stroke="#ff8a1a" stroke-width="3.2"/>
<circle cx="1677.5" cy="708.3" r="5.7" fill="none" stroke="#ffdd40" stroke-width="3.2"/>
<circle cx="1677.5" cy="780.6" r="5.7" fill="none" stroke="#c873f7" stroke-width="3.2"/>
<circle cx="1677.5" cy="852.8" r="5.7" fill="none" stroke="#ff8a1a" stroke-width="3.2"/>
<circle cx="2061.0" cy="708.3" r="7.6" fill="#ff8a1a"/>
<circle cx="669.5" cy="996.5" r="5.7" fill="none" stroke="#ffdd40" stroke-width="3.2"/>
<circle cx="669.5" cy="1068.7" r="5.7" fill="none" stroke="#c873f7" stroke-width="3.2"/>
<circle cx="669.5" cy="1140.5" r="5.7" fill="none" stroke="#ff8a1a" stroke-width="3.2"/>
<circle cx="1053.0" cy="996.5" r="5.7" fill="none" stroke="#f0f0f0" stroke-width="3.2"/>
<circle cx="1101.5" cy="996.5" r="5.7" fill="#5a3a1a" stroke="#ff8a1a" stroke-width="3.2"/>
<circle cx="1197.0" cy="996.5" r="5.7" fill="#5a3a1a" stroke="#ff8a1a" stroke-width="3.2"/>
<circle cx="1245.0" cy="1140.0" r="7.6" fill="#5aaaf2"/>
<circle cx="1485.5" cy="1140.0" r="7.6" fill="#5aaaf2"/>
<circle cx="1533.0" cy="1284.5" r="7.6" fill="#5aaaf2"/>
<circle cx="1629.0" cy="1284.5" r="7.6" fill="#5aaaf2"/>
<circle cx="1677.5" cy="1140.3" r="7.6" fill="#ffdd40"/>
<circle cx="1677.5" cy="1212.6" r="7.6" fill="#c873f7"/>
<circle cx="1677.5" cy="1284.8" r="7.6" fill="#ff8a1a"/>
<circle cx="2061.0" cy="1140.3" r="7.6" fill="#5aaaf2"/>
<circle cx="2349.5" cy="564.3" r="7.6" fill="#ffdd40"/>
<circle cx="2397.5" cy="564.3" r="7.6" fill="#ffdd40"/>
<circle cx="2493.5" cy="564.3" r="5.7" fill="#5a4a10" stroke="#ffdd40" stroke-width="3.2"/>
<circle cx="2541.5" cy="564.3" r="5.7" fill="#3a3418" stroke="#ffdd40" stroke-width="3.2"/>
<circle cx="2253.5" cy="852.8" r="7.6" fill="#ff8a1a"/>
<circle cx="2349.5" cy="852.8" r="7.6" fill="#ff8a1a"/>
<circle cx="2253.5" cy="900.3" r="7.6" fill="#5aaaf2"/>
<circle cx="2397.5" cy="852.8" r="7.6" fill="#ff8a1a"/>
<circle cx="2637.5" cy="852.8" r="5.7" fill="#a01830" stroke="#fa2a50" stroke-width="3.2"/>
<circle cx="2397.5" cy="996.5" r="7.6" fill="#5aaaf2"/>
<circle cx="2397.5" cy="1044.7" r="5.1" fill="none" stroke="#8a2038" stroke-width="3"/>
<circle cx="2685.1" cy="852.6" r="5.7" fill="#a01830" stroke="#fa2a50" stroke-width="3.2"/>
<circle cx="2781.5" cy="852.6" r="5.7" fill="#a01830" stroke="#fa2a50" stroke-width="3.2"/>
<circle cx="2685.1" cy="900.3" r="7.6" fill="#4cbd13"/>
<circle cx="2828.9" cy="852.6" r="5.7" fill="#a01830" stroke="#fa2a50" stroke-width="3.2"/>
<circle cx="3213.2" cy="852.6" r="5.7" fill="#a01830" stroke="#fa2a50" stroke-width="3.2"/>
<circle cx="2829.3" cy="996.4" r="5.7" fill="none" stroke="#ffdd40" stroke-width="3.2"/>
<circle cx="3213.2" cy="996.4" r="5.7" fill="none" stroke="#5aaaf2" stroke-width="3.2"/>
<circle cx="3213.2" cy="1044.2" r="5.7" fill="none" stroke="#c8dc20" stroke-width="3.2"/>
<circle cx="3261.4" cy="852.6" r="5.7" fill="#5a3a1a" stroke="#ff8a1a" stroke-width="3.2"/>
<circle cx="3357.4" cy="852.6" r="5.7" fill="#5a3a1a" stroke="#ff8a1a" stroke-width="3.2"/>
<circle cx="3405.6" cy="852.6" r="5.7" fill="#a01830" stroke="#fa2a50" stroke-width="3.2"/>
<circle cx="2829.3" cy="516.6" r="5.3" fill="none" stroke="#8a7a30" stroke-width="3"/>
<circle cx="2829.3" cy="564.4" r="5.7" fill="#8a4a10" stroke="#ff8a1a" stroke-width="3.2"/>
<circle cx="2829.3" cy="708.6" r="5.7" fill="none" stroke="#d8d8d8" stroke-width="3.2"/>
<circle cx="3213.2" cy="564.4" r="5.7" fill="#a01830" stroke="#fa2a50" stroke-width="3.2"/>
<circle cx="3213.2" cy="708.6" r="5.7" fill="none" stroke="#fa2a50" stroke-width="3.2"/>
<circle cx="2541.4" cy="1124.6" r="7.6" fill="#ff8a1a"/>
<circle cx="2541.4" cy="1156.8" r="7.6" fill="#5aaaf2"/>
<circle cx="2637.3" cy="1140.5" r="7.6" fill="#ffdd40"/>
<circle cx="2685.1" cy="1140.5" r="7.6" fill="#4cbd13"/>
<circle cx="2685.1" cy="1212.6" r="5.7" fill="none" stroke="#ff8a1a" stroke-width="3.2"/>
<circle cx="3069.0" cy="1140.5" r="7.6" fill="#4cbd13"/>
</g>
<rect x="10.0" y="1384.0" width="3435.8" height="554.2" fill="#7c7c7c" rx="7"/>
<rect x="14.2" y="1388.3" width="3427.6" height="545.6" fill="#0b0b0b" rx="4"/>
<rect x="14.2" y="1915.5" width="3427.6" height="18.4" fill="#0b0b0b"/>
<rect x="466.0" y="1924.8" width="2225.0" height="9.1" fill="#4e4e4e"/>
<rect x="14.2" y="1388.3" width="383.0" height="545.6" fill="#404040"/>
<rect x="14.2" y="1405.5" width="383.0" height="9.6" fill="#828282"/>
<rect x="14.2" y="1907.8" width="383.0" height="8.2" fill="#828282"/>
<rect x="14.2" y="1415.1" width="58.5" height="492.7" fill="#3c3c3c"/>
<rect x="72.7" y="1415.1" width="324.5" height="492.7" fill="#555555"/>
<rect x="396.8" y="1388.3" width="4.4" height="545.6" fill="#0a0a0a"/>
<rect x="401.2" y="1388.3" width="59.0" height="545.6" fill="#404040"/>
<rect x="401.2" y="1405.6" width="59.0" height="9.4" fill="#ff5a00"/>
<rect x="401.2" y="1907.8" width="59.0" height="8.0" fill="#ff5a00"/>
<path d="M30,1442L38,1447.5L43.6,1436.6L49.4,1447.5L57.4,1442L53.5,1453.2H34Z" fill="#b4b4b4"/>
<rect x="33.8" y="1454.6" width="20.0" height="2.8" fill="#b4b4b4"/>
<text x="0" y="0" font-size="24" fill="#ffffff" text-anchor="middle" transform="translate(53.2 1661.5) rotate(-90)" textLength="98" lengthAdjust="spacingAndGlyphs">PROJECT</text>
<circle cx="43.4" cy="1839.4" r="10.0" fill="#dcdcdc"/>
<line x1="43.4" y1="1830.4" x2="43.4" y2="1837.9" stroke="#404040" stroke-width="2.6" />
<circle cx="35.8" cy="1882.2" r="4.6" fill="#ff8a1a"/>
<line x1="39.4" y1="1882.2" x2="49.4" y2="1882.2" stroke="#ff8a1a" stroke-width="2.4" />
<path d="M47.9,1877.2L55.4,1882.2L47.9,1887.2Z" fill="#ff8a1a"/>
<rect x="417.6" y="1434.0" width="25.8" height="25.0" fill="#d0d0d0"/>
<rect x="423.5" y="1433.5" width="3.7" height="14.7" fill="#404040"/>
<rect x="433.9" y="1433.5" width="4.0" height="14.7" fill="#404040"/>
<line x1="425.6" y1="1447.8" x2="425.6" y2="1459.5" stroke="#404040" stroke-width="1.4" />
<line x1="435.5" y1="1447.8" x2="435.5" y2="1459.5" stroke="#404040" stroke-width="1.4" />
<text x="0" y="0" font-size="24" fill="#ffffff" text-anchor="middle" transform="translate(439.2 1653.0) rotate(-90)" textLength="302" lengthAdjust="spacingAndGlyphs">COMMUNICATION THEORY</text>
<circle cx="430.6" cy="1839.4" r="10.0" fill="#dcdcdc"/>
<line x1="430.6" y1="1830.4" x2="430.6" y2="1837.9" stroke="#404040" stroke-width="2.6" />
<circle cx="422.6" cy="1882.2" r="3.6" fill="none" stroke="#dcdcdc" stroke-width="2.2"/>
<line x1="426.6" y1="1882.2" x2="436.6" y2="1882.2" stroke="#dcdcdc" stroke-width="2.4" />
<path d="M435.1,1877.2L442.6,1882.2L435.1,1887.2Z" fill="#dcdcdc"/>
<rect x="79.5" y="1424.0" width="152.0" height="153.0" fill="#2d2d2d" rx="6" stroke="#a8a8a8" stroke-width="2"/>
<path d="M92.8,1463.7L96.0,1464.1L99.2,1465.3L102.5,1467.3L105.7,1469.9L108.9,1473.3L112.1,1477.2L115.4,1481.5L118.6,1486.3L121.8,1491.2L125.0,1496.4L128.3,1501.5L131.5,1506.4L134.7,1511.2L137.9,1515.5L141.2,1519.4L144.4,1522.8L147.6,1525.4L150.8,1527.4L154.1,1528.6L157.3,1529.0L160.5,1528.6L163.8,1527.4L167.0,1525.4L170.2,1522.8L173.4,1519.4L176.7,1515.5L179.9,1511.2L183.1,1506.4L186.3,1501.5L189.6,1496.4L192.8,1491.2L196.0,1486.3L199.2,1481.5L202.4,1477.2L205.7,1473.3L208.9,1469.9L212.1,1467.3L215.3,1465.3L218.6,1464.1L221.8,1463.7" fill="none" stroke="#ff8a1a" stroke-width="2.4"/>
<circle cx="118.9" cy="1486.1" r="5.6" fill="#ffffff"/>
<circle cx="146.0" cy="1558.7" r="7.8" fill="#6ee8ff"/>
<line x1="146.0" y1="1558.7" x2="164.9" y2="1558.7" stroke="#6ee8ff" stroke-width="3.7840000000000003" />
<path d="M163.2,1550.8L176.1,1558.7L163.2,1566.6Z" fill="#6ee8ff"/>
<rect x="238.3" y="1424.0" width="152.0" height="153.0" fill="#2d2d2d" rx="6"/>
<path d="M251.6,1463.7L254.8,1464.1L258.1,1465.3L261.3,1467.3L264.5,1469.9L267.7,1473.3L271.0,1477.2L274.2,1481.5L277.4,1486.3L280.6,1491.2L283.9,1496.4L287.1,1501.5L290.3,1506.4L293.5,1511.2L296.8,1515.5L300.0,1519.4L303.2,1522.8L306.4,1525.4L309.7,1527.4L312.9,1528.6L316.1,1529.0L319.3,1528.6L322.6,1527.4L325.8,1525.4L329.0,1522.8L332.2,1519.4L335.5,1515.5L338.7,1511.2L341.9,1506.4L345.1,1501.5L348.4,1496.4L351.6,1491.2L354.8,1486.3L358.0,1481.5L361.2,1477.2L364.5,1473.3L367.7,1469.9L370.9,1467.3L374.2,1465.3L377.4,1464.1L380.6,1463.7" fill="none" stroke="#ff8a1a" stroke-width="2.4"/>
<circle cx="291.7" cy="1512.6" r="5.6" fill="#ffffff"/>
<circle cx="304.8" cy="1558.7" r="7.8" fill="#2fa8cc"/>
<line x1="304.8" y1="1558.7" x2="323.7" y2="1558.7" stroke="#2fa8cc" stroke-width="3.7840000000000003" />
<path d="M322.0,1550.8L334.9,1558.7L322.0,1566.6Z" fill="#2fa8cc"/>
<rect x="79.5" y="1584.2" width="152.0" height="153.0" fill="#2d2d2d" rx="6"/>
<path d="M92.8,1623.9L96.0,1624.3L99.2,1625.5L102.5,1627.5L105.7,1630.1L108.9,1633.5L112.1,1637.4L115.4,1641.7L118.6,1646.5L121.8,1651.4L125.0,1656.6L128.3,1661.7L131.5,1666.6L134.7,1671.4L137.9,1675.7L141.2,1679.6L144.4,1683.0L147.6,1685.6L150.8,1687.6L154.1,1688.8L157.3,1689.2L160.5,1688.8L163.8,1687.6L167.0,1685.6L170.2,1683.0L173.4,1679.6L176.7,1675.7L179.9,1671.4L183.1,1666.6L186.3,1661.7L189.6,1656.6L192.8,1651.4L196.0,1646.5L199.2,1641.7L202.4,1637.4L205.7,1633.5L208.9,1630.1L212.1,1627.5L215.3,1625.5L218.6,1624.3L221.8,1623.9" fill="none" stroke="#ff8a1a" stroke-width="2.4"/>
<circle cx="124.8" cy="1658.9" r="5.6" fill="#ffffff"/>
<circle cx="146.0" cy="1718.9" r="7.8" fill="#35d0f5"/>
<line x1="146.0" y1="1718.9" x2="164.9" y2="1718.9" stroke="#35d0f5" stroke-width="3.7840000000000003" />
<path d="M163.2,1711.0L176.1,1718.9L163.2,1726.8Z" fill="#35d0f5"/>
<rect x="238.3" y="1584.2" width="152.0" height="153.0" fill="#434343" rx="6"/>
<path d="M304.3,1661.2H324.3M314.3,1651.2V1671.2" fill="none" stroke="#9a9a9a" stroke-width="4.4"/>
<rect x="79.5" y="1745.6" width="152.0" height="153.0" fill="#2d2d2d" rx="6"/>
<path d="M92.8,1785.3L96.0,1785.7L99.2,1786.9L102.5,1788.9L105.7,1791.5L108.9,1794.9L112.1,1798.8L115.4,1803.1L118.6,1807.9L121.8,1812.8L125.0,1818.0L128.3,1823.1L131.5,1828.0L134.7,1832.8L137.9,1837.1L141.2,1841.0L144.4,1844.4L147.6,1847.0L150.8,1849.0L154.1,1850.2L157.3,1850.6L160.5,1850.2L163.8,1849.0L167.0,1847.0L170.2,1844.4L173.4,1841.0L176.7,1837.1L179.9,1832.8L183.1,1828.0L186.3,1823.1L189.6,1818.0L192.8,1812.8L196.0,1807.9L199.2,1803.1L202.4,1798.8L205.7,1794.9L208.9,1791.5L212.1,1788.9L215.3,1786.9L218.6,1785.7L221.8,1785.3" fill="none" stroke="#ff8a1a" stroke-width="2.4"/>
<circle cx="170.5" cy="1844.0" r="5.6" fill="#ffffff"/>
<circle cx="146.0" cy="1880.3" r="7.8" fill="#2a9ab8"/>
<line x1="146.0" y1="1880.3" x2="164.9" y2="1880.3" stroke="#2a9ab8" stroke-width="3.7840000000000003" />
<path d="M163.2,1872.4L176.1,1880.3L163.2,1888.2Z" fill="#2a9ab8"/>
<rect x="238.3" y="1745.6" width="152.0" height="153.0" fill="#434343" rx="6"/>
<path d="M304.3,1822.6H324.3M314.3,1812.6V1832.6" fill="none" stroke="#9a9a9a" stroke-width="4.4"/>
<rect x="479.8" y="1432.3" width="20.2" height="19.5" fill="#f2d03c"/>
<path d="M479.0,1660.8H500.0M489.5,1650.3V1671.3" fill="none" stroke="#8a8a8a" stroke-width="4.2"/>
<rect x="513.3" y="1415.0" width="647.5" height="492.0" fill="#555555" rx="11"/>
<path d="M524.3,1415H572.0999999999999V1907H524.3Q513.3,1907 513.3,1896V1426Q513.3,1415 524.3,1415Z" fill="#404040"/>
<path d="M547.41,1434.94A9.60,9.60 0 1 1 536.39,1434.94" fill="none" stroke="#ff8a1a" stroke-width="3.2" stroke-linecap="round"/>
<line x1="541.9" y1="1430.6" x2="541.9" y2="1442.8" stroke="#ff8a1a" stroke-width="3.2" stroke-linecap="round"/>
<path d="M528.4,1482.85Q528.4,1478.5 532.75,1478.5H538.55L542.175,1482.125H551.6V1485.75H534.1999999999999L528.4,1500.25Z" fill="#707070"/>
<path d="M534.925,1487.2H556.675L551.6,1501.7H529.56Z" fill="#8e8e8e"/>
<circle cx="541.9" cy="1839.4" r="10.0" fill="#dcdcdc"/>
<line x1="541.9" y1="1830.4" x2="541.9" y2="1837.9" stroke="#404040" stroke-width="2.6" />
<circle cx="534.3" cy="1882.2" r="4.6" fill="#dcdcdc"/>
<line x1="537.9" y1="1882.2" x2="547.9" y2="1882.2" stroke="#dcdcdc" stroke-width="2.4" />
<path d="M546.4,1877.2L553.9,1882.2L546.4,1887.2Z" fill="#dcdcdc"/>
<text x="0" y="0" font-size="24" fill="#ffffff" text-anchor="middle" transform="translate(550.4 1646.5) rotate(-90)" textLength="240" lengthAdjust="spacingAndGlyphs">Communication Theory</text>
<rect x="530.0" y="1785.5" width="24.0" height="21.0" fill="#7a4a1a" rx="3.5" stroke="#ff8a1a" stroke-width="2.4"/>
<rect x="530.0" y="1785.5" width="24.0" height="5.5" fill="#ff8a1a" rx="2"/>
<rect x="578.0" y="1420.7" width="577.5" height="316.9" fill="#0b0b0b" rx="6"/>
<g clip-path="url(#clipGD)">
<line x1="585.6" y1="1420.7" x2="585.6" y2="1737.6" stroke="#1f1f1f" stroke-width="1.6" />
<line x1="609.0" y1="1420.7" x2="609.0" y2="1737.6" stroke="#1f1f1f" stroke-width="1.6" />
<line x1="632.4" y1="1420.7" x2="632.4" y2="1737.6" stroke="#1f1f1f" stroke-width="1.6" />
<line x1="655.9" y1="1420.7" x2="655.9" y2="1737.6" stroke="#1f1f1f" stroke-width="1.6" />
<line x1="679.3" y1="1420.7" x2="679.3" y2="1737.6" stroke="#1f1f1f" stroke-width="1.6" />
<line x1="702.7" y1="1420.7" x2="702.7" y2="1737.6" stroke="#1f1f1f" stroke-width="1.6" />
<line x1="726.1" y1="1420.7" x2="726.1" y2="1737.6" stroke="#1f1f1f" stroke-width="1.6" />
<line x1="749.5" y1="1420.7" x2="749.5" y2="1737.6" stroke="#1f1f1f" stroke-width="1.6" />
<line x1="773.0" y1="1420.7" x2="773.0" y2="1737.6" stroke="#1f1f1f" stroke-width="1.6" />
<line x1="796.4" y1="1420.7" x2="796.4" y2="1737.6" stroke="#1f1f1f" stroke-width="1.6" />
<line x1="819.8" y1="1420.7" x2="819.8" y2="1737.6" stroke="#1f1f1f" stroke-width="1.6" />
<line x1="843.2" y1="1420.7" x2="843.2" y2="1737.6" stroke="#1f1f1f" stroke-width="1.6" />
<line x1="866.6" y1="1420.7" x2="866.6" y2="1737.6" stroke="#1f1f1f" stroke-width="1.6" />
<line x1="890.1" y1="1420.7" x2="890.1" y2="1737.6" stroke="#1f1f1f" stroke-width="1.6" />
<line x1="913.5" y1="1420.7" x2="913.5" y2="1737.6" stroke="#1f1f1f" stroke-width="1.6" />
<line x1="936.9" y1="1420.7" x2="936.9" y2="1737.6" stroke="#1f1f1f" stroke-width="1.6" />
<line x1="960.3" y1="1420.7" x2="960.3" y2="1737.6" stroke="#1f1f1f" stroke-width="1.6" />
<line x1="983.7" y1="1420.7" x2="983.7" y2="1737.6" stroke="#1f1f1f" stroke-width="1.6" />
<line x1="1007.2" y1="1420.7" x2="1007.2" y2="1737.6" stroke="#1f1f1f" stroke-width="1.6" />
<line x1="1030.6" y1="1420.7" x2="1030.6" y2="1737.6" stroke="#1f1f1f" stroke-width="1.6" />
<line x1="1054.0" y1="1420.7" x2="1054.0" y2="1737.6" stroke="#1f1f1f" stroke-width="1.6" />
<line x1="1077.4" y1="1420.7" x2="1077.4" y2="1737.6" stroke="#1f1f1f" stroke-width="1.6" />
<line x1="1100.8" y1="1420.7" x2="1100.8" y2="1737.6" stroke="#1f1f1f" stroke-width="1.6" />
<line x1="1124.3" y1="1420.7" x2="1124.3" y2="1737.6" stroke="#1f1f1f" stroke-width="1.6" />
<line x1="1147.7" y1="1420.7" x2="1147.7" y2="1737.6" stroke="#1f1f1f" stroke-width="1.6" />
<line x1="578.0" y1="1428.0" x2="1155.5" y2="1428.0" stroke="#1f1f1f" stroke-width="1.6" />
<line x1="578.0" y1="1451.4" x2="1155.5" y2="1451.4" stroke="#1f1f1f" stroke-width="1.6" />
<line x1="578.0" y1="1474.8" x2="1155.5" y2="1474.8" stroke="#1f1f1f" stroke-width="1.6" />
<line x1="578.0" y1="1498.3" x2="1155.5" y2="1498.3" stroke="#1f1f1f" stroke-width="1.6" />
<line x1="578.0" y1="1521.7" x2="1155.5" y2="1521.7" stroke="#1f1f1f" stroke-width="1.6" />
<line x1="578.0" y1="1545.1" x2="1155.5" y2="1545.1" stroke="#1f1f1f" stroke-width="1.6" />
<line x1="578.0" y1="1568.5" x2="1155.5" y2="1568.5" stroke="#1f1f1f" stroke-width="1.6" />
<line x1="578.0" y1="1591.9" x2="1155.5" y2="1591.9" stroke="#1f1f1f" stroke-width="1.6" />
<line x1="578.0" y1="1615.4" x2="1155.5" y2="1615.4" stroke="#1f1f1f" stroke-width="1.6" />
<line x1="578.0" y1="1638.8" x2="1155.5" y2="1638.8" stroke="#1f1f1f" stroke-width="1.6" />
<line x1="578.0" y1="1662.2" x2="1155.5" y2="1662.2" stroke="#1f1f1f" stroke-width="1.6" />
<line x1="578.0" y1="1685.6" x2="1155.5" y2="1685.6" stroke="#1f1f1f" stroke-width="1.6" />
<line x1="578.0" y1="1709.0" x2="1155.5" y2="1709.0" stroke="#1f1f1f" stroke-width="1.6" />
<line x1="578.0" y1="1732.5" x2="1155.5" y2="1732.5" stroke="#1f1f1f" stroke-width="1.6" />
<rect x="570.0" y="1526.1" width="515.1" height="147.3" fill="#1e4a72" rx="4" opacity="0.45"/>
<rect x="749.1" y="1508.6" width="45.7" height="45.3" fill="url(#gm0)" rx="3" opacity="0.93"/>
<rect x="655.9" y="1555.0" width="69.2" height="45.7" fill="url(#gm1)" rx="3" opacity="0.93"/>
<rect x="749.1" y="1579.0" width="22.8" height="21.7" fill="url(#gm2)" rx="3" opacity="0.93"/>
<rect x="796.3" y="1555.0" width="69.6" height="45.7" fill="url(#gm3)" rx="3" opacity="0.93"/>
<rect x="632.3" y="1602.6" width="69.6" height="45.3" fill="url(#gm4)" rx="3" opacity="0.93"/>
<rect x="703.5" y="1602.6" width="21.7" height="20.9" fill="url(#gm5)" rx="3" opacity="0.93"/>
<rect x="726.3" y="1625.4" width="45.7" height="45.7" fill="url(#gm6)" rx="3" stroke="#3a4a58" stroke-width="1" opacity="0.93"/>
<rect x="773.1" y="1649.4" width="21.7" height="21.7" fill="url(#gm7)" rx="3" opacity="0.93"/>
<rect x="796.3" y="1625.4" width="69.6" height="45.7" fill="url(#gm8)" rx="3" opacity="0.93"/>
<rect x="889.9" y="1532.2" width="22.1" height="21.7" fill="url(#gm9)" rx="3" opacity="0.93"/>
<rect x="913.5" y="1532.2" width="22.1" height="21.7" fill="url(#gm10)" rx="3" opacity="0.93"/>
<rect x="937.1" y="1532.2" width="21.7" height="21.7" fill="url(#gm11)" rx="3" opacity="0.93"/>
<rect x="984.3" y="1532.2" width="68.5" height="44.9" fill="url(#gm12)" rx="3" stroke="#3a4a58" stroke-width="1" opacity="0.93"/>
<rect x="889.9" y="1579.0" width="22.1" height="21.7" fill="url(#gm13)" rx="3" opacity="0.93"/>
<rect x="913.5" y="1579.0" width="45.3" height="44.5" fill="url(#gm14)" rx="3" opacity="0.93"/>
<rect x="960.3" y="1579.0" width="22.1" height="21.7" fill="url(#gm15)" rx="3" opacity="0.93"/>
<rect x="984.3" y="1579.0" width="68.5" height="44.5" fill="url(#gm16)" rx="3" opacity="0.93"/>
<rect x="1054.3" y="1579.0" width="22.1" height="21.7" fill="url(#gm17)" rx="3" opacity="0.93"/>
<rect x="1077.5" y="1579.0" width="21.7" height="21.7" fill="url(#gm18)" rx="3" opacity="0.93"/>
<rect x="1101.1" y="1579.0" width="22.1" height="21.7" fill="url(#gm19)" rx="3" opacity="0.93"/>
<rect x="937.1" y="1625.4" width="21.7" height="22.4" fill="url(#gm20)" rx="3" opacity="0.93"/>
<rect x="960.3" y="1625.4" width="68.9" height="45.7" fill="url(#gm21)" rx="3" opacity="0.93"/>
<rect x="570.0" y="1526.1" width="515.1" height="147.3" fill="none" rx="4" stroke="#3fb4ff" stroke-width="3.2"/>
</g>
<rect x="578.0" y="1744.5" width="577.5" height="154.8" fill="#2d2d2d" rx="6"/>
<path d="M624.23,1848.62A47.20,47.20 0 1 1 686.17,1848.62" fill="none" stroke="#484848" stroke-width="4.6"/>
<circle cx="655.2" cy="1813.0" r="37.2" fill="#232323"/>
<circle cx="655.2" cy="1813.0" r="35.0" fill="url(#gDark)"/>
<line x1="655.2" y1="1803.5" x2="655.2" y2="1778.9" stroke="#f0f0f0" stroke-width="5.95" />
<path d="M652.73,1765.86A47.20,47.20 0 0 1 657.67,1765.86" fill="none" stroke="#fa2a50" stroke-width="4.6"/>
<path d="M732.23,1848.62A47.20,47.20 0 1 1 794.17,1848.62" fill="none" stroke="#484848" stroke-width="4.6"/>
<circle cx="763.2" cy="1813.0" r="37.2" fill="#232323"/>
<circle cx="763.2" cy="1813.0" r="35.0" fill="url(#gDark)"/>
<line x1="757.4" y1="1820.4" x2="742.2" y2="1839.9" stroke="#f0f0f0" stroke-width="5.95" />
<text x="656.3" y="1881.6" font-size="25" fill="#e6e6e6" text-anchor="middle" textLength="54.5" lengthAdjust="spacingAndGlyphs" stroke="#e6e6e6" stroke-width="0.22">Pitch</text>
<text x="764.4" y="1881.6" font-size="25" fill="#e6e6e6" text-anchor="middle" textLength="56.5" lengthAdjust="spacingAndGlyphs" stroke="#e6e6e6" stroke-width="0.22">Glide</text>
<rect x="801.3" y="1862.6" width="24.0" height="23.4" fill="#a8a8a8" rx="4.5"/>
<text x="813.3" y="1881.6" font-size="18" fill="#2a2a2a" text-anchor="middle" font-weight="bold">L</text>
<rect x="856.8" y="1754.0" width="146.2" height="136.6" fill="#4a4a4a" rx="7"/>
<rect x="866.0" y="1763.1" width="127.8" height="55.6" fill="#2a2a2a" rx="6"/>
<rect x="866.0" y="1827.0" width="127.8" height="55.2" fill="#2a2a2a" rx="6"/>
<path d="M873.9,1775.7V1770.3H986.6V1775.7" fill="none" stroke="#46708e" stroke-width="2.4"/>
<path d="M873.9,1839.2V1833.8H986.6V1839.2" fill="none" stroke="#46708e" stroke-width="2.4"/>
<text x="929.9" y="1799.7" font-size="25" fill="#ffffff" text-anchor="middle" textLength="85.0" lengthAdjust="spacingAndGlyphs" stroke="#ffffff" stroke-width="0.22">Note FX</text>
<rect x="879.6" y="1840.4" width="22.5" height="35.3" fill="#444444"/>
<text x="930.3" y="1862.5" font-size="25" fill="#ffffff" text-anchor="middle" textLength="28.0" lengthAdjust="spacingAndGlyphs" stroke="#ffffff" stroke-width="0.22">FX</text>
<path d="M1047.23,1848.62A47.20,47.20 0 1 1 1109.17,1848.62" fill="none" stroke="#484848" stroke-width="4.6"/>
<path d="M1046.62,1848.08A47.20,47.20 0 1 1 1124.53,1822.01" fill="none" stroke="#fa2a50" stroke-width="4.6"/>
<circle cx="1078.2" cy="1813.0" r="37.2" fill="#232323"/>
<circle cx="1078.2" cy="1813.0" r="35.0" fill="url(#gDark)"/>
<line x1="1087.5" y1="1814.8" x2="1111.7" y2="1819.5" stroke="#f0f0f0" stroke-width="5.95" />
<text x="1078.2" y="1881.6" font-size="25" fill="#e6e6e6" text-anchor="middle" textLength="42.0" lengthAdjust="spacingAndGlyphs" stroke="#e6e6e6" stroke-width="0.22">Out</text>
<rect x="1175.3" y="1432.3" width="20.0" height="19.5" fill="#f2d03c"/>
<path d="M1173.5,1660.8H1194.5M1184,1650.3V1671.3" fill="none" stroke="#8a8a8a" stroke-width="4.2"/>
<rect x="1175.3" y="1804.0" width="9.0" height="34.0" fill="#ff7400"/>
<rect x="1175.3" y="1838.0" width="9.0" height="7.2" fill="#ffd83a"/>
<rect x="1175.3" y="1845.2" width="9.0" height="48.4" fill="url(#gMeter)"/>
<rect x="1175.3" y="1801.0" width="9.0" height="3.2" fill="#ff7400"/>
<rect x="1186.1" y="1804.0" width="9.0" height="34.0" fill="#ff7400"/>
<rect x="1186.1" y="1838.0" width="9.0" height="7.2" fill="#ffd83a"/>
<rect x="1186.1" y="1845.2" width="9.0" height="48.4" fill="url(#gMeter)"/>
<rect x="1186.1" y="1801.0" width="9.0" height="3.2" fill="#ff7400"/>
<rect x="1208.4" y="1415.0" width="1412.1" height="492.0" fill="#555555" rx="11"/>
<path d="M1219.4,1415H1267.2V1907H1219.4Q1208.4,1907 1208.4,1896V1426Q1208.4,1415 1219.4,1415Z" fill="#404040"/>
<path d="M1242.51,1434.94A9.60,9.60 0 1 1 1231.49,1434.94" fill="none" stroke="#ff8a1a" stroke-width="3.2" stroke-linecap="round"/>
<line x1="1237.0" y1="1430.6" x2="1237.0" y2="1442.8" stroke="#ff8a1a" stroke-width="3.2" stroke-linecap="round"/>
<path d="M1223.5,1482.85Q1223.5,1478.5 1227.85,1478.5H1233.65L1237.275,1482.125H1246.7V1485.75H1229.3L1223.5,1500.25Z" fill="#707070"/>
<path d="M1230.025,1487.2H1251.775L1246.7,1501.7H1224.66Z" fill="#8e8e8e"/>
<circle cx="1237.0" cy="1839.4" r="10.0" fill="#dcdcdc"/>
<line x1="1237.0" y1="1830.4" x2="1237.0" y2="1837.9" stroke="#404040" stroke-width="2.6" />
<circle cx="1229.4" cy="1882.2" r="4.6" fill="#dcdcdc"/>
<line x1="1233.0" y1="1882.2" x2="1243.0" y2="1882.2" stroke="#dcdcdc" stroke-width="2.4" />
<path d="M1241.5,1877.2L1249.0,1882.2L1241.5,1887.2Z" fill="#dcdcdc"/>
<text x="0" y="0" font-size="24" fill="#ffffff" text-anchor="middle" transform="translate(1245.6 1660.8) rotate(-90)" textLength="160" lengthAdjust="spacingAndGlyphs">Amp Bassy Pick</text>
<rect x="1273.0" y="1421.2" width="389.2" height="235.6" fill="#1c1c1c" rx="5"/>
<g clip-path="url(#clipSp1273)">
<line x1="1287.5" y1="1421.2" x2="1287.5" y2="1656.8" stroke="#2a2a2a" stroke-width="1" />
<line x1="1300.5" y1="1421.2" x2="1300.5" y2="1656.8" stroke="#2a2a2a" stroke-width="1" />
<line x1="1311.1" y1="1421.2" x2="1311.1" y2="1656.8" stroke="#2a2a2a" stroke-width="1" />
<line x1="1320.1" y1="1421.2" x2="1320.1" y2="1656.8" stroke="#2a2a2a" stroke-width="1" />
<line x1="1327.8" y1="1421.2" x2="1327.8" y2="1656.8" stroke="#2a2a2a" stroke-width="1" />
<line x1="1334.7" y1="1421.2" x2="1334.7" y2="1656.8" stroke="#2a2a2a" stroke-width="1" />
<line x1="1340.8" y1="1421.2" x2="1340.8" y2="1656.8" stroke="#3a3a3a" stroke-width="1.2" />
<line x1="1381.1" y1="1421.2" x2="1381.1" y2="1656.8" stroke="#2a2a2a" stroke-width="1" />
<line x1="1404.7" y1="1421.2" x2="1404.7" y2="1656.8" stroke="#2a2a2a" stroke-width="1" />
<line x1="1421.4" y1="1421.2" x2="1421.4" y2="1656.8" stroke="#2a2a2a" stroke-width="1" />
<line x1="1434.4" y1="1421.2" x2="1434.4" y2="1656.8" stroke="#2a2a2a" stroke-width="1" />
<line x1="1445.0" y1="1421.2" x2="1445.0" y2="1656.8" stroke="#2a2a2a" stroke-width="1" />
<line x1="1453.9" y1="1421.2" x2="1453.9" y2="1656.8" stroke="#2a2a2a" stroke-width="1" />
<line x1="1461.7" y1="1421.2" x2="1461.7" y2="1656.8" stroke="#2a2a2a" stroke-width="1" />
<line x1="1468.5" y1="1421.2" x2="1468.5" y2="1656.8" stroke="#2a2a2a" stroke-width="1" />
<line x1="1474.7" y1="1421.2" x2="1474.7" y2="1656.8" stroke="#3a3a3a" stroke-width="1.2" />
<line x1="1515.0" y1="1421.2" x2="1515.0" y2="1656.8" stroke="#2a2a2a" stroke-width="1" />
<line x1="1538.5" y1="1421.2" x2="1538.5" y2="1656.8" stroke="#2a2a2a" stroke-width="1" />
<line x1="1555.3" y1="1421.2" x2="1555.3" y2="1656.8" stroke="#2a2a2a" stroke-width="1" />
<line x1="1568.2" y1="1421.2" x2="1568.2" y2="1656.8" stroke="#2a2a2a" stroke-width="1" />
<line x1="1578.8" y1="1421.2" x2="1578.8" y2="1656.8" stroke="#2a2a2a" stroke-width="1" />
<line x1="1587.8" y1="1421.2" x2="1587.8" y2="1656.8" stroke="#2a2a2a" stroke-width="1" />
<line x1="1595.6" y1="1421.2" x2="1595.6" y2="1656.8" stroke="#2a2a2a" stroke-width="1" />
<line x1="1602.4" y1="1421.2" x2="1602.4" y2="1656.8" stroke="#2a2a2a" stroke-width="1" />
<line x1="1608.5" y1="1421.2" x2="1608.5" y2="1656.8" stroke="#3a3a3a" stroke-width="1.2" />
<line x1="1648.8" y1="1421.2" x2="1648.8" y2="1656.8" stroke="#2a2a2a" stroke-width="1" />
<line x1="1273.0" y1="1451.3" x2="1662.2" y2="1451.3" stroke="#2c2c2c" stroke-width="1" />
<line x1="1273.0" y1="1482.3" x2="1662.2" y2="1482.3" stroke="#363636" stroke-width="1" />
<line x1="1273.0" y1="1513.5" x2="1662.2" y2="1513.5" stroke="#2c2c2c" stroke-width="1" />
<line x1="1273.0" y1="1544.8" x2="1662.2" y2="1544.8" stroke="#363636" stroke-width="1" />
<line x1="1273.0" y1="1575.5" x2="1662.2" y2="1575.5" stroke="#2c2c2c" stroke-width="1" />
<line x1="1273.0" y1="1606.0" x2="1662.2" y2="1606.0" stroke="#363636" stroke-width="1" />
<line x1="1273.0" y1="1637.0" x2="1662.2" y2="1637.0" stroke="#2c2c2c" stroke-width="1" />
<line x1="1291.7" y1="1610.8" x2="1291.7" y2="1656.8" stroke="#ff8418" stroke-width="1.5" />
<line x1="1316.1" y1="1579.1" x2="1316.1" y2="1656.8" stroke="#ff8418" stroke-width="1.5" />
<line x1="1333.0" y1="1560.7" x2="1333.0" y2="1656.8" stroke="#ff8418" stroke-width="1.5" />
<line x1="1346.1" y1="1546.6" x2="1346.1" y2="1656.8" stroke="#ff8418" stroke-width="1.5" />
<line x1="1356.0" y1="1551.9" x2="1356.0" y2="1656.8" stroke="#ff8418" stroke-width="1.5" />
<line x1="1364.8" y1="1564.2" x2="1364.8" y2="1656.8" stroke="#ff8418" stroke-width="1.5" />
<line x1="1372.6" y1="1557.2" x2="1372.6" y2="1656.8" stroke="#ff8418" stroke-width="1.5" />
<line x1="1380.7" y1="1566.0" x2="1380.7" y2="1656.8" stroke="#ff8418" stroke-width="1.5" />
<line x1="1386.7" y1="1566.0" x2="1386.7" y2="1656.8" stroke="#ff8418" stroke-width="1.5" />
<line x1="1392.0" y1="1555.4" x2="1392.0" y2="1656.8" stroke="#ff8418" stroke-width="1.5" />
<line x1="1398.4" y1="1557.2" x2="1398.4" y2="1656.8" stroke="#ff8418" stroke-width="1.5" />
<line x1="1403.0" y1="1555.4" x2="1403.0" y2="1656.8" stroke="#ff8418" stroke-width="1.5" />
<line x1="1406.9" y1="1554.7" x2="1406.9" y2="1656.8" stroke="#ff8418" stroke-width="1.5" />
<line x1="1410.7" y1="1552.6" x2="1410.7" y2="1656.8" stroke="#ff8418" stroke-width="1.5" />
<line x1="1413.9" y1="1550.1" x2="1413.9" y2="1656.8" stroke="#ff8418" stroke-width="1.5" />
<line x1="1416.7" y1="1543.0" x2="1416.7" y2="1656.8" stroke="#ff8418" stroke-width="1.5" />
<line x1="1419.6" y1="1537.7" x2="1419.6" y2="1656.8" stroke="#ff8418" stroke-width="1.5" />
<line x1="1422.4" y1="1531.4" x2="1422.4" y2="1656.8" stroke="#ff8418" stroke-width="1.5" />
<line x1="1425.2" y1="1525.4" x2="1425.2" y2="1656.8" stroke="#ff8418" stroke-width="1.5" />
<line x1="1428.0" y1="1520.1" x2="1428.0" y2="1656.8" stroke="#ff8418" stroke-width="1.5" />
<line x1="1430.9" y1="1515.8" x2="1430.9" y2="1656.8" stroke="#ff8418" stroke-width="1.5" />
<line x1="1433.7" y1="1521.8" x2="1433.7" y2="1656.8" stroke="#ff8418" stroke-width="1.5" />
<line x1="1436.5" y1="1527.9" x2="1436.5" y2="1656.8" stroke="#ff8418" stroke-width="1.5" />
<line x1="1401.9" y1="1557.2" x2="1401.9" y2="1656.8" stroke="#ff8418" stroke-width="1.5" />
<line x1="1403.7" y1="1557.0" x2="1403.7" y2="1656.8" stroke="#ff8418" stroke-width="1.5" />
<line x1="1405.6" y1="1556.8" x2="1405.6" y2="1656.8" stroke="#ff8418" stroke-width="1.5" />
<line x1="1407.4" y1="1550.3" x2="1407.4" y2="1656.8" stroke="#ff8418" stroke-width="1.5" />
<line x1="1409.3" y1="1550.1" x2="1409.3" y2="1656.8" stroke="#ff8418" stroke-width="1.5" />
<line x1="1411.1" y1="1549.9" x2="1411.1" y2="1656.8" stroke="#ff8418" stroke-width="1.5" />
<line x1="1412.9" y1="1543.4" x2="1412.9" y2="1656.8" stroke="#ff8418" stroke-width="1.5" />
<line x1="1414.8" y1="1543.2" x2="1414.8" y2="1656.8" stroke="#ff8418" stroke-width="1.5" />
<line x1="1416.6" y1="1543.0" x2="1416.6" y2="1656.8" stroke="#ff8418" stroke-width="1.5" />
<line x1="1418.4" y1="1536.5" x2="1418.4" y2="1656.8" stroke="#ff8418" stroke-width="1.5" />
<line x1="1420.3" y1="1536.3" x2="1420.3" y2="1656.8" stroke="#ff8418" stroke-width="1.5" />
<line x1="1422.1" y1="1536.2" x2="1422.1" y2="1656.8" stroke="#ff8418" stroke-width="1.5" />
<line x1="1423.9" y1="1529.6" x2="1423.9" y2="1656.8" stroke="#ff8418" stroke-width="1.5" />
<line x1="1425.8" y1="1529.4" x2="1425.8" y2="1656.8" stroke="#ff8418" stroke-width="1.5" />
<line x1="1427.6" y1="1529.3" x2="1427.6" y2="1656.8" stroke="#ff8418" stroke-width="1.5" />
<line x1="1429.5" y1="1522.7" x2="1429.5" y2="1656.8" stroke="#ff8418" stroke-width="1.5" />
<line x1="1431.3" y1="1522.6" x2="1431.3" y2="1656.8" stroke="#ff8418" stroke-width="1.5" />
<line x1="1433.1" y1="1522.4" x2="1433.1" y2="1656.8" stroke="#ff8418" stroke-width="1.5" />
<line x1="1435.0" y1="1516.6" x2="1435.0" y2="1656.8" stroke="#ff8418" stroke-width="1.5" />
<line x1="1436.8" y1="1518.7" x2="1436.8" y2="1656.8" stroke="#ff8418" stroke-width="1.5" />
<path d="M1439.0,1656.8L1439.0,1656.8L1439.0,1534.2L1440.8,1529.0L1442.5,1520.2L1444.3,1513.0L1446.1,1511.8L1447.8,1509.9L1449.6,1508.7L1451.4,1507.2L1453.1,1507.2L1454.9,1504.2L1456.7,1505.2L1458.4,1504.4L1460.2,1500.4L1462.0,1500.5L1463.7,1498.9L1465.5,1499.5L1467.2,1496.4L1469.0,1497.1L1470.8,1498.0L1472.5,1500.6L1474.3,1506.0L1476.1,1519.8L1477.8,1528.9L1479.6,1522.2L1481.4,1516.3L1483.1,1509.5L1484.9,1507.7L1486.7,1504.7L1488.4,1505.7L1490.2,1506.2L1492.0,1503.8L1493.7,1502.4L1495.5,1503.0L1497.3,1499.6L1499.0,1500.1L1500.8,1500.2L1502.6,1497.1L1504.3,1493.9L1506.1,1494.9L1507.9,1493.6L1509.6,1493.8L1511.4,1490.7L1513.2,1492.3L1514.9,1490.7L1516.7,1490.5L1518.5,1487.6L1520.2,1488.7L1522.0,1488.3L1523.8,1485.2L1525.5,1486.9L1527.3,1484.1L1529.1,1486.0L1530.8,1482.6L1532.6,1482.2L1534.4,1481.7L1536.1,1483.0L1537.9,1482.0L1539.7,1479.0L1541.4,1475.9L1543.2,1477.9L1544.9,1474.2L1546.7,1465.2L1548.5,1459.3L1550.2,1488.3L1552.0,1523.4L1553.8,1562.5L1555.5,1562.1L1557.3,1558.9L1559.1,1557.2L1560.8,1561.0L1562.6,1566.3L1564.4,1569.5L1566.1,1566.9L1567.9,1561.8L1569.7,1560.7L1571.4,1562.8L1573.2,1562.8L1575.0,1566.8L1576.7,1565.9L1578.5,1569.5L1580.3,1568.5L1582.0,1571.3L1583.8,1572.7L1585.6,1572.0L1587.3,1575.5L1589.1,1576.6L1590.9,1579.4L1592.6,1580.6L1594.4,1583.1L1596.2,1586.2L1597.9,1590.3L1599.7,1590.7L1601.5,1592.0L1603.2,1597.6L1605.0,1597.1L1606.8,1602.0L1608.5,1599.3L1610.3,1602.4L1612.1,1604.9L1613.8,1608.4L1615.6,1612.7L1617.4,1614.4L1619.1,1619.7L1620.9,1619.7L1622.6,1624.7L1624.4,1627.7L1626.2,1630.0L1627.9,1633.1L1629.7,1634.0L1631.5,1635.7L1633.2,1640.8L1635.0,1640.7L1636.8,1643.0L1638.5,1645.7L1640.3,1649.0L1642.1,1656.8L1642.1,1656.8Z" fill="#ff8418"/>
<line x1="1340.8" y1="1421.2" x2="1340.8" y2="1656.8" stroke="#ffffff" stroke-width="1" opacity="0.12"/>
<line x1="1474.7" y1="1421.2" x2="1474.7" y2="1656.8" stroke="#ffffff" stroke-width="1" opacity="0.12"/>
<line x1="1608.5" y1="1421.2" x2="1608.5" y2="1656.8" stroke="#ffffff" stroke-width="1" opacity="0.12"/>
<path d="M1273.0,1652.5C1285.7,1634.6 1298.4,1616.8 1311.1,1598.8C1323.9,1580.9 1340.4,1552.0 1349.6,1544.8C1358.9,1537.6 1361.4,1552.8 1366.6,1555.4C1371.8,1558.0 1375.2,1560.0 1381.1,1560.7C1387.0,1561.4 1392.5,1560.8 1401.9,1559.6C1411.3,1558.5 1425.5,1555.5 1437.2,1553.6C1449.0,1551.8 1460.8,1549.7 1472.5,1548.3C1484.3,1547.0 1496.1,1546.1 1507.9,1545.5C1519.6,1544.9 1532.3,1544.8 1543.2,1544.8C1554.1,1544.8 1564.4,1541.4 1573.2,1545.5C1582.0,1549.6 1589.4,1560.8 1596.2,1569.5C1602.9,1578.2 1607.9,1588.4 1613.8,1597.8C1619.7,1607.2 1624.5,1616.2 1631.5,1626.0C1638.4,1635.9 1647.5,1646.5 1655.5,1656.8" fill="none" stroke="#ffdd40" stroke-width="2.2"/>
</g>
<circle cx="1349.6" cy="1544.8" r="12.6" fill="#ffdd40"/>
<text x="1349.6" y="1552.4" font-size="21" fill="#1c1c1c" text-anchor="middle" stroke="#1c1c1c" stroke-width="0.22">L</text>
<circle cx="1381.1" cy="1568.8" r="12.6" fill="#ffdd40"/>
<text x="1381.1" y="1576.4" font-size="21" fill="#1c1c1c" text-anchor="middle" stroke="#1c1c1c" stroke-width="0.22">M</text>
<circle cx="1573.2" cy="1545.5" r="12.6" fill="#ffdd40"/>
<text x="1573.2" y="1553.1" font-size="21" fill="#1c1c1c" text-anchor="middle" stroke="#1c1c1c" stroke-width="0.22">H</text>
<rect x="1273.0" y="1664.2" width="389.2" height="234.5" fill="#2d2d2d" rx="5"/>
<path d="M1316.20,1751.95A38.10,38.10 0 1 1 1366.20,1751.95" fill="none" stroke="#484848" stroke-width="4.6"/>
<path d="M1315.71,1751.51A38.10,38.10 0 0 1 1305.87,1708.93" fill="none" stroke="#ffdd40" stroke-width="4.6"/>
<circle cx="1341.2" cy="1723.2" r="29.4" fill="#232323"/>
<circle cx="1341.2" cy="1723.2" r="27.2" fill="url(#gDark)"/>
<line x1="1334.4" y1="1720.4" x2="1316.6" y2="1713.3" stroke="#f0f0f0" stroke-width="4.6240000000000006" />
<text x="1341.7" y="1777.4" font-size="24" fill="#e6e6e6" text-anchor="middle" stroke="#e6e6e6" stroke-width="0.22">L</text>
<path d="M1442.30,1751.95A38.10,38.10 0 1 1 1492.30,1751.95" fill="none" stroke="#484848" stroke-width="4.6"/>
<path d="M1441.81,1751.51A38.10,38.10 0 0 1 1451.20,1688.67" fill="none" stroke="#ffdd40" stroke-width="4.6"/>
<circle cx="1467.3" cy="1723.2" r="29.4" fill="#232323"/>
<circle cx="1467.3" cy="1723.2" r="27.2" fill="url(#gDark)"/>
<line x1="1464.2" y1="1716.5" x2="1456.1" y2="1699.2" stroke="#f0f0f0" stroke-width="4.6240000000000006" />
<text x="1467.8" y="1777.4" font-size="24" fill="#e6e6e6" text-anchor="middle" stroke="#e6e6e6" stroke-width="0.22">M</text>
<path d="M1568.30,1751.95A38.10,38.10 0 1 1 1618.30,1751.95" fill="none" stroke="#484848" stroke-width="4.6"/>
<path d="M1567.81,1751.51A38.10,38.10 0 1 1 1631.38,1721.87" fill="none" stroke="#ffdd40" stroke-width="4.6"/>
<circle cx="1593.3" cy="1723.2" r="29.4" fill="#232323"/>
<circle cx="1593.3" cy="1723.2" r="27.2" fill="url(#gDark)"/>
<line x1="1600.6" y1="1722.9" x2="1619.8" y2="1722.3" stroke="#f0f0f0" stroke-width="4.6240000000000006" />
<text x="1593.8" y="1777.4" font-size="24" fill="#e6e6e6" text-anchor="middle" stroke="#e6e6e6" stroke-width="0.22">H</text>
<rect x="1284.0" y="1792.0" width="114.7" height="42.4" fill="url(#gDrop)" rx="5" stroke="#383838" stroke-width="1"/>
<path d="M1298,1821.7C1303,1808.2 1306,1808.2 1313,1808.2H1321" fill="none" stroke="#e8e8e8" stroke-width="2.4"/>
<path d="M1381.2,1810.2H1391.2L1386.2,1816.2Z" fill="#a8a8a8"/>
<rect x="1410.0" y="1792.0" width="114.8" height="42.4" fill="#d6d6d6" rx="5"/>
<text x="1514.8" y="1823.8" font-size="25" fill="#141414" text-anchor="end" textLength="79.0" lengthAdjust="spacingAndGlyphs" stroke="#141414" stroke-width="0.22">200 Hz</text>
<rect x="1536.1" y="1792.0" width="114.8" height="42.4" fill="url(#gDrop)" rx="5" stroke="#383838" stroke-width="1"/>
<path d="M1550.1,1808.2H1558.1C1565.1,1808.2 1568.1,1808.2 1573.1,1821.7" fill="none" stroke="#e8e8e8" stroke-width="2.4"/>
<path d="M1633.3999999999999,1810.2H1643.3999999999999L1638.3999999999999,1816.2Z" fill="#a8a8a8"/>
<rect x="1284.0" y="1846.0" width="114.8" height="42.8" fill="#d6d6d6" rx="5"/>
<text x="1388.8" y="1878.2" font-size="25" fill="#141414" text-anchor="end" textLength="47.5" lengthAdjust="spacingAndGlyphs" stroke="#141414" stroke-width="0.22">1.53</text>
<rect x="1410.0" y="1846.0" width="114.8" height="42.8" fill="#d6d6d6" rx="5"/>
<text x="1514.8" y="1878.2" font-size="25" fill="#141414" text-anchor="end" textLength="47.5" lengthAdjust="spacingAndGlyphs" stroke="#141414" stroke-width="0.22">0.43</text>
<rect x="1536.1" y="1846.0" width="114.8" height="42.8" fill="#d6d6d6" rx="5"/>
<text x="1640.9" y="1878.2" font-size="25" fill="#141414" text-anchor="end" textLength="47.5" lengthAdjust="spacingAndGlyphs" stroke="#141414" stroke-width="0.22">0.79</text>
<rect x="1669.3" y="1421.2" width="172.7" height="477.5" fill="#1c1c1c" rx="5"/>
<rect x="1678.1" y="1430.4" width="154.7" height="46.2" fill="#505050" rx="7"/>
<text x="1691.5" y="1462.9" font-size="25" fill="#f2f2f2" text-anchor="start" textLength="70.0" lengthAdjust="spacingAndGlyphs" stroke="#f2f2f2" stroke-width="0.22">Fold A</text>
<path d="M1813.7,1450H1823.7L1818.7,1456Z" fill="#aaaaaa"/>
<path d="M1730.10,1562.25A38.10,38.10 0 1 1 1780.10,1562.25" fill="none" stroke="#4a4a4a" stroke-width="4.6"/>
<path d="M1729.61,1561.81A38.10,38.10 0 0 1 1751.78,1495.54" fill="none" stroke="#fa2a50" stroke-width="4.6"/>
<circle cx="1755.1" cy="1533.5" r="29.4" fill="#232323"/>
<circle cx="1755.1" cy="1533.5" r="27.2" fill="url(#gLight)"/>
<line x1="1754.5" y1="1526.2" x2="1752.8" y2="1507.1" stroke="#0a0a0a" stroke-width="5" />
<text x="1756.2" y="1588.0" font-size="24" fill="#e6e6e6" text-anchor="middle" textLength="41.0" lengthAdjust="spacingAndGlyphs" stroke="#e6e6e6" stroke-width="0.22">Bias</text>
<path d="M1730.10,1680.25A38.10,38.10 0 1 1 1780.10,1680.25" fill="none" stroke="#4a4a4a" stroke-width="4.6"/>
<path d="M1729.61,1679.81A38.10,38.10 0 0 1 1717.14,1654.82" fill="none" stroke="#fa2a50" stroke-width="4.6"/>
<circle cx="1755.1" cy="1651.5" r="29.4" fill="#232323"/>
<circle cx="1755.1" cy="1651.5" r="27.2" fill="url(#gLight)"/>
<line x1="1747.8" y1="1652.1" x2="1728.7" y2="1653.8" stroke="#0a0a0a" stroke-width="5" />
<text x="1756.2" y="1705.6" font-size="24" fill="#e6e6e6" text-anchor="middle" textLength="36.0" lengthAdjust="spacingAndGlyphs" stroke="#e6e6e6" stroke-width="0.22">Sag</text>
<rect x="1804.5" y="1691.4" width="19.5" height="9.9" fill="#3c3c3c"/>
<path d="M1712.26,1844.18A65.30,65.30 0 1 1 1797.94,1844.18" fill="none" stroke="#4a4a4a" stroke-width="5"/>
<path d="M1711.41,1843.43A65.30,65.30 0 0 1 1713.13,1744.88" fill="none" stroke="#fa2a50" stroke-width="5"/>
<circle cx="1755.1" cy="1794.9" r="54.1" fill="#232323"/>
<circle cx="1755.1" cy="1794.9" r="51.9" fill="url(#gLight)"/>
<line x1="1746.1" y1="1784.2" x2="1722.6" y2="1756.1" stroke="#0a0a0a" stroke-width="6" />
<text x="1756.2" y="1876.2" font-size="24" fill="#e6e6e6" text-anchor="middle" textLength="55.0" lengthAdjust="spacingAndGlyphs" stroke="#e6e6e6" stroke-width="0.22">Drive</text>
<rect x="1849.0" y="1421.2" width="389.3" height="235.6" fill="#1c1c1c" rx="5"/>
<g clip-path="url(#clipSp1849)">
<line x1="1863.5" y1="1421.2" x2="1863.5" y2="1656.8" stroke="#2a2a2a" stroke-width="1" />
<line x1="1876.5" y1="1421.2" x2="1876.5" y2="1656.8" stroke="#2a2a2a" stroke-width="1" />
<line x1="1887.1" y1="1421.2" x2="1887.1" y2="1656.8" stroke="#2a2a2a" stroke-width="1" />
<line x1="1896.1" y1="1421.2" x2="1896.1" y2="1656.8" stroke="#2a2a2a" stroke-width="1" />
<line x1="1903.8" y1="1421.2" x2="1903.8" y2="1656.8" stroke="#2a2a2a" stroke-width="1" />
<line x1="1910.7" y1="1421.2" x2="1910.7" y2="1656.8" stroke="#2a2a2a" stroke-width="1" />
<line x1="1916.8" y1="1421.2" x2="1916.8" y2="1656.8" stroke="#3a3a3a" stroke-width="1.2" />
<line x1="1957.1" y1="1421.2" x2="1957.1" y2="1656.8" stroke="#2a2a2a" stroke-width="1" />
<line x1="1980.7" y1="1421.2" x2="1980.7" y2="1656.8" stroke="#2a2a2a" stroke-width="1" />
<line x1="1997.4" y1="1421.2" x2="1997.4" y2="1656.8" stroke="#2a2a2a" stroke-width="1" />
<line x1="2010.4" y1="1421.2" x2="2010.4" y2="1656.8" stroke="#2a2a2a" stroke-width="1" />
<line x1="2021.0" y1="1421.2" x2="2021.0" y2="1656.8" stroke="#2a2a2a" stroke-width="1" />
<line x1="2029.9" y1="1421.2" x2="2029.9" y2="1656.8" stroke="#2a2a2a" stroke-width="1" />
<line x1="2037.7" y1="1421.2" x2="2037.7" y2="1656.8" stroke="#2a2a2a" stroke-width="1" />
<line x1="2044.5" y1="1421.2" x2="2044.5" y2="1656.8" stroke="#2a2a2a" stroke-width="1" />
<line x1="2050.7" y1="1421.2" x2="2050.7" y2="1656.8" stroke="#3a3a3a" stroke-width="1.2" />
<line x1="2091.0" y1="1421.2" x2="2091.0" y2="1656.8" stroke="#2a2a2a" stroke-width="1" />
<line x1="2114.5" y1="1421.2" x2="2114.5" y2="1656.8" stroke="#2a2a2a" stroke-width="1" />
<line x1="2131.3" y1="1421.2" x2="2131.3" y2="1656.8" stroke="#2a2a2a" stroke-width="1" />
<line x1="2144.2" y1="1421.2" x2="2144.2" y2="1656.8" stroke="#2a2a2a" stroke-width="1" />
<line x1="2154.8" y1="1421.2" x2="2154.8" y2="1656.8" stroke="#2a2a2a" stroke-width="1" />
<line x1="2163.8" y1="1421.2" x2="2163.8" y2="1656.8" stroke="#2a2a2a" stroke-width="1" />
<line x1="2171.6" y1="1421.2" x2="2171.6" y2="1656.8" stroke="#2a2a2a" stroke-width="1" />
<line x1="2178.4" y1="1421.2" x2="2178.4" y2="1656.8" stroke="#2a2a2a" stroke-width="1" />
<line x1="2184.5" y1="1421.2" x2="2184.5" y2="1656.8" stroke="#3a3a3a" stroke-width="1.2" />
<line x1="2224.8" y1="1421.2" x2="2224.8" y2="1656.8" stroke="#2a2a2a" stroke-width="1" />
<line x1="1849.0" y1="1451.3" x2="2238.3" y2="1451.3" stroke="#2c2c2c" stroke-width="1" />
<line x1="1849.0" y1="1482.3" x2="2238.3" y2="1482.3" stroke="#363636" stroke-width="1" />
<line x1="1849.0" y1="1513.5" x2="2238.3" y2="1513.5" stroke="#2c2c2c" stroke-width="1" />
<line x1="1849.0" y1="1544.8" x2="2238.3" y2="1544.8" stroke="#363636" stroke-width="1" />
<line x1="1849.0" y1="1575.5" x2="2238.3" y2="1575.5" stroke="#2c2c2c" stroke-width="1" />
<line x1="1849.0" y1="1606.0" x2="2238.3" y2="1606.0" stroke="#363636" stroke-width="1" />
<line x1="1849.0" y1="1637.0" x2="2238.3" y2="1637.0" stroke="#2c2c2c" stroke-width="1" />
<line x1="1867.8" y1="1613.7" x2="1867.8" y2="1656.8" stroke="#c46cff" stroke-width="1.5" />
<line x1="1891.8" y1="1567.8" x2="1891.8" y2="1656.8" stroke="#c46cff" stroke-width="1.5" />
<line x1="1908.4" y1="1548.3" x2="1908.4" y2="1656.8" stroke="#c46cff" stroke-width="1.5" />
<line x1="1921.1" y1="1544.8" x2="1921.1" y2="1656.8" stroke="#c46cff" stroke-width="1.5" />
<line x1="1931.7" y1="1533.5" x2="1931.7" y2="1656.8" stroke="#c46cff" stroke-width="1.5" />
<line x1="1940.6" y1="1542.3" x2="1940.6" y2="1656.8" stroke="#c46cff" stroke-width="1.5" />
<line x1="1949.0" y1="1550.1" x2="1949.0" y2="1656.8" stroke="#c46cff" stroke-width="1.5" />
<line x1="1956.1" y1="1544.8" x2="1956.1" y2="1656.8" stroke="#c46cff" stroke-width="1.5" />
<line x1="1961.7" y1="1540.6" x2="1961.7" y2="1656.8" stroke="#c46cff" stroke-width="1.5" />
<line x1="1967.4" y1="1539.5" x2="1967.4" y2="1656.8" stroke="#c46cff" stroke-width="1.5" />
<line x1="1972.0" y1="1539.5" x2="1972.0" y2="1656.8" stroke="#c46cff" stroke-width="1.5" />
<line x1="1976.6" y1="1540.2" x2="1976.6" y2="1656.8" stroke="#c46cff" stroke-width="1.5" />
<line x1="1981.2" y1="1544.8" x2="1981.2" y2="1656.8" stroke="#c46cff" stroke-width="1.5" />
<line x1="1985.4" y1="1546.6" x2="1985.4" y2="1656.8" stroke="#c46cff" stroke-width="1.5" />
<line x1="1989.3" y1="1545.5" x2="1989.3" y2="1656.8" stroke="#c46cff" stroke-width="1.5" />
<line x1="1992.8" y1="1543.0" x2="1992.8" y2="1656.8" stroke="#c46cff" stroke-width="1.5" />
<line x1="1996.0" y1="1539.5" x2="1996.0" y2="1656.8" stroke="#c46cff" stroke-width="1.5" />
<line x1="1998.8" y1="1532.5" x2="1998.8" y2="1656.8" stroke="#c46cff" stroke-width="1.5" />
<line x1="2001.3" y1="1523.6" x2="2001.3" y2="1656.8" stroke="#c46cff" stroke-width="1.5" />
<line x1="2003.8" y1="1518.3" x2="2003.8" y2="1656.8" stroke="#c46cff" stroke-width="1.5" />
<line x1="2006.2" y1="1513.7" x2="2006.2" y2="1656.8" stroke="#c46cff" stroke-width="1.5" />
<line x1="2008.7" y1="1518.3" x2="2008.7" y2="1656.8" stroke="#c46cff" stroke-width="1.5" />
<line x1="2011.2" y1="1525.4" x2="2011.2" y2="1656.8" stroke="#c46cff" stroke-width="1.5" />
<line x1="2013.7" y1="1528.9" x2="2013.7" y2="1656.8" stroke="#c46cff" stroke-width="1.5" />
<line x1="2016.1" y1="1530.7" x2="2016.1" y2="1656.8" stroke="#c46cff" stroke-width="1.5" />
<path d="M2018.3,1656.8L2018.3,1656.8L2018.3,1520.1L2020.4,1510.2L2022.5,1502.4L2024.3,1500.7L2026.0,1497.2L2027.8,1499.3L2029.6,1497.6L2031.3,1495.4L2033.1,1496.9L2034.9,1503.1L2036.6,1503.6L2038.4,1509.5L2040.2,1505.5L2041.9,1505.5L2043.7,1504.2L2045.5,1505.8L2047.2,1509.6L2049.0,1513.8L2050.8,1520.6L2052.5,1521.9L2054.3,1520.3L2056.0,1516.1L2057.8,1511.2L2059.6,1509.5L2061.3,1508.9L2063.1,1506.8L2064.9,1505.3L2066.6,1501.5L2068.4,1502.0L2070.2,1497.1L2071.9,1497.8L2073.7,1495.4L2075.5,1498.4L2077.2,1499.0L2079.0,1505.0L2080.8,1506.0L2082.5,1501.8L2084.3,1502.6L2086.1,1496.8L2087.8,1494.2L2089.6,1493.6L2091.4,1492.6L2093.1,1497.8L2094.9,1496.5L2096.7,1498.3L2098.4,1498.9L2100.2,1492.7L2102.0,1487.7L2103.7,1484.0L2105.5,1481.2L2107.3,1482.4L2109.0,1487.7L2110.8,1491.8L2113.1,1479.1L2115.4,1463.6L2117.5,1466.7L2119.6,1470.6L2121.9,1457.4L2124.2,1445.2L2126.7,1506.0L2128.5,1506.7L2130.2,1502.8L2132.0,1504.3L2133.8,1501.2L2135.5,1502.4L2137.3,1508.3L2139.1,1516.1L2140.8,1520.1L2142.6,1522.2L2144.3,1527.1L2146.1,1529.0L2147.9,1530.7L2149.6,1531.6L2151.4,1533.8L2153.2,1533.1L2154.9,1534.2L2156.7,1540.7L2158.5,1544.8L2160.2,1545.5L2162.0,1551.4L2163.8,1555.4L2165.5,1569.9L2167.3,1587.2L2169.1,1604.9L2170.8,1610.4L2172.6,1611.8L2174.4,1616.6L2176.1,1619.9L2177.9,1620.8L2179.7,1623.1L2181.4,1625.2L2183.2,1628.7L2185.0,1631.2L2186.7,1631.3L2188.5,1637.2L2190.3,1638.6L2192.0,1645.1L2193.8,1647.2L2193.8,1656.8L2193.8,1656.8Z" fill="#c46cff"/>
<line x1="1916.8" y1="1421.2" x2="1916.8" y2="1656.8" stroke="#ffffff" stroke-width="1" opacity="0.12"/>
<line x1="2050.7" y1="1421.2" x2="2050.7" y2="1656.8" stroke="#ffffff" stroke-width="1" opacity="0.12"/>
<line x1="2184.5" y1="1421.2" x2="2184.5" y2="1656.8" stroke="#ffffff" stroke-width="1" opacity="0.12"/>
<path d="M1849.1,1649.0C1860.4,1634.3 1871.4,1617.5 1883.0,1604.9C1894.5,1592.2 1906.5,1581.3 1918.3,1573.1C1930.1,1564.8 1941.8,1559.6 1953.6,1555.4C1965.4,1551.2 1975.2,1549.7 1988.9,1547.6C2002.7,1545.6 2021.6,1544.4 2036.3,1543.0C2051.0,1541.7 2065.7,1541.3 2077.2,1539.5C2088.8,1537.7 2097.3,1536.0 2105.5,1532.5C2113.7,1528.9 2121.5,1521.7 2126.7,1518.3C2131.9,1515.0 2133.5,1512.1 2136.6,1512.3C2139.7,1512.5 2142.3,1514.6 2145.4,1519.4C2148.5,1524.2 2151.0,1532.9 2154.9,1541.3C2158.9,1549.6 2162.6,1557.8 2169.1,1569.5C2175.5,1581.3 2184.8,1597.4 2193.8,1611.9C2202.7,1626.5 2213.1,1641.8 2222.8,1656.8" fill="none" stroke="#58a8f0" stroke-width="2.2"/>
</g>
<circle cx="1921.1" cy="1545.5" r="12.6" fill="#58a8f0"/>
<text x="1921.1" y="1553.1" font-size="21" fill="#1c1c1c" text-anchor="middle" stroke="#1c1c1c" stroke-width="0.22">L</text>
<circle cx="2036.3" cy="1543.0" r="12.6" fill="#58a8f0"/>
<text x="2036.3" y="1550.6" font-size="21" fill="#1c1c1c" text-anchor="middle" stroke="#1c1c1c" stroke-width="0.22">M</text>
<circle cx="2140.1" cy="1545.5" r="12.6" fill="#58a8f0"/>
<text x="2140.1" y="1553.1" font-size="21" fill="#1c1c1c" text-anchor="middle" stroke="#1c1c1c" stroke-width="0.22">H</text>
<rect x="1849.0" y="1664.2" width="389.2" height="234.5" fill="#2d2d2d" rx="5"/>
<path d="M1892.60,1751.95A38.10,38.10 0 1 1 1942.60,1751.95" fill="none" stroke="#484848" stroke-width="4.6"/>
<path d="M1892.11,1751.51A38.10,38.10 0 0 1 1881.36,1711.43" fill="none" stroke="#58a8f0" stroke-width="4.6"/>
<circle cx="1917.6" cy="1723.2" r="29.4" fill="#232323"/>
<circle cx="1917.6" cy="1723.2" r="27.2" fill="url(#gDark)"/>
<line x1="1910.6" y1="1720.9" x2="1892.4" y2="1715.0" stroke="#f0f0f0" stroke-width="4.6240000000000006" />
<text x="1918.1" y="1777.4" font-size="24" fill="#e6e6e6" text-anchor="middle" stroke="#e6e6e6" stroke-width="0.22">L</text>
<path d="M2018.30,1751.95A38.10,38.10 0 1 1 2068.30,1751.95" fill="none" stroke="#484848" stroke-width="4.6"/>
<path d="M2017.81,1751.51A38.10,38.10 0 0 1 2045.29,1685.15" fill="none" stroke="#58a8f0" stroke-width="4.6"/>
<circle cx="2043.3" cy="1723.2" r="29.4" fill="#232323"/>
<circle cx="2043.3" cy="1723.2" r="27.2" fill="url(#gDark)"/>
<line x1="2043.7" y1="1715.9" x2="2044.7" y2="1696.7" stroke="#f0f0f0" stroke-width="4.6240000000000006" />
<text x="2043.8" y="1777.4" font-size="24" fill="#e6e6e6" text-anchor="middle" stroke="#e6e6e6" stroke-width="0.22">M</text>
<path d="M2144.40,1751.95A38.10,38.10 0 1 1 2194.40,1751.95" fill="none" stroke="#484848" stroke-width="4.6"/>
<path d="M2143.91,1751.51A38.10,38.10 0 1 1 2206.92,1716.58" fill="none" stroke="#58a8f0" stroke-width="4.6"/>
<circle cx="2169.4" cy="1723.2" r="29.4" fill="#232323"/>
<circle cx="2169.4" cy="1723.2" r="27.2" fill="url(#gDark)"/>
<line x1="2176.6" y1="1721.9" x2="2195.5" y2="1718.6" stroke="#f0f0f0" stroke-width="4.6240000000000006" />
<text x="2169.9" y="1777.4" font-size="24" fill="#e6e6e6" text-anchor="middle" stroke="#e6e6e6" stroke-width="0.22">H</text>
<rect x="1860.0" y="1792.0" width="114.7" height="42.4" fill="url(#gDrop)" rx="5" stroke="#383838" stroke-width="1"/>
<path d="M1874,1821.7C1879,1808.2 1882,1808.2 1889,1808.2H1897" fill="none" stroke="#e8e8e8" stroke-width="2.4"/>
<path d="M1957.2,1810.2H1967.2L1962.2,1816.2Z" fill="#a8a8a8"/>
<rect x="1986.0" y="1792.0" width="114.8" height="42.4" fill="#d6d6d6" rx="5"/>
<text x="2090.8" y="1823.8" font-size="25" fill="#141414" text-anchor="end" textLength="79.0" lengthAdjust="spacingAndGlyphs" stroke="#141414" stroke-width="0.22">780 Hz</text>
<rect x="2112.1" y="1792.0" width="114.8" height="42.4" fill="url(#gDrop)" rx="5" stroke="#383838" stroke-width="1"/>
<path d="M2126.1,1808.2H2134.1C2141.1,1808.2 2144.1,1808.2 2149.1,1821.7" fill="none" stroke="#e8e8e8" stroke-width="2.4"/>
<path d="M2209.4,1810.2H2219.4L2214.4,1816.2Z" fill="#a8a8a8"/>
<rect x="1860.0" y="1846.0" width="114.8" height="42.8" fill="#d6d6d6" rx="5"/>
<text x="1964.8" y="1878.2" font-size="25" fill="#141414" text-anchor="end" textLength="47.5" lengthAdjust="spacingAndGlyphs" stroke="#141414" stroke-width="0.22">0.43</text>
<rect x="1986.0" y="1846.0" width="114.8" height="42.8" fill="#d6d6d6" rx="5"/>
<text x="2090.8" y="1878.2" font-size="25" fill="#141414" text-anchor="end" textLength="47.5" lengthAdjust="spacingAndGlyphs" stroke="#141414" stroke-width="0.22">0.40</text>
<rect x="2112.1" y="1846.0" width="114.8" height="42.8" fill="#d6d6d6" rx="5"/>
<text x="2216.9" y="1878.2" font-size="25" fill="#141414" text-anchor="end" textLength="47.5" lengthAdjust="spacingAndGlyphs" stroke="#141414" stroke-width="0.22">2.17</text>
<rect x="2245.4" y="1421.2" width="216.8" height="477.5" fill="#2d2d2d" rx="5"/>
<text x="2355.0" y="1453.8" font-size="25" fill="#ff8a1a" text-anchor="middle" textLength="78.5" lengthAdjust="spacingAndGlyphs" stroke="#ff8a1a" stroke-width="0.22">Cabinet</text>
<circle cx="2439.3" cy="1444.4" r="8.2" fill="none" stroke="#ff8a1a" stroke-width="2.6"/>
<line x1="2428.0" y1="1456.5" x2="2451.0" y2="1432.0" stroke="#ff8a1a" stroke-width="2.2" />
<rect x="2310.0" y="1477.0" width="132.8" height="33.6" fill="#d6d6d6" rx="5"/>
<text x="2433.3" y="1504.2" font-size="25" fill="#141414" text-anchor="end" textLength="86.5" lengthAdjust="spacingAndGlyphs" stroke="#141414" stroke-width="0.22">82.7 cm</text>
<rect x="2310.0" y="1522.2" width="132.8" height="33.6" fill="#d6d6d6" rx="5"/>
<text x="2433.3" y="1549.4" font-size="25" fill="#141414" text-anchor="end" textLength="86.5" lengthAdjust="spacingAndGlyphs" stroke="#141414" stroke-width="0.22">92.1 cm</text>
<rect x="2310.0" y="1567.1" width="132.8" height="33.6" fill="#d6d6d6" rx="5"/>
<text x="2433.3" y="1594.3" font-size="25" fill="#141414" text-anchor="end" textLength="86.5" lengthAdjust="spacingAndGlyphs" stroke="#141414" stroke-width="0.22">7.37 cm</text>
<rect x="2310.0" y="1612.3" width="132.8" height="33.6" fill="#d6d6d6" rx="5"/>
<text x="2433.3" y="1639.5" font-size="25" fill="#141414" text-anchor="end" textLength="74.0" lengthAdjust="spacingAndGlyphs" stroke="#141414" stroke-width="0.22">23.6 %</text>
<path d="M2264,1486.5V1501.5M2292,1486.5V1501.5M2267,1494H2289M2272.5,1489.5L2267,1494L2272.5,1498.5M2283.5,1489.5L2289,1494L2283.5,1498.5" fill="none" stroke="#f0f0f0" stroke-width="2"/>
<path d="M2270,1524.8H2286M2270,1552.8H2286M2278,1528V1549.5M2273.5,1533.5L2278,1528L2282.5,1533.5M2273.5,1544L2278,1549.5L2282.5,1544" fill="none" stroke="#f0f0f0" stroke-width="2"/>
<path d="M2263,1590L2271.5,1599.5M2285,1568L2293.5,1577.5M2269.5,1592.5L2287.5,1575.5M2269.5,1585.5V1592.5H2276.5M2280.5,1575.5H2287.5V1582.5" fill="none" stroke="#f0f0f0" stroke-width="2"/>
<path d="M2265.5,1641C2276,1640.5 2274.3,1619.5 2278,1619.5S2279.7,1640.5 2290.5,1641Z" fill="url(#gPeak2)"/>
<text x="2280.3" y="1699.6" font-size="25" fill="#e0e0e0" text-anchor="middle" stroke="#e0e0e0" stroke-width="0.22">A</text>
<text x="2329.8" y="1699.6" font-size="25" fill="#e0e0e0" text-anchor="middle" stroke="#e0e0e0" stroke-width="0.22">B</text>
<text x="2378.5" y="1699.6" font-size="25" fill="#b5e620" text-anchor="middle" stroke="#b5e620" stroke-width="0.22">C</text>
<text x="2428.0" y="1699.6" font-size="25" fill="#e0e0e0" text-anchor="middle" stroke="#e0e0e0" stroke-width="0.22">D</text>
<text x="2280.3" y="1748.0" font-size="25" fill="#e0e0e0" text-anchor="middle" stroke="#e0e0e0" stroke-width="0.22">E</text>
<text x="2329.8" y="1748.0" font-size="25" fill="#e0e0e0" text-anchor="middle" stroke="#e0e0e0" stroke-width="0.22">F</text>
<text x="2378.5" y="1748.0" font-size="25" fill="#e0e0e0" text-anchor="middle" stroke="#e0e0e0" stroke-width="0.22">G</text>
<text x="2428.0" y="1748.0" font-size="25" fill="#e0e0e0" text-anchor="middle" stroke="#e0e0e0" stroke-width="0.22">H</text>
<rect x="2352.0" y="1711.9" width="52.0" height="3.9" fill="#b5e620"/>
<path d="M2279.30,1840.25A38.10,38.10 0 1 1 2329.30,1840.25" fill="none" stroke="#484848" stroke-width="4.6"/>
<path d="M2278.81,1839.81A38.10,38.10 0 1 1 2335.51,1789.65" fill="none" stroke="#b5e620" stroke-width="4.6"/>
<circle cx="2304.3" cy="1811.5" r="29.4" fill="#232323"/>
<circle cx="2304.3" cy="1811.5" r="27.2" fill="url(#gDark)"/>
<line x1="2310.3" y1="1807.3" x2="2326.0" y2="1796.3" stroke="#f0f0f0" stroke-width="4.6240000000000006" />
<path d="M2378.20,1840.25A38.10,38.10 0 1 1 2428.20,1840.25" fill="none" stroke="#484848" stroke-width="4.6"/>
<path d="M2377.71,1839.81A38.10,38.10 0 1 1 2440.17,1802.28" fill="none" stroke="#ff8a1a" stroke-width="4.6"/>
<circle cx="2403.2" cy="1811.5" r="29.4" fill="#232323"/>
<circle cx="2403.2" cy="1811.5" r="27.2" fill="url(#gDark)"/>
<line x1="2410.3" y1="1809.7" x2="2428.9" y2="1805.1" stroke="#f0f0f0" stroke-width="4.6240000000000006" />
<text x="2304.3" y="1876.2" font-size="24" fill="#e6e6e6" text-anchor="middle" textLength="55.5" lengthAdjust="spacingAndGlyphs" stroke="#e6e6e6" stroke-width="0.22">Color</text>
<text x="2403.2" y="1876.2" font-size="24" fill="#e6e6e6" text-anchor="middle" textLength="38.0" lengthAdjust="spacingAndGlyphs" stroke="#e6e6e6" stroke-width="0.22">Mix</text>
<rect x="2470.0" y="1426.5" width="144.8" height="40.6" fill="#303030" rx="5"/>
<path d="M2477.6,1434.3V1429.5H2608.7V1434.3" fill="none" stroke="#46708e" stroke-width="2.4"/>
<rect x="2484.1" y="1435.3" width="25.8" height="26.5" fill="#444444"/>
<text x="2543.5" y="1453.2" font-size="25" fill="#ffffff" text-anchor="middle" textLength="34.0" lengthAdjust="spacingAndGlyphs" stroke="#ffffff" stroke-width="0.22">Pre</text>
<rect x="2470.0" y="1474.9" width="144.8" height="46.2" fill="#1c1c1c" rx="5"/>
<circle cx="2498.6" cy="1497.8" r="8.6" fill="none" stroke="#9a9a9a" stroke-width="2"/>
<circle cx="2509.2" cy="1497.8" r="8.6" fill="none" stroke="#9a9a9a" stroke-width="2"/>
<text x="2527.6" y="1506.2" font-size="25" fill="#9a9a9a" text-anchor="start" textLength="70.6" lengthAdjust="spacingAndGlyphs" stroke="#9a9a9a" stroke-width="0.22">Stereo</text>
<rect x="2470.0" y="1529.6" width="144.8" height="45.9" fill="#1c1c1c" rx="5"/>
<path d="M2477.6,1542V1537.2H2608.7V1542" fill="none" stroke="#46708e" stroke-width="2.4"/>
<rect x="2484.1" y="1543.0" width="25.8" height="26.5" fill="#444444"/>
<text x="2542.8" y="1561.5" font-size="25" fill="#ffffff" text-anchor="middle" textLength="45.0" lengthAdjust="spacingAndGlyphs" stroke="#ffffff" stroke-width="0.22">Post</text>
<rect x="2470.0" y="1583.7" width="144.8" height="315.0" fill="#2d2d2d" rx="5"/>
<path d="M2511.05,1696.83A48.40,48.40 0 1 1 2574.55,1696.83" fill="none" stroke="#484848" stroke-width="4.6"/>
<path d="M2510.41,1696.27A48.40,48.40 0 0 1 2542.80,1611.90" fill="none" stroke="#ff8a1a" stroke-width="4.6"/>
<circle cx="2542.8" cy="1660.3" r="37.5" fill="#232323"/>
<circle cx="2542.8" cy="1660.3" r="35.3" fill="url(#gDark)"/>
<line x1="2542.8" y1="1650.8" x2="2542.8" y2="1625.9" stroke="#f0f0f0" stroke-width="6.001" />
<text x="2543.5" y="1722.2" font-size="24" fill="#e6e6e6" text-anchor="middle" textLength="97.0" lengthAdjust="spacingAndGlyphs" stroke="#e6e6e6" stroke-width="0.22">Wet Gain</text>
<path d="M2511.05,1850.53A48.40,48.40 0 1 1 2574.55,1850.53" fill="none" stroke="#484848" stroke-width="4.6"/>
<path d="M2510.41,1849.97A48.40,48.40 0 1 1 2575.19,1849.97" fill="none" stroke="#ff8a1a" stroke-width="4.6"/>
<circle cx="2542.8" cy="1814.0" r="37.5" fill="#232323"/>
<circle cx="2542.8" cy="1814.0" r="35.3" fill="url(#gDark)"/>
<line x1="2548.8" y1="1821.4" x2="2564.5" y2="1840.7" stroke="#f0f0f0" stroke-width="6.001" />
<text x="2543.5" y="1876.2" font-size="24" fill="#e6e6e6" text-anchor="middle" textLength="38.0" lengthAdjust="spacingAndGlyphs" stroke="#e6e6e6" stroke-width="0.22">Mix</text>
<rect x="2636.0" y="1397.1" width="670.8" height="11.4" fill="#456c84"/>
<rect x="2636.0" y="1397.1" width="20.1" height="17.9" fill="#456c84"/>
<rect x="3322.0" y="1397.1" width="120.0" height="11.4" fill="url(#gGreenBar)"/>
<rect x="3322.0" y="1397.1" width="19.8" height="17.9" fill="#3c8c50"/>
<path d="M2634.2,1660.8H2655.2M2644.7,1650.3V1671.3" fill="none" stroke="#3f6a85" stroke-width="4.2"/>
<path d="M3319.9,1660.8H3340.9M3330.4,1650.3V1671.3" fill="none" stroke="#3f8a4a" stroke-width="4.2"/>
<rect x="2635.2" y="1825.2" width="9.0" height="8.9" fill="#ff7400"/>
<rect x="2635.2" y="1834.1" width="9.0" height="8.9" fill="#ffd83a"/>
<rect x="2635.2" y="1843.0" width="9.0" height="50.7" fill="url(#gMeter)"/>
<rect x="2635.2" y="1811.0" width="9.0" height="3.2" fill="#ff7400"/>
<rect x="2646.0" y="1825.2" width="9.0" height="8.9" fill="#ff7400"/>
<rect x="2646.0" y="1834.1" width="9.0" height="8.9" fill="#ffd83a"/>
<rect x="2646.0" y="1843.0" width="9.0" height="50.7" fill="url(#gMeter)"/>
<rect x="2646.0" y="1811.0" width="9.0" height="3.2" fill="#ff7400"/>
<rect x="3321.3" y="1813.0" width="9.0" height="22.6" fill="#ff7400"/>
<rect x="3321.3" y="1835.6" width="9.0" height="8.1" fill="#ffd83a"/>
<rect x="3321.3" y="1843.7" width="9.0" height="50.0" fill="url(#gMeter)"/>
<rect x="3321.3" y="1810.5" width="9.0" height="3.2" fill="#ff7400"/>
<rect x="3332.1" y="1813.0" width="9.0" height="22.6" fill="#ff7400"/>
<rect x="3332.1" y="1835.6" width="9.0" height="8.1" fill="#ffd83a"/>
<rect x="3332.1" y="1843.7" width="9.0" height="50.0" fill="url(#gMeter)"/>
<rect x="3332.1" y="1810.5" width="9.0" height="3.2" fill="#ff7400"/>
<rect x="2668.3" y="1415.0" width="638.5" height="492.0" fill="#555555" rx="11"/>
<path d="M2679.3,1415H2727.1000000000004V1907H2679.3Q2668.3,1907 2668.3,1896V1426Q2668.3,1415 2679.3,1415Z" fill="#404040"/>
<path d="M2702.41,1434.94A9.60,9.60 0 1 1 2691.39,1434.94" fill="none" stroke="#ff8a1a" stroke-width="3.2" stroke-linecap="round"/>
<line x1="2696.9" y1="1430.6" x2="2696.9" y2="1442.8" stroke="#ff8a1a" stroke-width="3.2" stroke-linecap="round"/>
<path d="M2683.4,1482.85Q2683.4,1478.5 2687.75,1478.5H2693.55L2697.175,1482.125H2706.6V1485.75H2689.2000000000003L2683.4,1500.25Z" fill="#707070"/>
<path d="M2689.925,1487.2H2711.675L2706.6,1501.7H2684.56Z" fill="#8e8e8e"/>
<circle cx="2696.9" cy="1839.4" r="10.0" fill="#dcdcdc"/>
<line x1="2696.9" y1="1830.4" x2="2696.9" y2="1837.9" stroke="#404040" stroke-width="2.6" />
<circle cx="2688.9" cy="1882.2" r="3.6" fill="none" stroke="#dcdcdc" stroke-width="2.2"/>
<line x1="2692.9" y1="1882.2" x2="2702.9" y2="1882.2" stroke="#dcdcdc" stroke-width="2.4" />
<path d="M2701.4,1877.2L2708.9,1882.2L2701.4,1887.2Z" fill="#dcdcdc"/>
<text x="0" y="0" font-size="24" fill="#ffffff" text-anchor="middle" transform="translate(2705.6 1661.6) rotate(-90)" textLength="167" lengthAdjust="spacingAndGlyphs">TREEMONSTER</text>
<rect x="2733.0" y="1420.7" width="442.9" height="477.9" fill="#1c1c1c" rx="5"/>
<line x1="2747.7" y1="1420.7" x2="2747.7" y2="1728.9" stroke="#2a2a2a" stroke-width="1.1" />
<line x1="2772.1" y1="1420.7" x2="2772.1" y2="1728.9" stroke="#2a2a2a" stroke-width="1.1" />
<line x1="2789.4" y1="1420.7" x2="2789.4" y2="1728.9" stroke="#2a2a2a" stroke-width="1.1" />
<line x1="2802.8" y1="1420.7" x2="2802.8" y2="1728.9" stroke="#2a2a2a" stroke-width="1.1" />
<line x1="2813.8" y1="1420.7" x2="2813.8" y2="1728.9" stroke="#2a2a2a" stroke-width="1.1" />
<line x1="2823.1" y1="1420.7" x2="2823.1" y2="1728.9" stroke="#2a2a2a" stroke-width="1.1" />
<line x1="2831.1" y1="1420.7" x2="2831.1" y2="1728.9" stroke="#2a2a2a" stroke-width="1.1" />
<line x1="2838.2" y1="1420.7" x2="2838.2" y2="1728.9" stroke="#2a2a2a" stroke-width="1.1" />
<line x1="2844.5" y1="1420.7" x2="2844.5" y2="1728.9" stroke="#383838" stroke-width="1.1" />
<line x1="2886.2" y1="1420.7" x2="2886.2" y2="1728.9" stroke="#2a2a2a" stroke-width="1.1" />
<line x1="2910.6" y1="1420.7" x2="2910.6" y2="1728.9" stroke="#2a2a2a" stroke-width="1.1" />
<line x1="2927.9" y1="1420.7" x2="2927.9" y2="1728.9" stroke="#2a2a2a" stroke-width="1.1" />
<line x1="2941.3" y1="1420.7" x2="2941.3" y2="1728.9" stroke="#2a2a2a" stroke-width="1.1" />
<line x1="2952.3" y1="1420.7" x2="2952.3" y2="1728.9" stroke="#2a2a2a" stroke-width="1.1" />
<line x1="2961.6" y1="1420.7" x2="2961.6" y2="1728.9" stroke="#2a2a2a" stroke-width="1.1" />
<line x1="2969.6" y1="1420.7" x2="2969.6" y2="1728.9" stroke="#2a2a2a" stroke-width="1.1" />
<line x1="2976.7" y1="1420.7" x2="2976.7" y2="1728.9" stroke="#2a2a2a" stroke-width="1.1" />
<line x1="2983.0" y1="1420.7" x2="2983.0" y2="1728.9" stroke="#383838" stroke-width="1.1" />
<line x1="3024.7" y1="1420.7" x2="3024.7" y2="1728.9" stroke="#2a2a2a" stroke-width="1.1" />
<line x1="3049.1" y1="1420.7" x2="3049.1" y2="1728.9" stroke="#2a2a2a" stroke-width="1.1" />
<line x1="3066.4" y1="1420.7" x2="3066.4" y2="1728.9" stroke="#2a2a2a" stroke-width="1.1" />
<line x1="3079.8" y1="1420.7" x2="3079.8" y2="1728.9" stroke="#2a2a2a" stroke-width="1.1" />
<line x1="3090.8" y1="1420.7" x2="3090.8" y2="1728.9" stroke="#2a2a2a" stroke-width="1.1" />
<line x1="3100.1" y1="1420.7" x2="3100.1" y2="1728.9" stroke="#2a2a2a" stroke-width="1.1" />
<line x1="3108.1" y1="1420.7" x2="3108.1" y2="1728.9" stroke="#2a2a2a" stroke-width="1.1" />
<line x1="3115.2" y1="1420.7" x2="3115.2" y2="1728.9" stroke="#2a2a2a" stroke-width="1.1" />
<line x1="3121.5" y1="1420.7" x2="3121.5" y2="1728.9" stroke="#383838" stroke-width="1.1" />
<line x1="2733.0" y1="1460.7" x2="3175.9" y2="1460.7" stroke="#b8b8b8" stroke-width="1.1" />
<line x1="2733.0" y1="1492.3" x2="3121.5" y2="1492.3" stroke="#2c2c2c" stroke-width="1.1" />
<line x1="2733.0" y1="1523.1" x2="3121.5" y2="1523.1" stroke="#2c2c2c" stroke-width="1.1" />
<line x1="2733.0" y1="1553.9" x2="3121.5" y2="1553.9" stroke="#2c2c2c" stroke-width="1.1" />
<line x1="2733.0" y1="1584.7" x2="3121.5" y2="1584.7" stroke="#2c2c2c" stroke-width="1.1" />
<line x1="2733.0" y1="1615.9" x2="3121.5" y2="1615.9" stroke="#2c2c2c" stroke-width="1.1" />
<line x1="2733.0" y1="1646.4" x2="3121.5" y2="1646.4" stroke="#2c2c2c" stroke-width="1.1" />
<line x1="2733.0" y1="1677.6" x2="3121.5" y2="1677.6" stroke="#2c2c2c" stroke-width="1.1" />
<line x1="2733.0" y1="1708.4" x2="3121.5" y2="1708.4" stroke="#2c2c2c" stroke-width="1.1" />
<line x1="2746.7" y1="1728.9" x2="3121.5" y2="1728.9" stroke="#3a3a3a" stroke-width="1.2" />
<path d="M2753.2,1728.9L2760.8,1703.4L2772.2,1676.8L2787.4,1642.6L2802.6,1615.9L2817.9,1589.3L2833.1,1568.4L2848.3,1558.8L2867.3,1556.9L2886.4,1549.3L2901.6,1543.6L2916.8,1541.7L2932.0,1524.6L2947.2,1520.8L2958.7,1501.8L2973.9,1509.4L2992.9,1513.2L3004.3,1496.1L3015.7,1511.3L3031.0,1501.8L3042.4,1480.8L3053.8,1494.2L3065.2,1513.2L3076.6,1547.4L3088.0,1585.5L3095.6,1623.5L3103.3,1676.8L3110.9,1728.9Z" fill="#2f2f2f"/>
<path d="M2733.0,1646.4C2743.5,1641.9 2754.3,1637.5 2764.6,1633.0C2774.9,1628.6 2786.2,1624.5 2795.0,1619.7C2803.9,1615.0 2810.3,1609.1 2817.9,1604.5C2825.5,1599.9 2834.0,1594.7 2840.7,1592.3C2847.4,1589.9 2852.4,1591.5 2857.8,1590.0C2863.2,1588.6 2868.9,1585.0 2873.0,1583.6C2877.2,1582.2 2879.6,1580.6 2882.6,1581.7C2885.5,1582.8 2888.1,1591.9 2890.9,1590.0C2893.8,1588.1 2896.6,1575.8 2899.7,1570.3C2902.7,1564.7 2906.7,1559.0 2909.2,1556.9C2911.7,1554.9 2912.4,1561.3 2914.9,1558.1C2917.4,1554.9 2921.6,1542.2 2924.4,1537.9C2927.3,1533.6 2928.9,1530.0 2932.0,1532.2C2935.2,1534.4 2940.3,1550.9 2943.4,1551.2C2946.6,1551.5 2948.8,1535.4 2951.1,1534.1C2953.3,1532.8 2954.9,1539.8 2956.8,1543.6C2958.7,1547.4 2960.6,1559.5 2962.5,1556.9C2964.4,1554.4 2966.3,1537.0 2968.2,1528.4C2970.1,1519.8 2972.0,1514.8 2973.9,1505.6C2975.8,1496.4 2977.4,1477.0 2979.6,1473.2C2981.8,1469.4 2985.0,1481.7 2987.2,1482.7C2989.4,1483.8 2990.7,1478.4 2992.9,1479.7C2995.1,1481.0 2998.0,1490.6 3000.5,1490.4C3003.1,1490.1 3005.3,1476.3 3008.1,1478.2C3011.0,1480.1 3014.8,1502.3 3017.6,1501.8C3020.5,1501.3 3023.0,1480.2 3025.3,1475.1C3027.5,1470.1 3029.1,1470.2 3031.0,1471.3C3032.9,1472.5 3034.9,1485.0 3036.7,1482.0C3038.4,1478.9 3039.9,1452.9 3041.6,1453.1C3043.3,1453.2 3045.2,1483.5 3046.9,1482.7C3048.7,1482.0 3050.4,1451.0 3051.9,1448.5C3053.3,1446.0 3054.6,1455.5 3055.7,1467.5C3056.8,1479.6 3057.1,1513.5 3058.4,1520.8C3059.6,1528.1 3061.5,1510.6 3063.3,1511.3C3065.1,1511.9 3066.8,1522.1 3069.0,1524.6C3071.2,1527.1 3073.8,1528.4 3076.6,1526.5C3079.5,1524.6 3083.3,1515.7 3086.1,1513.2C3089.0,1510.6 3091.8,1513.5 3093.7,1511.3C3095.6,1509.1 3095.6,1499.2 3097.5,1499.9C3099.5,1500.5 3102.6,1516.0 3105.2,1515.1C3107.7,1514.1 3110.0,1502.0 3112.8,1494.2C3115.5,1486.4 3119.0,1469.5 3121.5,1468.3C3124.1,1467.0 3125.6,1478.4 3128.0,1486.5C3130.3,1494.7 3133.1,1513.8 3135.6,1517.0C3138.1,1520.2 3140.9,1512.9 3143.2,1505.6C3145.6,1498.3 3147.8,1474.5 3149.7,1473.2C3151.6,1472.0 3153.2,1492.3 3154.6,1498.0C3156.1,1503.7 3157.2,1504.3 3158.4,1507.5" fill="none" stroke="#a0a0a0" stroke-width="1.8"/>
<text x="2765.7" y="1454.4" font-size="20" fill="#8e8e8e" text-anchor="middle" stroke="#8e8e8e" stroke-width="0.22">20</text>
<text x="2868.9" y="1454.4" font-size="20" fill="#8e8e8e" text-anchor="middle" stroke="#8e8e8e" stroke-width="0.22">100</text>
<text x="2999.8" y="1454.4" font-size="20" fill="#8e8e8e" text-anchor="middle" stroke="#8e8e8e" stroke-width="0.22">1k</text>
<text x="3145.1" y="1454.4" font-size="20" fill="#8e8e8e" text-anchor="middle" stroke="#8e8e8e" stroke-width="0.22">10k</text>
<text x="3161.5" y="1505.6" font-size="20" fill="#8e8e8e" text-anchor="end" stroke="#8e8e8e" stroke-width="0.22">-20</text>
<text x="3161.5" y="1566.5" font-size="20" fill="#8e8e8e" text-anchor="end" stroke="#8e8e8e" stroke-width="0.22">-40</text>
<text x="3161.5" y="1628.1" font-size="20" fill="#8e8e8e" text-anchor="end" stroke="#8e8e8e" stroke-width="0.22">-60</text>
<text x="3161.5" y="1690.1" font-size="20" fill="#8e8e8e" text-anchor="end" stroke="#8e8e8e" stroke-width="0.22">-80</text>
<line x1="2733.0" y1="1530.7" x2="3175.9" y2="1530.7" stroke="#ffdd40" stroke-width="2.4" />
<line x1="3053.4" y1="1420.7" x2="3053.4" y2="1728.9" stroke="#e0e0e0" stroke-width="1.2" />
<circle cx="3052.8" cy="1460.2" r="3.4" fill="#ffffff"/>
<line x1="2846.0" y1="1420.7" x2="2846.0" y2="1728.9" stroke="#fa2a50" stroke-width="3" />
<circle cx="2846.4" cy="1530.7" r="12.6" fill="#fa2a50"/>
<path d="M2842.2,1535V1527.5H2850" fill="none" stroke="#3a0a14" stroke-width="1.8"/>
<line x1="3069.4" y1="1420.7" x2="3069.4" y2="1728.9" stroke="#58a8f0" stroke-width="3" />
<circle cx="3069.4" cy="1530.7" r="12.6" fill="#58a8f0"/>
<path d="M3065.5,1527.5H3073.2V1535" fill="none" stroke="#0a2038" stroke-width="1.8"/>
<text x="2847.5" y="1765.2" font-size="25" fill="#fa2a50" text-anchor="middle" textLength="78.0" lengthAdjust="spacingAndGlyphs" stroke="#fa2a50" stroke-width="0.22">103 Hz</text>
<text x="3062.5" y="1765.2" font-size="25" fill="#58a8f0" text-anchor="middle" textLength="98.0" lengthAdjust="spacingAndGlyphs" stroke="#58a8f0" stroke-width="0.22">4.18 kHz</text>
<path d="M2766.68,1852.08A39.20,39.20 0 1 1 2818.12,1852.08" fill="none" stroke="#4a4a4a" stroke-width="4.6"/>
<circle cx="2792.4" cy="1822.5" r="29.2" fill="#232323"/>
<circle cx="2792.4" cy="1822.5" r="27.0" fill="url(#gLight)"/>
<line x1="2792.4" y1="1815.2" x2="2792.4" y2="1796.2" stroke="#0a0a0a" stroke-width="5" />
<path d="M2790.35,1783.35A39.20,39.20 0 0 1 2794.45,1783.35" fill="none" stroke="#ff8a1a" stroke-width="4.6"/>
<text x="2793.4" y="1881.6" font-size="25" fill="#e6e6e6" text-anchor="middle" textLength="54.5" lengthAdjust="spacingAndGlyphs" stroke="#e6e6e6" stroke-width="0.22">Pitch</text>
<path d="M2874.68,1852.08A39.20,39.20 0 1 1 2926.12,1852.08" fill="none" stroke="#4a4a4a" stroke-width="4.6"/>
<path d="M2932.51,1800.02A39.20,39.20 0 0 1 2926.63,1851.63" fill="none" stroke="#ff8a1a" stroke-width="4.6"/>
<circle cx="2900.4" cy="1822.5" r="29.2" fill="#232323"/>
<circle cx="2900.4" cy="1822.5" r="27.0" fill="url(#gLight)"/>
<line x1="2906.4" y1="1818.3" x2="2922.0" y2="1807.4" stroke="#0a0a0a" stroke-width="5" />
<text x="2901.4" y="1881.6" font-size="25" fill="#e6e6e6" text-anchor="middle" textLength="108.0" lengthAdjust="spacingAndGlyphs" stroke="#e6e6e6" stroke-width="0.22">Threshold</text>
<path d="M2982.78,1852.08A39.20,39.20 0 1 1 3034.22,1852.08" fill="none" stroke="#4a4a4a" stroke-width="4.6"/>
<path d="M2982.27,1851.63A39.20,39.20 0 0 1 2995.09,1785.66" fill="none" stroke="#ff8a1a" stroke-width="4.6"/>
<circle cx="3008.5" cy="1822.5" r="29.2" fill="#232323"/>
<circle cx="3008.5" cy="1822.5" r="27.0" fill="url(#gLight)"/>
<line x1="3006.0" y1="1815.6" x2="2999.5" y2="1797.8" stroke="#0a0a0a" stroke-width="5" />
<text x="3009.5" y="1881.6" font-size="25" fill="#e6e6e6" text-anchor="middle" textLength="67.0" lengthAdjust="spacingAndGlyphs" stroke="#e6e6e6" stroke-width="0.22">Speed</text>
<path d="M3090.88,1852.08A39.20,39.20 0 1 1 3142.32,1852.08" fill="none" stroke="#4a4a4a" stroke-width="4.6"/>
<path d="M3090.37,1851.63A39.20,39.20 0 0 1 3113.18,1783.45" fill="none" stroke="#ff8a1a" stroke-width="4.6"/>
<circle cx="3116.6" cy="1822.5" r="29.2" fill="#232323"/>
<circle cx="3116.6" cy="1822.5" r="27.0" fill="url(#gLight)"/>
<line x1="3116.0" y1="1815.2" x2="3114.3" y2="1796.3" stroke="#0a0a0a" stroke-width="5" />
<text x="3117.6" y="1881.6" font-size="25" fill="#e6e6e6" text-anchor="middle" textLength="47.0" lengthAdjust="spacingAndGlyphs" stroke="#e6e6e6" stroke-width="0.22">Ring</text>
<rect x="2941.5" y="1783.3" width="17.2" height="16.4" fill="#ffdd40"/>
<rect x="3183.2" y="1421.9" width="117.9" height="72.3" fill="#1c1c1c" rx="5"/>
<path d="M3190.8,1435.2V1428.8H3294.2V1435.2" fill="none" stroke="#3f8a50" stroke-width="2.4"/>
<rect x="3197.2" y="1435.2" width="18.3" height="53.2" fill="#444444"/>
<text x="3242.1" y="1467.0" font-size="25" fill="#ffffff" text-anchor="middle" textLength="78.0" lengthAdjust="spacingAndGlyphs" stroke="#ffffff" stroke-width="0.22">Wet FX</text>
<rect x="3183.2" y="1502.5" width="117.9" height="396.1" fill="#3e3e3e" rx="5"/>
<path d="M3216.78,1852.08A39.20,39.20 0 1 1 3268.22,1852.08" fill="none" stroke="#484848" stroke-width="4.6"/>
<path d="M3216.27,1851.63A39.20,39.20 0 1 1 3268.73,1851.63" fill="none" stroke="#ff8a1a" stroke-width="4.6"/>
<circle cx="3242.5" cy="1822.5" r="29.6" fill="#232323"/>
<circle cx="3242.5" cy="1822.5" r="27.4" fill="url(#gDark)"/>
<line x1="3247.2" y1="1828.2" x2="3259.3" y2="1843.3" stroke="#f0f0f0" stroke-width="4.658" />
<text x="3243.0" y="1881.6" font-size="25" fill="#e6e6e6" text-anchor="middle" textLength="40.0" lengthAdjust="spacingAndGlyphs" stroke="#e6e6e6" stroke-width="0.22">Mix</text>
<g clip-path="url(#clipB8)">
<rect x="3354.4" y="1415.0" width="145.6" height="492.0" fill="#555555" rx="11"/>
<path d="M3365.4,1415H3413.2000000000003V1907H3365.4Q3354.4,1907 3354.4,1896V1426Q3354.4,1415 3365.4,1415Z" fill="#404040"/>
<path d="M3388.51,1434.94A9.60,9.60 0 1 1 3377.49,1434.94" fill="none" stroke="#ff8a1a" stroke-width="3.2" stroke-linecap="round"/>
<line x1="3383.0" y1="1430.6" x2="3383.0" y2="1442.8" stroke="#ff8a1a" stroke-width="3.2" stroke-linecap="round"/>
<path d="M3369.5,1482.85Q3369.5,1478.5 3373.85,1478.5H3379.65L3383.275,1482.125H3392.7V1485.75H3375.3L3369.5,1500.25Z" fill="#707070"/>
<path d="M3376.025,1487.2H3397.775L3392.7,1501.7H3370.66Z" fill="#8e8e8e"/>
<circle cx="3383.0" cy="1839.4" r="10.0" fill="#dcdcdc"/>
<line x1="3383.0" y1="1830.4" x2="3383.0" y2="1837.9" stroke="#404040" stroke-width="2.6" />
<circle cx="3375.0" cy="1882.2" r="3.6" fill="none" stroke="#dcdcdc" stroke-width="2.2"/>
<line x1="3379.0" y1="1882.2" x2="3389.0" y2="1882.2" stroke="#dcdcdc" stroke-width="2.4" />
<path d="M3387.5,1877.2L3395.0,1882.2L3387.5,1887.2Z" fill="#dcdcdc"/>
<text x="0" y="0" font-size="24" fill="#ffffff" text-anchor="middle" transform="translate(3391.5 1660.3) rotate(-90)" textLength="54.5" lengthAdjust="spacingAndGlyphs">BIT-8</text>
<rect x="3419.5" y="1420.7" width="60.0" height="478.0" fill="#2d2d2d" rx="5"/>
<rect x="3405.0" y="1388.3" width="37.0" height="545.0" fill="url(#gFadeR)"/>
</g>
<rect x="0.0" y="1938.2" width="3456.0" height="81.0" fill="#2d2d2d"/>
<circle cx="51.6" cy="1966.2" r="2.6" fill="#d8d8d8"/>
<path d="M47.6,1973.2H53.2V1986.5M47,1987.4H56" fill="none" stroke="#d8d8d8" stroke-width="3.4"/>
<line x1="96.9" y1="1955.0" x2="96.9" y2="1999.7" stroke="#888888" stroke-width="3.8" />
<line x1="451.2" y1="1955.0" x2="451.2" y2="1999.7" stroke="#888888" stroke-width="3.8" />
<text x="132.6" y="1985.0" font-size="25" fill="#ff8a1a" text-anchor="start" textLength="115.6" lengthAdjust="spacingAndGlyphs" stroke="#ff8a1a" stroke-width="0.22">ARRANGE</text>
<text x="282.0" y="1985.0" font-size="25" fill="#d8d8d8" text-anchor="start" textLength="45.0" lengthAdjust="spacingAndGlyphs" stroke="#d8d8d8" stroke-width="0.22">MIX</text>
<text x="361.6" y="1985.0" font-size="25" fill="#d8d8d8" text-anchor="start" textLength="53.5" lengthAdjust="spacingAndGlyphs" stroke="#d8d8d8" stroke-width="0.22">EDIT</text>
<rect x="485.0" y="1966.0" width="6.5" height="3.4" fill="#d8d8d8"/>
<rect x="495.5" y="1966.0" width="6.5" height="3.4" fill="#d8d8d8"/>
<rect x="498.0" y="1975.5" width="10.0" height="3.4" fill="#d8d8d8"/>
<rect x="485.0" y="1985.0" width="6.5" height="3.4" fill="#d8d8d8"/>
<rect x="495.5" y="1985.0" width="6.5" height="3.4" fill="#d8d8d8"/>
<rect x="491.5" y="1975.5" width="3.5" height="3.4" fill="#d8d8d8"/>
<rect x="503.0" y="1971.0" width="5.5" height="3.4" fill="#d8d8d8"/>
<rect x="503.0" y="1980.5" width="5.5" height="3.4" fill="#d8d8d8"/>
<line x1="558.5" y1="1983.0" x2="572.5" y2="1969.5" stroke="#d8d8d8" stroke-width="2.6" />
<circle cx="556.0" cy="1985.5" r="4.6" fill="#2d2d2d" stroke="#d8d8d8" stroke-width="2.6"/>
<circle cx="575.0" cy="1967.0" r="4.6" fill="#2d2d2d" stroke="#d8d8d8" stroke-width="2.6"/>
<rect x="619.0" y="1961.5" width="30.5" height="30.0" fill="#7a4a1a" rx="4.5" stroke="#ff8a1a" stroke-width="2.6"/>
<rect x="619.0" y="1961.5" width="7.5" height="30.0" fill="#ff8a1a" rx="2"/>
<line x1="691.8" y1="1962.0" x2="691.8" y2="1992.0" stroke="#d8d8d8" stroke-width="2.6" />
<rect x="687.2" y="1975.4" width="9.2" height="5.2" fill="#2d2d2d" stroke="#d8d8d8" stroke-width="2.2"/>
<line x1="703.2" y1="1962.0" x2="703.2" y2="1992.0" stroke="#d8d8d8" stroke-width="2.6" />
<rect x="698.6" y="1981.9" width="9.2" height="5.2" fill="#2d2d2d" stroke="#d8d8d8" stroke-width="2.2"/>
<line x1="714.6" y1="1962.0" x2="714.6" y2="1992.0" stroke="#d8d8d8" stroke-width="2.6" />
<rect x="710.0" y="1966.9" width="9.2" height="5.2" fill="#2d2d2d" stroke="#d8d8d8" stroke-width="2.2"/>
<circle cx="3100.4" cy="1974.4" r="10.4" fill="none" stroke="#c6c6c6" stroke-width="4.4"/>
<line x1="3108.2" y1="1982.4" x2="3114.6" y2="1988.6" stroke="#c6c6c6" stroke-width="5.4" stroke-linecap="round"/>
<path d="M3162,1961.7H3171L3184.2,1974.5V1988Q3184.2,1991 3181.2,1991H3162Q3159,1991 3159,1988V1964.7Q3159,1961.7 3162,1961.7Z" fill="url(#gFile)"/>
<path d="M3171,1961.7L3184.2,1974.5H3171Z" fill="#d4d4d4"/>
<path d="M3232,1958.8Q3240.3,1957.6 3248.6,1958.8Q3252.5,1959.6 3253.2,1963.5Q3257.5,1978 3253.6,1990Q3252.6,1993.4 3249,1994Q3240.3,1995.6 3231.6,1994Q3228,1993.4 3227,1990Q3223.1,1978 3227.4,1963.5Q3228.1,1959.6 3232,1958.8Z" fill="#c6c6c6"/>
<circle cx="3240.3" cy="1980.3" r="9.6" fill="#2d2d2d"/>
<circle cx="3240.3" cy="1980.3" r="3.6" fill="#c6c6c6"/>
<circle cx="3240.3" cy="1965.7" r="2.7" fill="#2d2d2d"/>
<path d="M3300.5,1990.5L3294.5,1979.5Q3293.5,1976.5 3296.5,1976.5L3300,1980V1964.5Q3300,1962 3302.3,1962T3304.6,1964.5V1973H3305.6V1971Q3305.6,1969 3307.8,1969T3310,1971V1974H3311V1972.5Q3311,1970.6 3313.2,1970.6T3315.4,1972.5V1975H3316.2Q3316.2,1973 3318.2,1973T3320.2,1975.5V1984L3318,1990.5Z" fill="#c6c6c6"/>
<line x1="3356.9" y1="1955.0" x2="3356.9" y2="1999.7" stroke="#888888" stroke-width="3.8" />
<rect x="3389.6" y="1961.7" width="29.3" height="29.3" fill="#c6c6c6"/>
<rect x="3396.3" y="1961.2" width="4.2" height="17.2" fill="#2d2d2d"/>
<rect x="3408.1" y="1961.2" width="4.5" height="17.2" fill="#2d2d2d"/>
<line x1="3398.7" y1="1977.9" x2="3398.7" y2="1991.5" stroke="#2d2d2d" stroke-width="1.4" />
<line x1="3410.0" y1="1977.9" x2="3410.0" y2="1991.5" stroke="#2d2d2d" stroke-width="1.4" />
</svg>
</body></html>
